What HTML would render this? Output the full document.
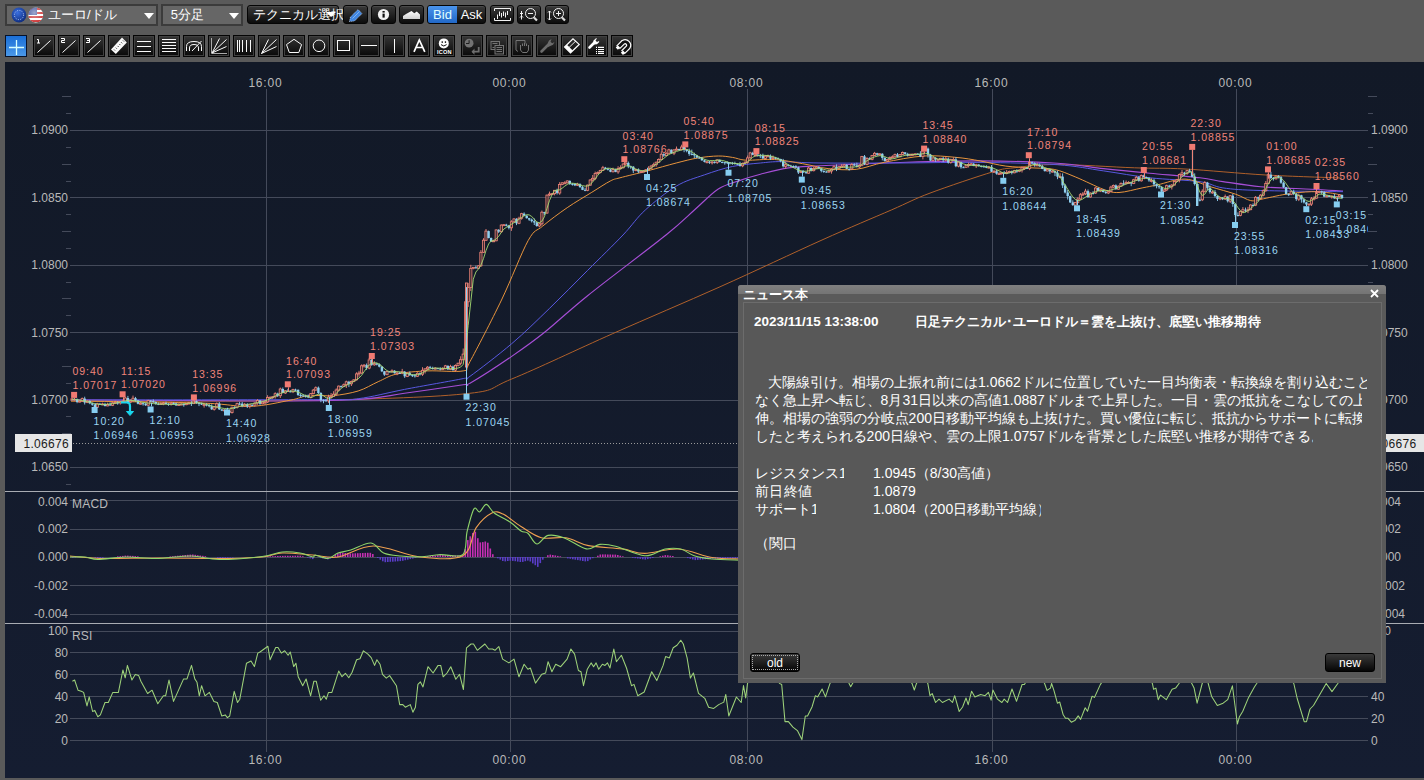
<!DOCTYPE html><html><head><meta charset="utf-8"><style>
*{margin:0;padding:0;box-sizing:border-box}
html,body{width:1424px;height:780px;overflow:hidden;background:#5a5a5a;font-family:"Liberation Sans",sans-serif}
.abs{position:absolute}
.dd{position:absolute;top:4px;height:22px;background:#666;border:2px solid #3b3b3b;color:#fff;font-size:13px;line-height:18px}
.dd .arr{position:absolute;top:7px;width:0;height:0;border-left:5px solid transparent;border-right:5px solid transparent;border-top:6px solid #fff}
.bt{position:absolute;top:5px;height:19px;width:25px;border-radius:3px;background:linear-gradient(#3a3a3a,#0c0c0c);border:1px solid #050505;box-shadow:inset 0 1px 0 #4a4a4a}
.tb{position:absolute;top:35px;width:22px;height:22px;background:linear-gradient(#363636,#080808);border:1px solid #050505;box-shadow:inset 0 0 0 1px #404040}
.tb svg{position:absolute;left:0;top:0}
</style></head><body>
<div class="dd" style="left:5px;width:153px"><svg class="abs" style="left:3.6px;top:1.3px" width="40" height="16" viewBox="0 0 40 16"><defs><radialGradient id="eu" cx="40%" cy="35%" r="70%"><stop offset="0" stop-color="#3a6fe0"/><stop offset="1" stop-color="#0d2a7a"/></radialGradient><radialGradient id="us" cx="40%" cy="35%" r="70%"><stop offset="0" stop-color="#fff" stop-opacity=".5"/><stop offset="1" stop-color="#fff" stop-opacity="0"/></radialGradient></defs><circle cx="8" cy="8" r="7.4" fill="url(#eu)"/><circle cx="8" cy="8" r="4.6" fill="none" stroke="#b8d0ff" stroke-width="1" stroke-dasharray="1 1.4"/><clipPath id="uc"><circle cx="24.8" cy="8" r="7.4"/></clipPath><g clip-path="url(#uc)"><rect x="17" y="0" width="16" height="16" fill="#fff"/><rect x="17" y="1" width="16" height="2" fill="#c33"/><rect x="17" y="5" width="16" height="2" fill="#c33"/><rect x="17" y="9" width="16" height="2" fill="#c33"/><rect x="17" y="13" width="16" height="2" fill="#c33"/><rect x="17" y="0" width="9" height="8" fill="#3b4f9a"/><circle cx="24.8" cy="8" r="7.4" fill="url(#us)"/></g></svg><span class="abs" style="left:41px;top:-0.5px;width:53.4px;line-height:18px;white-space:nowrap;text-align:justify;text-align-last:justify">ユーロ/ドル</span><span class="arr" style="left:137px"></span></div>
<div class="dd" style="left:161px;width:82px"><span class="abs" style="left:7.8px;top:-0.5px;width:28.1px;line-height:18px;white-space:nowrap;text-align:justify;text-align-last:justify">5分足</span><span class="arr" style="left:66px"></span></div>
<div class="bt" style="left:247px;width:92px;color:#fff;font-size:13px;line-height:17px"><span class="abs" style="left:4.9px;top:0;width:68px;white-space:nowrap;text-align:justify;text-align-last:justify">テクニカル選択</span><span class="abs" style="left:78px;top:6px;width:0;height:0;border-left:5px solid transparent;border-right:5px solid transparent;border-top:5px solid #fff"></span></div>
<div class="bt" style="left:343px;width:25px;"><svg class="abs" style="left:-1px;top:-1px" width="25" height="19" viewBox="0 0 25 19"><path d="M6.5 16.5L7.5 12L15 4.5L19 8.5L11.5 16Z" fill="#3f85e0" stroke="#cfe2ff" stroke-width="0.7" stroke-dasharray="1 0.8"/><path d="M9.5 13.5L16.5 6.5" stroke="#9cc4f4" stroke-width="0.7"/></svg></div>
<div class="bt" style="left:371px;width:25px;"><svg class="abs" style="left:-1px;top:-1px" width="25" height="19" viewBox="0 0 25 19"><circle cx="12.5" cy="9.5" r="5.6" fill="#f4f4f4"/><rect x="11.5" y="6" width="2.2" height="1.6" fill="#111"/><rect x="11.5" y="8.6" width="2.2" height="4" fill="#111"/></svg></div>
<div class="bt" style="left:399px;width:25px;"><svg class="abs" style="left:-1px;top:-1px" width="25" height="19" viewBox="0 0 25 19"><defs><linearGradient id="mt" x1="0" y1="0" x2="0" y2="1"><stop offset="0" stop-color="#fff"/><stop offset="1" stop-color="#d0d0d0"/></linearGradient></defs><path d="M4 14V11L7 9L12.5 6L15.3 8.2L17.8 6.6L21 9.5V14Z" fill="url(#mt)"/></svg></div>
<div class="bt" style="left:427px;width:59px;color:#fff;font-size:13px;line-height:17px;overflow:hidden"><span class="abs" style="left:0;top:0;width:29px;height:17px;background:linear-gradient(#4a94ec,#2168c8);color:#e0ffff;text-align:center">Bid</span><span class="abs" style="left:29px;top:0;width:29px;text-align:center">Ask</span></div>
<div class="bt" style="left:490px;width:24px;"><svg class="abs" style="left:-1px;top:-1px" width="24" height="19" viewBox="0 0 24 19"><path d="M4.5 6V3.5H20.5V6M4.5 13V15.5H20.5V13" stroke="#f2f2f2" fill="none" stroke-width="1" stroke-width="1.2"/><path d="M7.5 9.5V14M9.5 6.5V11M11.5 8V12.5M13.5 6.5V11M15.5 7.5V12.5M17.5 6V10" stroke="#f2f2f2" fill="none" stroke-width="1"/></svg></div>
<div class="bt" style="left:517px;width:24px;"><svg class="abs" style="left:-1px;top:-1px" width="24" height="19" viewBox="0 0 24 19"><circle cx="13.5" cy="8.5" r="5" stroke="#f2f2f2" fill="none" stroke-width="1" stroke-width="1.3"/><path d="M11 8.5H16" stroke="#f2f2f2" fill="none" stroke-width="1" stroke-width="1.3"/><path d="M17 12.5L20 15.5" stroke="#ddd" stroke-width="2.2"/><path d="M4.5 6V14.5M3 8L4.5 9.5L6 8M3 12.5L4.5 11L6 12.5" stroke="#f2f2f2" fill="none" stroke-width="1"/></svg></div>
<div class="bt" style="left:545px;width:24px;"><svg class="abs" style="left:-1px;top:-1px" width="24" height="19" viewBox="0 0 24 19"><circle cx="13.5" cy="8.5" r="5" stroke="#f2f2f2" fill="none" stroke-width="1" stroke-width="1.3"/><path d="M11 8.5H16M13.5 6V11" stroke="#f2f2f2" fill="none" stroke-width="1" stroke-width="1.3"/><path d="M17 12.5L20 15.5" stroke="#ddd" stroke-width="2.2"/><path d="M4.5 6V15M3 7.5L4.5 6L6 7.5M3 13.5L4.5 15L6 13.5" stroke="#f2f2f2" fill="none" stroke-width="1"/></svg></div>
<div class="tb" style="left:5px;background:linear-gradient(#1a6fd8,#4a98e8);border-color:#06122a;box-shadow:none"><svg width="22" height="22" viewBox="0 0 22 22" style="position:absolute;left:-1px;top:-1px"><path d="M11.5 5V20M4 12.5H19" stroke="#d8ffff" stroke-width="1.3"/></svg></div>
<div class="tb" style="left:33px"><svg width="22" height="22" viewBox="0 0 22 22" style="position:absolute;left:-1px;top:-1px"><path d="M4.5 17.5L17.5 5.5" stroke="#fafafa" fill="none" stroke-width="1" stroke-width="1.4"/><path d="M4 4.5H5.5V8M4 8H7" stroke="#fff" fill="none" stroke-width="1"/></svg></div>
<div class="tb" style="left:58px"><svg width="22" height="22" viewBox="0 0 22 22" style="position:absolute;left:-1px;top:-1px"><path d="M4.5 17.5L17.5 5.5" stroke="#fafafa" fill="none" stroke-width="1" stroke-width="1.4"/><path d="M3 3.5H6.5V5.5H3.5V7.5H7" stroke="#fff" fill="none" stroke-width="1"/></svg></div>
<div class="tb" style="left:83px"><svg width="22" height="22" viewBox="0 0 22 22" style="position:absolute;left:-1px;top:-1px"><path d="M4.5 17.5L17.5 5.5" stroke="#fafafa" fill="none" stroke-width="1" stroke-width="1.4"/><path d="M3 3.5H6.5V7.5H3M4 5.5H6.5" stroke="#fff" fill="none" stroke-width="1"/></svg></div>
<div class="tb" style="left:108px"><svg width="22" height="22" viewBox="0 0 22 22" style="position:absolute;left:-1px;top:-1px"><path d="M3 14.4L7.8 18.9L18.8 7.4L14 2.6Z" fill="#fafafa"/><path d="M6 14.5L7 15.5M7.8 12.7L8.8 13.7M9.6 10.9L10.6 11.9M11.4 9.1L12.4 10.1M13.2 7.3L14.2 8.3M15 5.5L16 6.5" stroke="#222" stroke-width="0.9"/></svg></div>
<div class="tb" style="left:133px"><svg width="22" height="22" viewBox="0 0 22 22" style="position:absolute;left:-1px;top:-1px"><path d="M4 6.5H18M4 11.5H18M4 16.5H18" stroke="#fafafa" fill="none" stroke-width="1" stroke-width="1.3"/></svg></div>
<div class="tb" style="left:158px"><svg width="22" height="22" viewBox="0 0 22 22" style="position:absolute;left:-1px;top:-1px"><path d="M4 4.5H18M4 7.5H18M4 10.5H18M4 13.5H18M4 16.5H18" stroke="#fafafa" fill="none" stroke-width="1" stroke-width="1.2"/></svg></div>
<div class="tb" style="left:183px"><svg width="22" height="22" viewBox="0 0 22 22" style="position:absolute;left:-1px;top:-1px"><path d="M3.5 16V11.5Q3.5 6.5 11 6.5Q18.5 6.5 18.5 11.5V16M6.5 16V13Q6.5 9.5 11 9.5Q15.5 9.5 15.5 13V16" stroke="#fafafa" fill="none" stroke-width="1" stroke-width="1.1"/><path d="M9 16L18.5 6" stroke="#fafafa" fill="none" stroke-width="1"/></svg></div>
<div class="tb" style="left:208px"><svg width="22" height="22" viewBox="0 0 22 22" style="position:absolute;left:-1px;top:-1px"><path d="M3.5 3V18.5H19" stroke="#aaa" fill="none" stroke-width="1"/><path d="M4 18L11.5 3.5M4 18L18.5 4.5M4 18L18.5 11.5" stroke="#fafafa" fill="none" stroke-width="1" stroke-width="1.1"/></svg></div>
<div class="tb" style="left:233px"><svg width="22" height="22" viewBox="0 0 22 22" style="position:absolute;left:-1px;top:-1px"><path d="M4.5 5V17M6.5 5V17M9.5 5V17M13.5 5V17M17.5 5V17" stroke="#fafafa" fill="none" stroke-width="1"/></svg></div>
<div class="tb" style="left:258px"><svg width="22" height="22" viewBox="0 0 22 22" style="position:absolute;left:-1px;top:-1px"><path d="M3.5 18.5L10.5 4.5M3.5 18.5L18.5 4.5M3.5 18.5L18.5 11.5" stroke="#fafafa" fill="none" stroke-width="1" stroke-width="1.1"/></svg></div>
<div class="tb" style="left:283px"><svg width="22" height="22" viewBox="0 0 22 22" style="position:absolute;left:-1px;top:-1px"><path d="M11 4.3L18.6 9.6L15.8 17.5H6.3L3.5 9.6Z" stroke="#fafafa" fill="none" stroke-width="1" stroke-width="1.1"/></svg></div>
<div class="tb" style="left:308px"><svg width="22" height="22" viewBox="0 0 22 22" style="position:absolute;left:-1px;top:-1px"><circle cx="11" cy="10.8" r="5.8" stroke="#fafafa" fill="none" stroke-width="1" stroke-width="1.1"/></svg></div>
<div class="tb" style="left:333px"><svg width="22" height="22" viewBox="0 0 22 22" style="position:absolute;left:-1px;top:-1px"><rect x="4.5" y="5.5" width="12" height="10" stroke="#fafafa" fill="none" stroke-width="1" stroke-width="1.1"/></svg></div>
<div class="tb" style="left:358px"><svg width="22" height="22" viewBox="0 0 22 22" style="position:absolute;left:-1px;top:-1px"><path d="M3 10.5H19" stroke="#fafafa" fill="none" stroke-width="1" stroke-width="1.2"/></svg></div>
<div class="tb" style="left:383px"><svg width="22" height="22" viewBox="0 0 22 22" style="position:absolute;left:-1px;top:-1px"><path d="M11.5 4V18" stroke="#fafafa" fill="none" stroke-width="1" stroke-width="1.2"/></svg></div>
<div class="tb" style="left:408px"><svg width="22" height="22" viewBox="0 0 22 22" style="position:absolute;left:-1px;top:-1px"><path d="M6 16.8L11.3 5L16.8 16.8M8 12.5H14.8" stroke="#fff" fill="none" stroke-width="1.7"/></svg></div>
<div class="tb" style="left:433px"><svg width="22" height="22" viewBox="0 0 22 22" style="position:absolute;left:-1px;top:-1px"><circle cx="10.8" cy="8.4" r="5" fill="#fff"/><rect x="8.6" y="6.3" width="1.3" height="1.6" fill="#111"/><rect x="11.8" y="6.3" width="1.3" height="1.6" fill="#111"/><path d="M8 9.6Q10.8 12.4 13.6 9.6" stroke="#111" stroke-width="1" fill="none"/><text x="11.4" y="19.2" font-size="5.6" font-weight="bold" fill="#fff" text-anchor="middle" letter-spacing="0.2" font-family="Liberation Sans">ICON</text></svg></div>
<div class="tb" style="left:461px"><svg width="22" height="22" viewBox="0 0 22 22" style="position:absolute;left:-1px;top:-1px"><circle cx="8.1" cy="8.2" r="4.4" fill="#737373"/><path d="M8.1 5.2V8.5H5" stroke="#1e1e1e" fill="none" stroke-width="1"/><path d="M17.7 12V16.7H11.5" stroke="#6e6e6e" fill="none" stroke-width="1.8"/><path d="M13.5 13.5L10.5 16.7L13.5 19.8Z" fill="#6e6e6e"/></svg></div>
<div class="tb" style="left:486px"><svg width="22" height="22" viewBox="0 0 22 22" style="position:absolute;left:-1px;top:-1px"><rect x="5" y="6.5" width="8.5" height="8" stroke="#747474" fill="none" stroke-width="1"/><path d="M6.5 8.5H11.5M6.5 12.5H8.5" stroke="#747474" stroke-width="1"/><rect x="9" y="10.5" width="8.5" height="8.5" fill="#1c1c1c" stroke="#747474" stroke-width="1"/><path d="M10.5 12.5H16M10.5 14.5H16M10.5 16.5H16" stroke="#747474" stroke-width="1"/></svg></div>
<div class="tb" style="left:511px"><svg width="22" height="22" viewBox="0 0 22 22" style="position:absolute;left:-1px;top:-1px"><path d="M5 15V5.5H14V8.5" stroke="#747474" fill="none" stroke-width="1"/><path d="M5 15L7 16.5M9.5 15V10M11.5 11V8.5M13.5 11V8M15.5 11V8.5M17.5 12V10M9.5 15L11.5 17.5H16L17.5 15V10" stroke="#747474" fill="none" stroke-width="1"/></svg></div>
<div class="tb" style="left:536px"><svg width="22" height="22" viewBox="0 0 22 22" style="position:absolute;left:-1px;top:-1px"><path d="M5.5 16.5L11.5 10.5" stroke="#6c6c6c" stroke-width="2.6" stroke-linecap="round"/><path d="M10 11.5L13 5.5L15.5 4L14.5 6.8L16.2 8.3L18.5 7L17 9.8L12 12Z" fill="#6c6c6c"/></svg></div>
<div class="tb" style="left:561px"><svg width="22" height="22" viewBox="0 0 22 22" style="position:absolute;left:-1px;top:-1px"><path d="M3.6 12L12 3.9L18.2 9.4L9.5 17.8Z" stroke="#fff" fill="none" stroke-width="1.2"/><path d="M3.6 12L5.9 9.8L11.7 15.6L9.5 17.8Z" fill="#fff"/><path d="M7.5 13L15 5.8" stroke="#fff" stroke-width="0.9"/></svg></div>
<div class="tb" style="left:586px"><svg width="22" height="22" viewBox="0 0 22 22" style="position:absolute;left:-1px;top:-1px"><path d="M3.5 12.5L8.5 7.5" stroke="#fff" stroke-width="2.6" stroke-linecap="round"/><path d="M7 9L7.5 5.5L10 3.3L11 3.5L9.5 5.5L11 7L13 6L13.2 7L11 9.2L8 9.5Z" fill="#fff"/><path d="M10 12.3H11M10 14.5H11M10 16.6H11M10 18.5H11M12 12.3H18M12 14.5H18M12 16.6H18M12 18.5H18" stroke="#fff" stroke-width="1.2"/></svg></div>
<div class="tb" style="left:611px"><svg width="22" height="22" viewBox="0 0 22 22" style="position:absolute;left:-1px;top:-1px"><path d="M7 12.5L12.3 7.2A3.6 3.6 0 0 1 17.2 12.1L11.9 17.4" stroke="#fff" fill="none" stroke-width="5.2"/><path d="M7 12.5L12.3 7.2A3.6 3.6 0 0 1 17.2 12.1L11.9 17.4" stroke="#111" fill="none" stroke-width="2.8"/><path d="M4.7 12.6L6.9 10.4L9.1 12.6L6.9 14.8ZM9.8 17.7L12 15.5L14.2 17.7L12 19.9Z" fill="#fff"/></svg></div>
<svg class="abs" style="left:0;top:0" width="1424" height="780" viewBox="0 0 1424 780" font-family="Liberation Sans">
<defs><linearGradient id="bgg" x1="0" y1="0" x2="0" y2="1"><stop offset="0" stop-color="#121927"/><stop offset="1" stop-color="#151d31"/></linearGradient></defs><rect x="5" y="62" width="1419" height="716" fill="url(#bgg)"/>
<path d="M70 130.5 H1368" stroke="#444a5a" stroke-width="1"/>
<path d="M70 197.5 H1368" stroke="#444a5a" stroke-width="1"/>
<path d="M70 265.5 H1368" stroke="#444a5a" stroke-width="1"/>
<path d="M70 332.5 H1368" stroke="#444a5a" stroke-width="1"/>
<path d="M70 400.5 H1368" stroke="#444a5a" stroke-width="1"/>
<path d="M70 467.5 H1368" stroke="#444a5a" stroke-width="1"/>
<path d="M62 96.5 H71 M1368 96.5 H1377" stroke="#444a5a" stroke-width="1"/>
<path d="M66 113.5 H71 M1368 113.5 H1373" stroke="#444a5a" stroke-width="1"/>
<path d="M66 147.5 H71 M1368 147.5 H1373" stroke="#444a5a" stroke-width="1"/>
<path d="M62 164.5 H71 M1368 164.5 H1377" stroke="#444a5a" stroke-width="1"/>
<path d="M66 181.5 H71 M1368 181.5 H1373" stroke="#444a5a" stroke-width="1"/>
<path d="M66 214.5 H71 M1368 214.5 H1373" stroke="#444a5a" stroke-width="1"/>
<path d="M62 231.5 H71 M1368 231.5 H1377" stroke="#444a5a" stroke-width="1"/>
<path d="M66 248.5 H71 M1368 248.5 H1373" stroke="#444a5a" stroke-width="1"/>
<path d="M66 282.5 H71 M1368 282.5 H1373" stroke="#444a5a" stroke-width="1"/>
<path d="M62 298.5 H71 M1368 298.5 H1377" stroke="#444a5a" stroke-width="1"/>
<path d="M66 315.5 H71 M1368 315.5 H1373" stroke="#444a5a" stroke-width="1"/>
<path d="M66 349.5 H71 M1368 349.5 H1373" stroke="#444a5a" stroke-width="1"/>
<path d="M62 366.5 H71 M1368 366.5 H1377" stroke="#444a5a" stroke-width="1"/>
<path d="M66 383.5 H71 M1368 383.5 H1373" stroke="#444a5a" stroke-width="1"/>
<path d="M66 416.5 H71 M1368 416.5 H1373" stroke="#444a5a" stroke-width="1"/>
<path d="M62 433.5 H71 M1368 433.5 H1377" stroke="#444a5a" stroke-width="1"/>
<path d="M66 450.5 H71 M1368 450.5 H1373" stroke="#444a5a" stroke-width="1"/>
<path d="M66 484.5 H71 M1368 484.5 H1373" stroke="#444a5a" stroke-width="1"/>
<path d="M70 500.5 H1368" stroke="#444a5a" stroke-width="1"/>
<path d="M70 529.5 H1368" stroke="#444a5a" stroke-width="1"/>
<path d="M70 557.5 H1368" stroke="#444a5a" stroke-width="1"/>
<path d="M70 585.5 H1368" stroke="#444a5a" stroke-width="1"/>
<path d="M70 614.5 H1368" stroke="#444a5a" stroke-width="1"/>
<path d="M70 631.5 H1368" stroke="#444a5a" stroke-width="1"/>
<path d="M70 652.5 H1368" stroke="#444a5a" stroke-width="1"/>
<path d="M70 674.5 H1368" stroke="#444a5a" stroke-width="1"/>
<path d="M70 696.5 H1368" stroke="#444a5a" stroke-width="1"/>
<path d="M70 718.5 H1368" stroke="#444a5a" stroke-width="1"/>
<path d="M70 740.5 H1368" stroke="#444a5a" stroke-width="1"/>
<path d="M266.5 89 V752" stroke="#444a5a" stroke-width="1"/>
<path d="M510.5 89 V752" stroke="#444a5a" stroke-width="1"/>
<path d="M747.5 89 V752" stroke="#444a5a" stroke-width="1"/>
<path d="M992.5 89 V752" stroke="#444a5a" stroke-width="1"/>
<path d="M1236.5 89 V752" stroke="#444a5a" stroke-width="1"/>
<path d="M5 491.5H1424M5 623.5H1424" stroke="#a9acb3" stroke-width="1"/>
<path d="M70 443.5H1368" stroke="#9a9a9a" stroke-width="1" stroke-dasharray="1 2"/>
<text x="68" y="134.3" fill="#b9b9b9" font-size="12" text-anchor="end" letter-spacing="0" >1.0900</text>
<text x="1371" y="134.3" fill="#b9b9b9" font-size="12" text-anchor="start" letter-spacing="0" >1.0900</text>
<text x="68" y="201.7" fill="#b9b9b9" font-size="12" text-anchor="end" letter-spacing="0" >1.0850</text>
<text x="1371" y="201.7" fill="#b9b9b9" font-size="12" text-anchor="start" letter-spacing="0" >1.0850</text>
<text x="68" y="269.1" fill="#b9b9b9" font-size="12" text-anchor="end" letter-spacing="0" >1.0800</text>
<text x="1371" y="269.1" fill="#b9b9b9" font-size="12" text-anchor="start" letter-spacing="0" >1.0800</text>
<text x="68" y="336.5" fill="#b9b9b9" font-size="12" text-anchor="end" letter-spacing="0" >1.0750</text>
<text x="1371" y="336.5" fill="#b9b9b9" font-size="12" text-anchor="start" letter-spacing="0" >1.0750</text>
<text x="68" y="403.9" fill="#b9b9b9" font-size="12" text-anchor="end" letter-spacing="0" >1.0700</text>
<text x="1371" y="403.9" fill="#b9b9b9" font-size="12" text-anchor="start" letter-spacing="0" >1.0700</text>
<text x="68" y="471.3" fill="#b9b9b9" font-size="12" text-anchor="end" letter-spacing="0" >1.0650</text>
<text x="1371" y="471.3" fill="#b9b9b9" font-size="12" text-anchor="start" letter-spacing="0" >1.0650</text>
<text x="68" y="505.5" fill="#b9b9b9" font-size="12" text-anchor="end" letter-spacing="0" >0.004</text>
<text x="1371" y="505.5" fill="#b9b9b9" font-size="12" text-anchor="start" letter-spacing="0" >0.004</text>
<text x="68" y="532.9" fill="#b9b9b9" font-size="12" text-anchor="end" letter-spacing="0" >0.002</text>
<text x="1371" y="532.9" fill="#b9b9b9" font-size="12" text-anchor="start" letter-spacing="0" >0.002</text>
<text x="68" y="561.3" fill="#b9b9b9" font-size="12" text-anchor="end" letter-spacing="0" >0.000</text>
<text x="1371" y="561.3" fill="#b9b9b9" font-size="12" text-anchor="start" letter-spacing="0" >0.000</text>
<text x="68" y="589.7" fill="#b9b9b9" font-size="12" text-anchor="end" letter-spacing="0" >-0.002</text>
<text x="1371" y="589.7" fill="#b9b9b9" font-size="12" text-anchor="start" letter-spacing="0" >-0.002</text>
<text x="68" y="618.1" fill="#b9b9b9" font-size="12" text-anchor="end" letter-spacing="0" >-0.004</text>
<text x="1371" y="618.1" fill="#b9b9b9" font-size="12" text-anchor="start" letter-spacing="0" >-0.004</text>
<text x="68" y="634.8" fill="#b9b9b9" font-size="12" text-anchor="end" letter-spacing="0" >100</text>
<text x="1371" y="634.8" fill="#b9b9b9" font-size="12" text-anchor="start" letter-spacing="0" >100</text>
<text x="68" y="656.8" fill="#b9b9b9" font-size="12" text-anchor="end" letter-spacing="0" >80</text>
<text x="1371" y="656.8" fill="#b9b9b9" font-size="12" text-anchor="start" letter-spacing="0" >80</text>
<text x="68" y="678.7" fill="#b9b9b9" font-size="12" text-anchor="end" letter-spacing="0" >60</text>
<text x="1371" y="678.7" fill="#b9b9b9" font-size="12" text-anchor="start" letter-spacing="0" >60</text>
<text x="68" y="700.7" fill="#b9b9b9" font-size="12" text-anchor="end" letter-spacing="0" >40</text>
<text x="1371" y="700.7" fill="#b9b9b9" font-size="12" text-anchor="start" letter-spacing="0" >40</text>
<text x="68" y="722.6" fill="#b9b9b9" font-size="12" text-anchor="end" letter-spacing="0" >20</text>
<text x="1371" y="722.6" fill="#b9b9b9" font-size="12" text-anchor="start" letter-spacing="0" >20</text>
<text x="68" y="744.6" fill="#b9b9b9" font-size="12" text-anchor="end" letter-spacing="0" >0</text>
<text x="1371" y="744.6" fill="#b9b9b9" font-size="12" text-anchor="start" letter-spacing="0" >0</text>
<text x="72" y="507.7" fill="#b9b9b9" font-size="12" text-anchor="start" letter-spacing="0.2" >MACD</text>
<text x="72" y="639.8" fill="#b9b9b9" font-size="12" text-anchor="start" letter-spacing="0.2" >RSI</text>
<text x="265.4" y="87" fill="#b9b9b9" font-size="12" text-anchor="middle" letter-spacing="0.8" >16:00</text>
<text x="265.4" y="763.7" fill="#b9b9b9" font-size="12" text-anchor="middle" letter-spacing="0.8" >16:00</text>
<text x="509.4" y="87" fill="#b9b9b9" font-size="12" text-anchor="middle" letter-spacing="0.8" >00:00</text>
<text x="509.4" y="763.7" fill="#b9b9b9" font-size="12" text-anchor="middle" letter-spacing="0.8" >00:00</text>
<text x="746.4" y="87" fill="#b9b9b9" font-size="12" text-anchor="middle" letter-spacing="0.8" >08:00</text>
<text x="746.4" y="763.7" fill="#b9b9b9" font-size="12" text-anchor="middle" letter-spacing="0.8" >08:00</text>
<text x="991.4" y="87" fill="#b9b9b9" font-size="12" text-anchor="middle" letter-spacing="0.8" >16:00</text>
<text x="991.4" y="763.7" fill="#b9b9b9" font-size="12" text-anchor="middle" letter-spacing="0.8" >16:00</text>
<text x="1235.4" y="87" fill="#b9b9b9" font-size="12" text-anchor="middle" letter-spacing="0.8" >00:00</text>
<text x="1235.4" y="763.7" fill="#b9b9b9" font-size="12" text-anchor="middle" letter-spacing="0.8" >00:00</text>
<rect x="15" y="434" width="57" height="18" fill="#e6e6e6"/>
<text x="69" y="447.5" fill="#1a1a1a" font-size="12" text-anchor="end" letter-spacing="0.3" >1.06676</text>
<rect x="1368" y="434" width="60" height="18" fill="#e6e6e6"/>
<text x="1371" y="447.5" fill="#1a1a1a" font-size="12" text-anchor="start" letter-spacing="0.3" >1.06676</text>
<path d="M71 401C109.2 400.9 234.6 401.7 300 400.5C365.4 399.3 427.9 397.6 463.2 394C498.5 390.4 486.8 389.1 511.7 379C536.6 368.9 578.1 349 612.8 333.6C647.5 318.2 685.1 302.4 720 286.8C754.9 271.2 793.5 252.8 822 240C850.5 227.2 873.3 217.8 891.3 210C909.3 202.2 913.2 199.4 930 193.1C946.8 186.8 978.3 176.2 992.3 172C1006.3 167.8 1003.2 169.1 1014 167.8C1024.8 166.6 1036.9 164.5 1057 164.5C1077.1 164.5 1113.2 167.1 1134.5 167.8C1155.8 168.6 1163.1 167.8 1185 169C1206.9 170.2 1239.8 173.5 1266 175C1292.2 176.5 1329.3 177.5 1342 178" fill="none" stroke="#b0602a" stroke-width="1.0" opacity="1"/>
<path d="M71 399.7C102.5 399.9 212.2 401 260 401C307.9 401 334 400.8 358.1 399.5C382.2 398.2 387 395.8 404.5 393.3C422 390.9 452.3 386.5 463.2 384.8C474.1 383.1 461.9 388 470 383.3C478.1 378.6 499.3 364.9 511.7 356.4C524.1 347.9 532 342.4 544.6 332.3C557.2 322.2 567.4 311.9 587.6 295.7C607.8 279.5 648.2 249.3 666 235C683.8 220.7 685.7 217.7 694.4 210C703.1 202.3 710.8 193.9 718.3 189C725.8 184.1 732.4 183.1 739.4 180.6C746.4 178.1 752.2 176.3 760.4 174.2C768.6 172.1 778.6 169.3 788.5 167.9C798.4 166.5 801.4 166.7 820 165.8C838.6 164.9 873.3 163.3 900 162.5C926.7 161.7 953.8 160.8 980 160.9C1006.2 161 1036.6 161.9 1057.2 163.2C1077.8 164.5 1088.1 166.9 1103.6 168.6C1119 170.3 1133.8 171.7 1149.9 173.2C1166 174.7 1187.8 176.4 1200 177.8C1212.2 179.2 1212.8 180.1 1222.9 181.6C1233.1 183.1 1246.2 185.4 1260.9 186.7C1275.7 188 1297.7 188.5 1311.4 189.2C1325.1 189.9 1337.7 190.8 1343 191.1" fill="none" stroke="#a64ed6" stroke-width="1.15" opacity="1"/>
<path d="M71 400C112.2 399.9 270.1 399.8 318 399.6C365.9 399.4 343.7 400.4 358.1 398.7C372.5 397 387 392.8 404.5 389.4C422 386 452.3 380.8 463.2 378.6C474.1 376.4 461.9 382.1 470 376.3C478.1 370.5 498.4 355 511.7 343.7C525 332.4 537 320.5 549.6 308.3C562.2 296.1 575.4 282.6 587.6 270.4C599.8 258.2 613.4 245.1 623 235C632.6 224.9 636.4 218.1 645.3 210C654.2 201.9 666.4 192 676.2 186.2C686 180.3 694.9 178.2 704.3 174.9C713.7 171.6 723 168.5 732.4 166.5C741.8 164.5 752.2 163.8 760.4 163C768.6 162.2 771.6 161.6 781.5 161.6C791.4 161.6 800.2 162.8 820 163C839.8 163.2 873.3 163.1 900 163C926.7 162.9 953.8 162.1 980 162.4C1006.2 162.7 1036.6 163.3 1057.2 164.7C1077.8 166.1 1088.1 168.7 1103.6 170.9C1119 173.1 1133.8 176 1149.9 177.8C1166 179.6 1187.8 180 1200 181.7C1212.2 183.4 1212.8 186.4 1222.9 187.9C1233.1 189.4 1240.9 189.9 1260.9 190.5C1280.9 191.1 1329.3 191.5 1343 191.7" fill="none" stroke="#5858e0" stroke-width="1.0" opacity="1"/>
<path d="M71 401C92.5 401.3 170.2 402.1 200 403C229.8 403.9 235 406.9 250 406.4C265 405.9 280.4 402 290.2 400.2C300 398.4 301.5 396.4 308.7 395.6C315.9 394.8 325.2 396.4 333.4 395.6C341.6 394.8 350.6 393.3 358.1 391C365.6 388.7 371.8 384.5 378.2 381.7C384.6 378.9 388.6 375.8 396.8 374C405.1 372.2 416.6 371.4 427.7 370.9C438.8 370.4 456.1 372.4 463.2 370.9C470.2 369.3 463.6 373.4 470 361.6C476.4 349.8 491.8 320.2 501.5 300C511.2 279.8 521.4 252.8 528.2 240.5C535.1 228.2 536.1 231.7 542.6 226.2C549.1 220.7 559 213.3 567.2 207.7C575.4 202 584.6 196.8 591.8 192.3C599 187.9 605.6 183.4 610.3 181C615 178.6 613.7 179.5 620 177.8C626.3 176.1 638.7 173.2 648.1 170.7C657.5 168.2 668 165.1 676.2 163C684.4 160.9 690.2 159.3 697.2 158.1C704.2 156.9 712.4 156.1 718.3 156C724.2 155.9 727.7 156.7 732.4 157.4C737.1 158.1 739.4 159.8 746.4 160.2C753.4 160.5 765.1 158.9 774.5 159.5C783.9 160.1 793.7 162.2 802.6 163.7C811.5 165.2 819.2 167.7 828.1 168.6C837 169.5 846.8 170.4 856.2 169.3C865.6 168.2 873.1 164.5 884.3 162.3C895.5 160.1 911.8 156.8 923.6 156C935.4 155.2 945.8 156.5 955.3 157.3C964.8 158.1 972.1 159.5 980.5 161C988.9 162.5 997.4 165 1005.8 166.1C1014.2 167.2 1022.9 167.2 1031 167.8C1039.1 168.4 1046.7 167.9 1054.2 169.4C1061.7 170.9 1067.6 173.8 1075.8 177.1C1084 180.4 1096.4 186.8 1103.6 189.4C1110.8 192 1112.6 192.8 1119 192.5C1125.4 192.2 1135.8 189.2 1142.2 187.9C1148.7 186.6 1150.6 186.3 1157.7 184.8C1164.8 183.3 1176.2 178.8 1185 179.1C1193.8 179.4 1201.9 184.2 1210.3 186.7C1218.7 189.2 1228.9 191.9 1235.6 194.2C1242.3 196.5 1246.5 199.8 1250.7 200.6C1254.9 201.4 1255 200.4 1260.9 199.3C1266.8 198.2 1277.7 195.5 1286.1 194.2C1294.5 192.9 1304 191.9 1311.4 191.7C1318.8 191.5 1325.1 192.4 1330.4 193C1335.7 193.6 1340.9 195.1 1343 195.5" fill="none" stroke="#e8943c" stroke-width="1.0" opacity="1"/>
<path d="M72 398.1 V399.5" stroke="#ee8478" stroke-width="0.9"/>
<rect x="70.9" y="398.8" width="2.2" height="1" fill="#3a2a30" stroke="#ee8478" stroke-width="0.8"/>
<path d="M74.5 397.7 V399.7" stroke="#8fd0f0" stroke-width="0.9"/>
<rect x="73.3" y="398.8" width="2.4" height="1" fill="#8fd0f0"/>
<path d="M77.1 398.5 V403.2" stroke="#8fd0f0" stroke-width="0.9"/>
<rect x="75.9" y="399.2" width="2.4" height="2.7" fill="#8fd0f0"/>
<path d="M79.6 400.4 V402.4" stroke="#ee8478" stroke-width="0.9"/>
<rect x="78.5" y="401.1" width="2.2" height="1" fill="#3a2a30" stroke="#ee8478" stroke-width="0.8"/>
<path d="M82.2 397.5 V401.9" stroke="#ee8478" stroke-width="0.9"/>
<rect x="81.1" y="398.6" width="2.2" height="2.5" fill="#3a2a30" stroke="#ee8478" stroke-width="0.8"/>
<path d="M84.7 396.7 V404.5" stroke="#8fd0f0" stroke-width="0.9"/>
<rect x="83.5" y="398.6" width="2.4" height="3.9" fill="#8fd0f0"/>
<path d="M87.2 400.3 V403.1" stroke="#ee8478" stroke-width="0.9"/>
<rect x="86.1" y="401.1" width="2.2" height="1.4" fill="#3a2a30" stroke="#ee8478" stroke-width="0.8"/>
<path d="M89.8 400.3 V404.2" stroke="#8fd0f0" stroke-width="0.9"/>
<rect x="88.6" y="401.1" width="2.4" height="2.2" fill="#8fd0f0"/>
<path d="M92.3 402.6 V405.7" stroke="#8fd0f0" stroke-width="0.9"/>
<rect x="91.1" y="403.3" width="2.4" height="1.4" fill="#8fd0f0"/>
<path d="M94.9 403.9 V408.6" stroke="#8fd0f0" stroke-width="0.9"/>
<rect x="93.7" y="404.7" width="2.4" height="2.5" fill="#8fd0f0"/>
<path d="M97.4 402.8 V407.8" stroke="#ee8478" stroke-width="0.9"/>
<rect x="96.3" y="403.7" width="2.2" height="3.5" fill="#3a2a30" stroke="#ee8478" stroke-width="0.8"/>
<path d="M99.9 402.9 V405" stroke="#8fd0f0" stroke-width="0.9"/>
<rect x="98.7" y="403.7" width="2.4" height="1" fill="#8fd0f0"/>
<path d="M102.5 402.7 V405.2" stroke="#ee8478" stroke-width="0.9"/>
<rect x="101.4" y="403.9" width="2.2" height="1" fill="#3a2a30" stroke="#ee8478" stroke-width="0.8"/>
<path d="M105 402.8 V406.5" stroke="#8fd0f0" stroke-width="0.9"/>
<rect x="103.8" y="403.9" width="2.4" height="2.1" fill="#8fd0f0"/>
<path d="M107.6 402.7 V406.3" stroke="#ee8478" stroke-width="0.9"/>
<rect x="106.5" y="404.4" width="2.2" height="1.5" fill="#3a2a30" stroke="#ee8478" stroke-width="0.8"/>
<path d="M110.1 402.3 V405.9" stroke="#8fd0f0" stroke-width="0.9"/>
<rect x="108.9" y="404.4" width="2.4" height="1" fill="#8fd0f0"/>
<path d="M112.6 401.8 V406.1" stroke="#ee8478" stroke-width="0.9"/>
<rect x="111.5" y="402.8" width="2.2" height="2.5" fill="#3a2a30" stroke="#ee8478" stroke-width="0.8"/>
<path d="M115.2 400.8 V403.9" stroke="#ee8478" stroke-width="0.9"/>
<rect x="114.1" y="402.5" width="2.2" height="1" fill="#3a2a30" stroke="#ee8478" stroke-width="0.8"/>
<path d="M117.7 401.3 V404.7" stroke="#8fd0f0" stroke-width="0.9"/>
<rect x="116.5" y="402.5" width="2.4" height="1" fill="#8fd0f0"/>
<path d="M120.3 401.2 V404.6" stroke="#ee8478" stroke-width="0.9"/>
<rect x="119.2" y="401.7" width="2.2" height="1.3" fill="#3a2a30" stroke="#ee8478" stroke-width="0.8"/>
<path d="M122.8 400.3 V402.4" stroke="#ee8478" stroke-width="0.9"/>
<rect x="121.7" y="401.2" width="2.2" height="1" fill="#3a2a30" stroke="#ee8478" stroke-width="0.8"/>
<path d="M125.3 396.8 V402" stroke="#ee8478" stroke-width="0.9"/>
<rect x="124.2" y="398" width="2.2" height="3.2" fill="#3a2a30" stroke="#ee8478" stroke-width="0.8"/>
<path d="M127.9 395.9 V403.7" stroke="#8fd0f0" stroke-width="0.9"/>
<rect x="126.7" y="398" width="2.4" height="4.2" fill="#8fd0f0"/>
<path d="M130.4 399.5 V403" stroke="#ee8478" stroke-width="0.9"/>
<rect x="129.3" y="401.1" width="2.2" height="1.1" fill="#3a2a30" stroke="#ee8478" stroke-width="0.8"/>
<path d="M133 395.6 V401.7" stroke="#ee8478" stroke-width="0.9"/>
<rect x="131.9" y="398.2" width="2.2" height="2.9" fill="#3a2a30" stroke="#ee8478" stroke-width="0.8"/>
<path d="M135.5 396.9 V401.7" stroke="#8fd0f0" stroke-width="0.9"/>
<rect x="134.3" y="398.2" width="2.4" height="2.3" fill="#8fd0f0"/>
<path d="M138 400 V404.3" stroke="#8fd0f0" stroke-width="0.9"/>
<rect x="136.8" y="400.5" width="2.4" height="3.3" fill="#8fd0f0"/>
<path d="M140.6 401.5 V404.7" stroke="#ee8478" stroke-width="0.9"/>
<rect x="139.5" y="403.2" width="2.2" height="1" fill="#3a2a30" stroke="#ee8478" stroke-width="0.8"/>
<path d="M143.1 402.4 V405.6" stroke="#8fd0f0" stroke-width="0.9"/>
<rect x="141.9" y="403.2" width="2.4" height="1" fill="#8fd0f0"/>
<path d="M145.7 402.7 V406" stroke="#8fd0f0" stroke-width="0.9"/>
<rect x="144.5" y="403.8" width="2.4" height="1.4" fill="#8fd0f0"/>
<path d="M148.2 399.8 V406.3" stroke="#ee8478" stroke-width="0.9"/>
<rect x="147.1" y="400.6" width="2.2" height="4.6" fill="#3a2a30" stroke="#ee8478" stroke-width="0.8"/>
<path d="M150.7 400.2 V402.3" stroke="#8fd0f0" stroke-width="0.9"/>
<rect x="149.5" y="400.6" width="2.4" height="1" fill="#8fd0f0"/>
<path d="M153.3 399.4 V402.8" stroke="#8fd0f0" stroke-width="0.9"/>
<rect x="152.1" y="401.1" width="2.4" height="1" fill="#8fd0f0"/>
<path d="M155.8 401.4 V404.7" stroke="#8fd0f0" stroke-width="0.9"/>
<rect x="154.6" y="402" width="2.4" height="1.8" fill="#8fd0f0"/>
<path d="M158.4 402.5 V405.1" stroke="#8fd0f0" stroke-width="0.9"/>
<rect x="157.2" y="403.8" width="2.4" height="1" fill="#8fd0f0"/>
<path d="M160.9 402.4 V404.6" stroke="#ee8478" stroke-width="0.9"/>
<rect x="159.8" y="403.6" width="2.2" height="1" fill="#3a2a30" stroke="#ee8478" stroke-width="0.8"/>
<path d="M163.4 401.9 V405.2" stroke="#ee8478" stroke-width="0.9"/>
<rect x="162.3" y="403" width="2.2" height="1" fill="#3a2a30" stroke="#ee8478" stroke-width="0.8"/>
<path d="M166 401.6 V404.2" stroke="#8fd0f0" stroke-width="0.9"/>
<rect x="164.8" y="403" width="2.4" height="1" fill="#8fd0f0"/>
<path d="M168.5 403.2 V405.8" stroke="#8fd0f0" stroke-width="0.9"/>
<rect x="167.3" y="403.7" width="2.4" height="1" fill="#8fd0f0"/>
<path d="M171.1 401.8 V405.6" stroke="#ee8478" stroke-width="0.9"/>
<rect x="170" y="403.1" width="2.2" height="1.1" fill="#3a2a30" stroke="#ee8478" stroke-width="0.8"/>
<path d="M173.6 402.3 V404.6" stroke="#8fd0f0" stroke-width="0.9"/>
<rect x="172.4" y="403.1" width="2.4" height="1" fill="#8fd0f0"/>
<path d="M176.1 402.7 V405.9" stroke="#8fd0f0" stroke-width="0.9"/>
<rect x="174.9" y="403.3" width="2.4" height="2.1" fill="#8fd0f0"/>
<path d="M178.7 403.4 V405.9" stroke="#ee8478" stroke-width="0.9"/>
<rect x="177.6" y="404.2" width="2.2" height="1.3" fill="#3a2a30" stroke="#ee8478" stroke-width="0.8"/>
<path d="M181.2 403.3 V404.5" stroke="#ee8478" stroke-width="0.9"/>
<rect x="180.1" y="404.1" width="2.2" height="1" fill="#3a2a30" stroke="#ee8478" stroke-width="0.8"/>
<path d="M183.8 403.3 V406.7" stroke="#8fd0f0" stroke-width="0.9"/>
<rect x="182.6" y="404.1" width="2.4" height="1" fill="#8fd0f0"/>
<path d="M186.3 403 V405.2" stroke="#ee8478" stroke-width="0.9"/>
<rect x="185.2" y="403.7" width="2.2" height="1" fill="#3a2a30" stroke="#ee8478" stroke-width="0.8"/>
<path d="M188.8 401.9 V404.3" stroke="#ee8478" stroke-width="0.9"/>
<rect x="187.7" y="403" width="2.2" height="1" fill="#3a2a30" stroke="#ee8478" stroke-width="0.8"/>
<path d="M191.4 401.1 V406" stroke="#8fd0f0" stroke-width="0.9"/>
<rect x="190.2" y="403" width="2.4" height="1" fill="#8fd0f0"/>
<path d="M193.9 400.6 V404.1" stroke="#ee8478" stroke-width="0.9"/>
<rect x="192.8" y="401.1" width="2.2" height="2.3" fill="#3a2a30" stroke="#ee8478" stroke-width="0.8"/>
<path d="M196.5 400.4 V403.8" stroke="#8fd0f0" stroke-width="0.9"/>
<rect x="195.3" y="401.1" width="2.4" height="1.8" fill="#8fd0f0"/>
<path d="M199 402.1 V406.1" stroke="#8fd0f0" stroke-width="0.9"/>
<rect x="197.8" y="402.9" width="2.4" height="1" fill="#8fd0f0"/>
<path d="M201.5 402.7 V405" stroke="#8fd0f0" stroke-width="0.9"/>
<rect x="200.3" y="403.5" width="2.4" height="1" fill="#8fd0f0"/>
<path d="M204.1 404.1 V407.6" stroke="#ee8478" stroke-width="0.9"/>
<rect x="203" y="404.5" width="2.2" height="1" fill="#3a2a30" stroke="#ee8478" stroke-width="0.8"/>
<path d="M206.6 403.2 V406.4" stroke="#8fd0f0" stroke-width="0.9"/>
<rect x="205.4" y="404.5" width="2.4" height="1" fill="#8fd0f0"/>
<path d="M209.2 403.8 V407.4" stroke="#8fd0f0" stroke-width="0.9"/>
<rect x="208" y="405" width="2.4" height="1.3" fill="#8fd0f0"/>
<path d="M211.7 404.4 V409.9" stroke="#8fd0f0" stroke-width="0.9"/>
<rect x="210.5" y="406.3" width="2.4" height="3" fill="#8fd0f0"/>
<path d="M214.2 406 V410.6" stroke="#ee8478" stroke-width="0.9"/>
<rect x="213.1" y="406.9" width="2.2" height="2.4" fill="#3a2a30" stroke="#ee8478" stroke-width="0.8"/>
<path d="M216.8 402.4 V408.5" stroke="#ee8478" stroke-width="0.9"/>
<rect x="215.7" y="403.7" width="2.2" height="3.1" fill="#3a2a30" stroke="#ee8478" stroke-width="0.8"/>
<path d="M219.3 402 V409.9" stroke="#8fd0f0" stroke-width="0.9"/>
<rect x="218.1" y="403.7" width="2.4" height="5.7" fill="#8fd0f0"/>
<path d="M221.9 409 V411.1" stroke="#8fd0f0" stroke-width="0.9"/>
<rect x="220.7" y="409.5" width="2.4" height="1.1" fill="#8fd0f0"/>
<path d="M224.4 409.5 V411" stroke="#ee8478" stroke-width="0.9"/>
<rect x="223.3" y="409.9" width="2.2" height="1" fill="#3a2a30" stroke="#ee8478" stroke-width="0.8"/>
<path d="M226.9 408.7 V411.6" stroke="#8fd0f0" stroke-width="0.9"/>
<rect x="225.7" y="409.9" width="2.4" height="1.1" fill="#8fd0f0"/>
<path d="M229.5 409.7 V413.7" stroke="#8fd0f0" stroke-width="0.9"/>
<rect x="228.3" y="411" width="2.4" height="1.6" fill="#8fd0f0"/>
<path d="M232 406.8 V413.6" stroke="#ee8478" stroke-width="0.9"/>
<rect x="230.9" y="407.2" width="2.2" height="5.4" fill="#3a2a30" stroke="#ee8478" stroke-width="0.8"/>
<path d="M234.6 406.3 V409" stroke="#8fd0f0" stroke-width="0.9"/>
<rect x="233.4" y="407.2" width="2.4" height="1" fill="#8fd0f0"/>
<path d="M237.1 402.7 V408.5" stroke="#ee8478" stroke-width="0.9"/>
<rect x="236" y="403.6" width="2.2" height="3.6" fill="#3a2a30" stroke="#ee8478" stroke-width="0.8"/>
<path d="M239.6 401.8 V405.1" stroke="#8fd0f0" stroke-width="0.9"/>
<rect x="238.4" y="403.6" width="2.4" height="1" fill="#8fd0f0"/>
<path d="M242.2 401.9 V407.2" stroke="#8fd0f0" stroke-width="0.9"/>
<rect x="241" y="403.6" width="2.4" height="2.3" fill="#8fd0f0"/>
<path d="M244.7 402.9 V407" stroke="#ee8478" stroke-width="0.9"/>
<rect x="243.6" y="404.3" width="2.2" height="1.7" fill="#3a2a30" stroke="#ee8478" stroke-width="0.8"/>
<path d="M247.3 403.2 V408" stroke="#8fd0f0" stroke-width="0.9"/>
<rect x="246.1" y="404.3" width="2.4" height="2" fill="#8fd0f0"/>
<path d="M249.8 404.4 V408.4" stroke="#ee8478" stroke-width="0.9"/>
<rect x="248.7" y="404.8" width="2.2" height="1.4" fill="#3a2a30" stroke="#ee8478" stroke-width="0.8"/>
<path d="M252.3 404.4 V405.9" stroke="#8fd0f0" stroke-width="0.9"/>
<rect x="251.1" y="404.8" width="2.4" height="1" fill="#8fd0f0"/>
<path d="M254.9 402.4 V406.7" stroke="#ee8478" stroke-width="0.9"/>
<rect x="253.8" y="403.1" width="2.2" height="2" fill="#3a2a30" stroke="#ee8478" stroke-width="0.8"/>
<path d="M257.4 399.1 V404.8" stroke="#ee8478" stroke-width="0.9"/>
<rect x="256.3" y="400.5" width="2.2" height="2.6" fill="#3a2a30" stroke="#ee8478" stroke-width="0.8"/>
<path d="M260 400 V404.8" stroke="#8fd0f0" stroke-width="0.9"/>
<rect x="258.8" y="400.5" width="2.4" height="3.3" fill="#8fd0f0"/>
<path d="M262.5 401.7 V404.2" stroke="#ee8478" stroke-width="0.9"/>
<rect x="261.4" y="402.1" width="2.2" height="1.7" fill="#3a2a30" stroke="#ee8478" stroke-width="0.8"/>
<path d="M265 401.3 V404.8" stroke="#ee8478" stroke-width="0.9"/>
<rect x="263.9" y="401.9" width="2.2" height="1" fill="#3a2a30" stroke="#ee8478" stroke-width="0.8"/>
<path d="M267.6 395.2 V403" stroke="#ee8478" stroke-width="0.9"/>
<rect x="266.5" y="397.5" width="2.2" height="4.4" fill="#3a2a30" stroke="#ee8478" stroke-width="0.8"/>
<path d="M270.1 396.3 V397.8" stroke="#ee8478" stroke-width="0.9"/>
<rect x="269" y="397.3" width="2.2" height="1" fill="#3a2a30" stroke="#ee8478" stroke-width="0.8"/>
<path d="M272.7 396.3 V399" stroke="#ee8478" stroke-width="0.9"/>
<rect x="271.6" y="396.7" width="2.2" height="1" fill="#3a2a30" stroke="#ee8478" stroke-width="0.8"/>
<path d="M275.2 392.3 V398.6" stroke="#ee8478" stroke-width="0.9"/>
<rect x="274.1" y="393.7" width="2.2" height="3" fill="#3a2a30" stroke="#ee8478" stroke-width="0.8"/>
<path d="M277.7 392.7 V397" stroke="#8fd0f0" stroke-width="0.9"/>
<rect x="276.5" y="393.7" width="2.4" height="2" fill="#8fd0f0"/>
<path d="M280.3 387.6 V398" stroke="#ee8478" stroke-width="0.9"/>
<rect x="279.2" y="389" width="2.2" height="6.7" fill="#3a2a30" stroke="#ee8478" stroke-width="0.8"/>
<path d="M282.8 387.5 V393.3" stroke="#8fd0f0" stroke-width="0.9"/>
<rect x="281.6" y="389" width="2.4" height="4" fill="#8fd0f0"/>
<path d="M285.4 390.4 V393.9" stroke="#ee8478" stroke-width="0.9"/>
<rect x="284.3" y="390.7" width="2.2" height="2.3" fill="#3a2a30" stroke="#ee8478" stroke-width="0.8"/>
<path d="M287.9 388.9 V391.7" stroke="#8fd0f0" stroke-width="0.9"/>
<rect x="286.7" y="390.7" width="2.4" height="1" fill="#8fd0f0"/>
<path d="M290.4 390.2 V392.3" stroke="#8fd0f0" stroke-width="0.9"/>
<rect x="289.2" y="391.3" width="2.4" height="1" fill="#8fd0f0"/>
<path d="M293 388.8 V393.1" stroke="#ee8478" stroke-width="0.9"/>
<rect x="291.9" y="389.6" width="2.2" height="2.2" fill="#3a2a30" stroke="#ee8478" stroke-width="0.8"/>
<path d="M295.5 388.7 V391.1" stroke="#8fd0f0" stroke-width="0.9"/>
<rect x="294.3" y="389.6" width="2.4" height="1" fill="#8fd0f0"/>
<path d="M298.1 389.5 V396.1" stroke="#8fd0f0" stroke-width="0.9"/>
<rect x="296.9" y="389.8" width="2.4" height="5.2" fill="#8fd0f0"/>
<path d="M300.6 393.4 V397.5" stroke="#8fd0f0" stroke-width="0.9"/>
<rect x="299.4" y="395" width="2.4" height="1" fill="#8fd0f0"/>
<path d="M303.1 394.2 V396.5" stroke="#8fd0f0" stroke-width="0.9"/>
<rect x="301.9" y="395.5" width="2.4" height="1" fill="#8fd0f0"/>
<path d="M305.7 394.6 V397.7" stroke="#8fd0f0" stroke-width="0.9"/>
<rect x="304.5" y="395.6" width="2.4" height="1" fill="#8fd0f0"/>
<path d="M308.2 394.5 V398.1" stroke="#8fd0f0" stroke-width="0.9"/>
<rect x="307" y="395.9" width="2.4" height="1.5" fill="#8fd0f0"/>
<path d="M310.8 393 V398.4" stroke="#ee8478" stroke-width="0.9"/>
<rect x="309.7" y="393.6" width="2.2" height="3.8" fill="#3a2a30" stroke="#ee8478" stroke-width="0.8"/>
<path d="M313.3 388.9 V394.3" stroke="#ee8478" stroke-width="0.9"/>
<rect x="312.2" y="390.1" width="2.2" height="3.5" fill="#3a2a30" stroke="#ee8478" stroke-width="0.8"/>
<path d="M315.8 386.4 V390.7" stroke="#ee8478" stroke-width="0.9"/>
<rect x="314.7" y="387.7" width="2.2" height="2.4" fill="#3a2a30" stroke="#ee8478" stroke-width="0.8"/>
<path d="M318.4 386.5 V394.1" stroke="#8fd0f0" stroke-width="0.9"/>
<rect x="317.2" y="387.7" width="2.4" height="5.3" fill="#8fd0f0"/>
<path d="M320.9 392.2 V402.2" stroke="#8fd0f0" stroke-width="0.9"/>
<rect x="319.7" y="393" width="2.4" height="7.2" fill="#8fd0f0"/>
<path d="M323.5 399.3 V403.2" stroke="#8fd0f0" stroke-width="0.9"/>
<rect x="322.3" y="400.1" width="2.4" height="1" fill="#8fd0f0"/>
<path d="M326 398.9 V401.3" stroke="#8fd0f0" stroke-width="0.9"/>
<rect x="324.8" y="400.4" width="2.4" height="1" fill="#8fd0f0"/>
<path d="M328.5 394.7 V402.9" stroke="#ee8478" stroke-width="0.9"/>
<rect x="327.4" y="397.1" width="2.2" height="3.7" fill="#3a2a30" stroke="#ee8478" stroke-width="0.8"/>
<path d="M331.1 393 V398.5" stroke="#ee8478" stroke-width="0.9"/>
<rect x="330" y="396.3" width="2.2" height="1" fill="#3a2a30" stroke="#ee8478" stroke-width="0.8"/>
<path d="M333.6 391.2 V396.8" stroke="#ee8478" stroke-width="0.9"/>
<rect x="332.5" y="394.2" width="2.2" height="2.2" fill="#3a2a30" stroke="#ee8478" stroke-width="0.8"/>
<path d="M336.2 388.4 V395.8" stroke="#ee8478" stroke-width="0.9"/>
<rect x="335.1" y="390" width="2.2" height="4.2" fill="#3a2a30" stroke="#ee8478" stroke-width="0.8"/>
<path d="M338.7 385.5 V391.3" stroke="#ee8478" stroke-width="0.9"/>
<rect x="337.6" y="386.1" width="2.2" height="3.9" fill="#3a2a30" stroke="#ee8478" stroke-width="0.8"/>
<path d="M341.2 385.6 V387.6" stroke="#8fd0f0" stroke-width="0.9"/>
<rect x="340" y="386.1" width="2.4" height="1" fill="#8fd0f0"/>
<path d="M343.8 383.5 V386.6" stroke="#ee8478" stroke-width="0.9"/>
<rect x="342.7" y="384.7" width="2.2" height="1.6" fill="#3a2a30" stroke="#ee8478" stroke-width="0.8"/>
<path d="M346.3 380.6 V388" stroke="#ee8478" stroke-width="0.9"/>
<rect x="345.2" y="381.8" width="2.2" height="2.9" fill="#3a2a30" stroke="#ee8478" stroke-width="0.8"/>
<path d="M348.9 380.8 V387.1" stroke="#8fd0f0" stroke-width="0.9"/>
<rect x="347.7" y="381.8" width="2.4" height="2" fill="#8fd0f0"/>
<path d="M351.4 380.6 V386" stroke="#ee8478" stroke-width="0.9"/>
<rect x="350.3" y="381.5" width="2.2" height="2.3" fill="#3a2a30" stroke="#ee8478" stroke-width="0.8"/>
<path d="M353.9 379.4 V382.3" stroke="#ee8478" stroke-width="0.9"/>
<rect x="352.8" y="379.8" width="2.2" height="1.7" fill="#3a2a30" stroke="#ee8478" stroke-width="0.8"/>
<path d="M356.5 372.3 V380.5" stroke="#ee8478" stroke-width="0.9"/>
<rect x="355.4" y="373.9" width="2.2" height="5.9" fill="#3a2a30" stroke="#ee8478" stroke-width="0.8"/>
<path d="M359 370.8 V376.8" stroke="#ee8478" stroke-width="0.9"/>
<rect x="357.9" y="373" width="2.2" height="1" fill="#3a2a30" stroke="#ee8478" stroke-width="0.8"/>
<path d="M361.6 364.4 V373.8" stroke="#ee8478" stroke-width="0.9"/>
<rect x="360.5" y="365.8" width="2.2" height="7.2" fill="#3a2a30" stroke="#ee8478" stroke-width="0.8"/>
<path d="M364.1 364.2 V367.6" stroke="#ee8478" stroke-width="0.9"/>
<rect x="363" y="365.1" width="2.2" height="1" fill="#3a2a30" stroke="#ee8478" stroke-width="0.8"/>
<path d="M366.6 363.5 V369.9" stroke="#8fd0f0" stroke-width="0.9"/>
<rect x="365.4" y="365.1" width="2.4" height="2.9" fill="#8fd0f0"/>
<path d="M369.2 357.9 V369.3" stroke="#ee8478" stroke-width="0.9"/>
<rect x="368.1" y="359.9" width="2.2" height="8.2" fill="#3a2a30" stroke="#ee8478" stroke-width="0.8"/>
<path d="M371.7 358.9 V365.8" stroke="#8fd0f0" stroke-width="0.9"/>
<rect x="370.5" y="359.9" width="2.4" height="4.9" fill="#8fd0f0"/>
<path d="M374.3 361.2 V365.8" stroke="#ee8478" stroke-width="0.9"/>
<rect x="373.2" y="363.6" width="2.2" height="1.2" fill="#3a2a30" stroke="#ee8478" stroke-width="0.8"/>
<path d="M376.8 362.7 V365.4" stroke="#8fd0f0" stroke-width="0.9"/>
<rect x="375.6" y="363.6" width="2.4" height="1" fill="#8fd0f0"/>
<path d="M379.3 363.4 V367.4" stroke="#8fd0f0" stroke-width="0.9"/>
<rect x="378.1" y="364.3" width="2.4" height="2.4" fill="#8fd0f0"/>
<path d="M381.9 366.1 V372.1" stroke="#8fd0f0" stroke-width="0.9"/>
<rect x="380.7" y="366.6" width="2.4" height="4.7" fill="#8fd0f0"/>
<path d="M384.4 371 V375.9" stroke="#8fd0f0" stroke-width="0.9"/>
<rect x="383.2" y="371.3" width="2.4" height="3.3" fill="#8fd0f0"/>
<path d="M387 371.1 V375.1" stroke="#ee8478" stroke-width="0.9"/>
<rect x="385.9" y="371.4" width="2.2" height="3.3" fill="#3a2a30" stroke="#ee8478" stroke-width="0.8"/>
<path d="M389.5 371.1 V372.3" stroke="#8fd0f0" stroke-width="0.9"/>
<rect x="388.3" y="371.4" width="2.4" height="1" fill="#8fd0f0"/>
<path d="M392 369.3 V372.5" stroke="#ee8478" stroke-width="0.9"/>
<rect x="390.9" y="370.8" width="2.2" height="1.1" fill="#3a2a30" stroke="#ee8478" stroke-width="0.8"/>
<path d="M394.6 370.1 V373.6" stroke="#8fd0f0" stroke-width="0.9"/>
<rect x="393.4" y="370.8" width="2.4" height="2.4" fill="#8fd0f0"/>
<path d="M397.1 371.7 V375.2" stroke="#ee8478" stroke-width="0.9"/>
<rect x="396" y="372.9" width="2.2" height="1" fill="#3a2a30" stroke="#ee8478" stroke-width="0.8"/>
<path d="M399.7 371.7 V373.9" stroke="#8fd0f0" stroke-width="0.9"/>
<rect x="398.5" y="372.9" width="2.4" height="1" fill="#8fd0f0"/>
<path d="M402.2 368.9 V374.2" stroke="#ee8478" stroke-width="0.9"/>
<rect x="401.1" y="371.7" width="2.2" height="1.2" fill="#3a2a30" stroke="#ee8478" stroke-width="0.8"/>
<path d="M404.7 371 V377.9" stroke="#8fd0f0" stroke-width="0.9"/>
<rect x="403.5" y="371.7" width="2.4" height="4.6" fill="#8fd0f0"/>
<path d="M407.3 372.4 V377.1" stroke="#ee8478" stroke-width="0.9"/>
<rect x="406.2" y="373.2" width="2.2" height="3.2" fill="#3a2a30" stroke="#ee8478" stroke-width="0.8"/>
<path d="M409.8 371.5 V376" stroke="#8fd0f0" stroke-width="0.9"/>
<rect x="408.6" y="373.2" width="2.4" height="1.9" fill="#8fd0f0"/>
<path d="M412.4 374.3 V377" stroke="#8fd0f0" stroke-width="0.9"/>
<rect x="411.2" y="375.1" width="2.4" height="1" fill="#8fd0f0"/>
<path d="M414.9 374 V377.6" stroke="#8fd0f0" stroke-width="0.9"/>
<rect x="413.7" y="375.3" width="2.4" height="1.1" fill="#8fd0f0"/>
<path d="M417.4 372.2 V376.9" stroke="#ee8478" stroke-width="0.9"/>
<rect x="416.3" y="373.3" width="2.2" height="3" fill="#3a2a30" stroke="#ee8478" stroke-width="0.8"/>
<path d="M420 372.3 V375.5" stroke="#8fd0f0" stroke-width="0.9"/>
<rect x="418.8" y="373.3" width="2.4" height="1" fill="#8fd0f0"/>
<path d="M422.5 367.2 V375.9" stroke="#ee8478" stroke-width="0.9"/>
<rect x="421.4" y="370.3" width="2.2" height="3.9" fill="#3a2a30" stroke="#ee8478" stroke-width="0.8"/>
<path d="M425.1 368.4 V373.5" stroke="#ee8478" stroke-width="0.9"/>
<rect x="424" y="368.8" width="2.2" height="1.5" fill="#3a2a30" stroke="#ee8478" stroke-width="0.8"/>
<path d="M427.6 366 V370.1" stroke="#ee8478" stroke-width="0.9"/>
<rect x="426.5" y="367.2" width="2.2" height="1.6" fill="#3a2a30" stroke="#ee8478" stroke-width="0.8"/>
<path d="M430.1 365.9 V368.4" stroke="#8fd0f0" stroke-width="0.9"/>
<rect x="428.9" y="367.2" width="2.4" height="1" fill="#8fd0f0"/>
<path d="M432.7 366.7 V369.6" stroke="#8fd0f0" stroke-width="0.9"/>
<rect x="431.5" y="368" width="2.4" height="1" fill="#8fd0f0"/>
<path d="M435.2 367.2 V369.4" stroke="#ee8478" stroke-width="0.9"/>
<rect x="434.1" y="368.2" width="2.2" height="1" fill="#3a2a30" stroke="#ee8478" stroke-width="0.8"/>
<path d="M437.8 367.9 V369.1" stroke="#8fd0f0" stroke-width="0.9"/>
<rect x="436.6" y="368.2" width="2.4" height="1" fill="#8fd0f0"/>
<path d="M440.3 367.4 V370.3" stroke="#8fd0f0" stroke-width="0.9"/>
<rect x="439.1" y="368.6" width="2.4" height="1" fill="#8fd0f0"/>
<path d="M442.8 367.1 V370.1" stroke="#ee8478" stroke-width="0.9"/>
<rect x="441.7" y="368.6" width="2.2" height="1" fill="#3a2a30" stroke="#ee8478" stroke-width="0.8"/>
<path d="M445.4 364.9 V369.4" stroke="#ee8478" stroke-width="0.9"/>
<rect x="444.3" y="365.8" width="2.2" height="2.8" fill="#3a2a30" stroke="#ee8478" stroke-width="0.8"/>
<path d="M447.9 365.4 V369.9" stroke="#8fd0f0" stroke-width="0.9"/>
<rect x="446.7" y="365.8" width="2.4" height="3.6" fill="#8fd0f0"/>
<path d="M450.5 364.8 V370.1" stroke="#ee8478" stroke-width="0.9"/>
<rect x="449.4" y="366.6" width="2.2" height="2.8" fill="#3a2a30" stroke="#ee8478" stroke-width="0.8"/>
<path d="M453 365.6 V370.6" stroke="#8fd0f0" stroke-width="0.9"/>
<rect x="451.8" y="366.6" width="2.4" height="3.6" fill="#8fd0f0"/>
<path d="M455.5 364.4 V371.4" stroke="#ee8478" stroke-width="0.9"/>
<rect x="454.4" y="365.4" width="2.2" height="4.7" fill="#3a2a30" stroke="#ee8478" stroke-width="0.8"/>
<path d="M458.1 362.8 V366.4" stroke="#ee8478" stroke-width="0.9"/>
<rect x="457" y="363.2" width="2.2" height="2.2" fill="#3a2a30" stroke="#ee8478" stroke-width="0.8"/>
<path d="M460.6 356.3 V365.3" stroke="#ee8478" stroke-width="0.9"/>
<rect x="459.5" y="359.7" width="2.2" height="3.5" fill="#3a2a30" stroke="#ee8478" stroke-width="0.8"/>
<path d="M463.2 348.5 V360.2" stroke="#ee8478" stroke-width="0.9"/>
<rect x="462.1" y="354.1" width="2.2" height="5.7" fill="#3a2a30" stroke="#ee8478" stroke-width="0.8"/>
<path d="M465.7 299.1 V357" stroke="#ee8478" stroke-width="0.9"/>
<rect x="464.6" y="301.7" width="2.2" height="52.3" fill="#3a2a30" stroke="#ee8478" stroke-width="0.8"/>
<path d="M468.2 282.9 V306.9" stroke="#ee8478" stroke-width="0.9"/>
<rect x="467.1" y="287.5" width="2.2" height="14.3" fill="#3a2a30" stroke="#ee8478" stroke-width="0.8"/>
<path d="M470.8 264.8 V291.1" stroke="#ee8478" stroke-width="0.9"/>
<rect x="469.7" y="268.4" width="2.2" height="19.1" fill="#3a2a30" stroke="#ee8478" stroke-width="0.8"/>
<path d="M473.3 267 V269.3" stroke="#ee8478" stroke-width="0.9"/>
<rect x="472.2" y="267.3" width="2.2" height="1" fill="#3a2a30" stroke="#ee8478" stroke-width="0.8"/>
<path d="M475.9 265.6 V268.6" stroke="#8fd0f0" stroke-width="0.9"/>
<rect x="474.7" y="267.3" width="2.4" height="1" fill="#8fd0f0"/>
<path d="M478.4 265 V268.7" stroke="#ee8478" stroke-width="0.9"/>
<rect x="477.3" y="265.8" width="2.2" height="2.5" fill="#3a2a30" stroke="#ee8478" stroke-width="0.8"/>
<path d="M480.9 250.1 V267" stroke="#ee8478" stroke-width="0.9"/>
<rect x="479.8" y="252.3" width="2.2" height="13.5" fill="#3a2a30" stroke="#ee8478" stroke-width="0.8"/>
<path d="M483.5 238.2 V253" stroke="#ee8478" stroke-width="0.9"/>
<rect x="482.4" y="240.2" width="2.2" height="12.1" fill="#3a2a30" stroke="#ee8478" stroke-width="0.8"/>
<path d="M486 229 V240.6" stroke="#ee8478" stroke-width="0.9"/>
<rect x="484.9" y="231.1" width="2.2" height="9.2" fill="#3a2a30" stroke="#ee8478" stroke-width="0.8"/>
<path d="M488.6 230.6 V238.4" stroke="#8fd0f0" stroke-width="0.9"/>
<rect x="487.4" y="231.1" width="2.4" height="6.9" fill="#8fd0f0"/>
<path d="M491.1 237.5 V242" stroke="#8fd0f0" stroke-width="0.9"/>
<rect x="489.9" y="238" width="2.4" height="3.5" fill="#8fd0f0"/>
<path d="M493.6 239.7 V241.8" stroke="#ee8478" stroke-width="0.9"/>
<rect x="492.5" y="240.8" width="2.2" height="1" fill="#3a2a30" stroke="#ee8478" stroke-width="0.8"/>
<path d="M496.2 229.4 V241.2" stroke="#ee8478" stroke-width="0.9"/>
<rect x="495.1" y="229.9" width="2.2" height="10.9" fill="#3a2a30" stroke="#ee8478" stroke-width="0.8"/>
<path d="M498.7 229.1 V233.1" stroke="#8fd0f0" stroke-width="0.9"/>
<rect x="497.5" y="229.9" width="2.4" height="1.8" fill="#8fd0f0"/>
<path d="M501.3 224.3 V232.9" stroke="#ee8478" stroke-width="0.9"/>
<rect x="500.2" y="225.1" width="2.2" height="6.6" fill="#3a2a30" stroke="#ee8478" stroke-width="0.8"/>
<path d="M503.8 224.3 V225.9" stroke="#ee8478" stroke-width="0.9"/>
<rect x="502.7" y="224.7" width="2.2" height="1" fill="#3a2a30" stroke="#ee8478" stroke-width="0.8"/>
<path d="M506.3 223.8 V226.3" stroke="#8fd0f0" stroke-width="0.9"/>
<rect x="505.1" y="224.7" width="2.4" height="1" fill="#8fd0f0"/>
<path d="M508.9 224.9 V229.4" stroke="#8fd0f0" stroke-width="0.9"/>
<rect x="507.7" y="225.6" width="2.4" height="2.3" fill="#8fd0f0"/>
<path d="M511.4 220.2 V230.9" stroke="#ee8478" stroke-width="0.9"/>
<rect x="510.3" y="221.8" width="2.2" height="6" fill="#3a2a30" stroke="#ee8478" stroke-width="0.8"/>
<path d="M514 218.3 V222.8" stroke="#ee8478" stroke-width="0.9"/>
<rect x="512.9" y="218.9" width="2.2" height="2.9" fill="#3a2a30" stroke="#ee8478" stroke-width="0.8"/>
<path d="M516.5 218.2 V225.1" stroke="#8fd0f0" stroke-width="0.9"/>
<rect x="515.3" y="218.9" width="2.4" height="4.4" fill="#8fd0f0"/>
<path d="M519 216.7 V224.2" stroke="#ee8478" stroke-width="0.9"/>
<rect x="517.9" y="218.2" width="2.2" height="5.1" fill="#3a2a30" stroke="#ee8478" stroke-width="0.8"/>
<path d="M521.6 212.8 V219.7" stroke="#ee8478" stroke-width="0.9"/>
<rect x="520.5" y="213.7" width="2.2" height="4.5" fill="#3a2a30" stroke="#ee8478" stroke-width="0.8"/>
<path d="M524.1 212.4 V216.2" stroke="#8fd0f0" stroke-width="0.9"/>
<rect x="522.9" y="213.7" width="2.4" height="2" fill="#8fd0f0"/>
<path d="M526.7 215.2 V218.5" stroke="#8fd0f0" stroke-width="0.9"/>
<rect x="525.5" y="215.7" width="2.4" height="2.5" fill="#8fd0f0"/>
<path d="M529.2 217.9 V220.9" stroke="#8fd0f0" stroke-width="0.9"/>
<rect x="528" y="218.2" width="2.4" height="1.4" fill="#8fd0f0"/>
<path d="M531.7 218.5 V222.5" stroke="#8fd0f0" stroke-width="0.9"/>
<rect x="530.5" y="219.6" width="2.4" height="1.6" fill="#8fd0f0"/>
<path d="M534.3 218.4 V225" stroke="#8fd0f0" stroke-width="0.9"/>
<rect x="533.1" y="221.2" width="2.4" height="1.3" fill="#8fd0f0"/>
<path d="M536.8 221.9 V226.7" stroke="#8fd0f0" stroke-width="0.9"/>
<rect x="535.6" y="222.4" width="2.4" height="3.6" fill="#8fd0f0"/>
<path d="M539.4 222.5 V227.3" stroke="#ee8478" stroke-width="0.9"/>
<rect x="538.3" y="223.8" width="2.2" height="2.2" fill="#3a2a30" stroke="#ee8478" stroke-width="0.8"/>
<path d="M541.9 210.5 V225.6" stroke="#ee8478" stroke-width="0.9"/>
<rect x="540.8" y="212.2" width="2.2" height="11.6" fill="#3a2a30" stroke="#ee8478" stroke-width="0.8"/>
<path d="M544.4 211.8 V215" stroke="#8fd0f0" stroke-width="0.9"/>
<rect x="543.2" y="212.2" width="2.4" height="1" fill="#8fd0f0"/>
<path d="M547 194.6 V213.9" stroke="#ee8478" stroke-width="0.9"/>
<rect x="545.9" y="195.1" width="2.2" height="17.9" fill="#3a2a30" stroke="#ee8478" stroke-width="0.8"/>
<path d="M549.5 191.6 V196.3" stroke="#ee8478" stroke-width="0.9"/>
<rect x="548.4" y="194" width="2.2" height="1" fill="#3a2a30" stroke="#ee8478" stroke-width="0.8"/>
<path d="M552.1 193.3 V195.1" stroke="#ee8478" stroke-width="0.9"/>
<rect x="551" y="193.6" width="2.2" height="1" fill="#3a2a30" stroke="#ee8478" stroke-width="0.8"/>
<path d="M554.6 190 V195.4" stroke="#ee8478" stroke-width="0.9"/>
<rect x="553.5" y="190.3" width="2.2" height="3.3" fill="#3a2a30" stroke="#ee8478" stroke-width="0.8"/>
<path d="M557.1 188.7 V194.5" stroke="#8fd0f0" stroke-width="0.9"/>
<rect x="555.9" y="190.3" width="2.4" height="2.6" fill="#8fd0f0"/>
<path d="M559.7 182.1 V194.8" stroke="#ee8478" stroke-width="0.9"/>
<rect x="558.6" y="184.5" width="2.2" height="8.5" fill="#3a2a30" stroke="#ee8478" stroke-width="0.8"/>
<path d="M562.2 182.4 V185.2" stroke="#ee8478" stroke-width="0.9"/>
<rect x="561.1" y="182.8" width="2.2" height="1.6" fill="#3a2a30" stroke="#ee8478" stroke-width="0.8"/>
<path d="M564.8 181.2 V183.1" stroke="#ee8478" stroke-width="0.9"/>
<rect x="563.7" y="182.8" width="2.2" height="1" fill="#3a2a30" stroke="#ee8478" stroke-width="0.8"/>
<path d="M567.3 180.5 V183.3" stroke="#ee8478" stroke-width="0.9"/>
<rect x="566.2" y="180.9" width="2.2" height="1.9" fill="#3a2a30" stroke="#ee8478" stroke-width="0.8"/>
<path d="M569.8 180.4 V184.9" stroke="#8fd0f0" stroke-width="0.9"/>
<rect x="568.6" y="180.9" width="2.4" height="3" fill="#8fd0f0"/>
<path d="M572.4 183.1 V185.6" stroke="#8fd0f0" stroke-width="0.9"/>
<rect x="571.2" y="183.8" width="2.4" height="1" fill="#8fd0f0"/>
<path d="M574.9 183.4 V186.1" stroke="#8fd0f0" stroke-width="0.9"/>
<rect x="573.7" y="183.9" width="2.4" height="1.5" fill="#8fd0f0"/>
<path d="M577.5 182.8 V186" stroke="#ee8478" stroke-width="0.9"/>
<rect x="576.4" y="184.1" width="2.2" height="1.2" fill="#3a2a30" stroke="#ee8478" stroke-width="0.8"/>
<path d="M580 183.3 V187.9" stroke="#8fd0f0" stroke-width="0.9"/>
<rect x="578.8" y="184.1" width="2.4" height="3" fill="#8fd0f0"/>
<path d="M582.5 186.1 V190.1" stroke="#8fd0f0" stroke-width="0.9"/>
<rect x="581.3" y="187.1" width="2.4" height="2.8" fill="#8fd0f0"/>
<path d="M585.1 187.7 V191.2" stroke="#8fd0f0" stroke-width="0.9"/>
<rect x="583.9" y="189.8" width="2.4" height="1" fill="#8fd0f0"/>
<path d="M587.6 184.6 V191.2" stroke="#ee8478" stroke-width="0.9"/>
<rect x="586.5" y="185.1" width="2.2" height="5.2" fill="#3a2a30" stroke="#ee8478" stroke-width="0.8"/>
<path d="M590.2 179.1 V185.5" stroke="#ee8478" stroke-width="0.9"/>
<rect x="589.1" y="180" width="2.2" height="5.2" fill="#3a2a30" stroke="#ee8478" stroke-width="0.8"/>
<path d="M592.7 175 V181.6" stroke="#ee8478" stroke-width="0.9"/>
<rect x="591.6" y="178.3" width="2.2" height="1.7" fill="#3a2a30" stroke="#ee8478" stroke-width="0.8"/>
<path d="M595.2 171.6 V180.1" stroke="#ee8478" stroke-width="0.9"/>
<rect x="594.1" y="173.4" width="2.2" height="4.9" fill="#3a2a30" stroke="#ee8478" stroke-width="0.8"/>
<path d="M597.8 171.4 V174.5" stroke="#ee8478" stroke-width="0.9"/>
<rect x="596.7" y="172.5" width="2.2" height="1" fill="#3a2a30" stroke="#ee8478" stroke-width="0.8"/>
<path d="M600.3 169.7 V173.4" stroke="#ee8478" stroke-width="0.9"/>
<rect x="599.2" y="170.4" width="2.2" height="2.1" fill="#3a2a30" stroke="#ee8478" stroke-width="0.8"/>
<path d="M602.9 165.9 V170.7" stroke="#ee8478" stroke-width="0.9"/>
<rect x="601.8" y="167.7" width="2.2" height="2.8" fill="#3a2a30" stroke="#ee8478" stroke-width="0.8"/>
<path d="M605.4 166.9 V169.2" stroke="#8fd0f0" stroke-width="0.9"/>
<rect x="604.2" y="167.7" width="2.4" height="1.2" fill="#8fd0f0"/>
<path d="M607.9 167.7 V170.5" stroke="#8fd0f0" stroke-width="0.9"/>
<rect x="606.7" y="168.8" width="2.4" height="1" fill="#8fd0f0"/>
<path d="M610.5 168.8 V172.2" stroke="#8fd0f0" stroke-width="0.9"/>
<rect x="609.3" y="169.6" width="2.4" height="2.2" fill="#8fd0f0"/>
<path d="M613 167.7 V172.4" stroke="#ee8478" stroke-width="0.9"/>
<rect x="611.9" y="169.5" width="2.2" height="2.3" fill="#3a2a30" stroke="#ee8478" stroke-width="0.8"/>
<path d="M615.6 168.6 V172.2" stroke="#8fd0f0" stroke-width="0.9"/>
<rect x="614.4" y="169.5" width="2.4" height="2.4" fill="#8fd0f0"/>
<path d="M618.1 166.2 V173.8" stroke="#ee8478" stroke-width="0.9"/>
<rect x="617" y="168.4" width="2.2" height="3.5" fill="#3a2a30" stroke="#ee8478" stroke-width="0.8"/>
<path d="M620.6 165.3 V169.6" stroke="#ee8478" stroke-width="0.9"/>
<rect x="619.5" y="167.7" width="2.2" height="1" fill="#3a2a30" stroke="#ee8478" stroke-width="0.8"/>
<path d="M623.2 163.2 V168.4" stroke="#ee8478" stroke-width="0.9"/>
<rect x="622.1" y="164" width="2.2" height="3.8" fill="#3a2a30" stroke="#ee8478" stroke-width="0.8"/>
<path d="M625.7 162.4 V165.7" stroke="#ee8478" stroke-width="0.9"/>
<rect x="624.6" y="162.9" width="2.2" height="1.1" fill="#3a2a30" stroke="#ee8478" stroke-width="0.8"/>
<path d="M628.3 161.5 V168.2" stroke="#8fd0f0" stroke-width="0.9"/>
<rect x="627.1" y="162.9" width="2.4" height="3.5" fill="#8fd0f0"/>
<path d="M630.8 165.7 V168.9" stroke="#8fd0f0" stroke-width="0.9"/>
<rect x="629.6" y="166.4" width="2.4" height="1" fill="#8fd0f0"/>
<path d="M633.3 166.1 V173.1" stroke="#8fd0f0" stroke-width="0.9"/>
<rect x="632.1" y="166.7" width="2.4" height="3.8" fill="#8fd0f0"/>
<path d="M635.9 168.7 V171.3" stroke="#ee8478" stroke-width="0.9"/>
<rect x="634.8" y="169.6" width="2.2" height="1" fill="#3a2a30" stroke="#ee8478" stroke-width="0.8"/>
<path d="M638.4 168.4 V173.1" stroke="#8fd0f0" stroke-width="0.9"/>
<rect x="637.2" y="169.6" width="2.4" height="2" fill="#8fd0f0"/>
<path d="M641 171 V173.2" stroke="#ee8478" stroke-width="0.9"/>
<rect x="639.9" y="171.5" width="2.2" height="1" fill="#3a2a30" stroke="#ee8478" stroke-width="0.8"/>
<path d="M643.5 170.2 V172.2" stroke="#ee8478" stroke-width="0.9"/>
<rect x="642.4" y="171" width="2.2" height="1" fill="#3a2a30" stroke="#ee8478" stroke-width="0.8"/>
<path d="M646 169.3 V171.7" stroke="#ee8478" stroke-width="0.9"/>
<rect x="644.9" y="169.7" width="2.2" height="1.3" fill="#3a2a30" stroke="#ee8478" stroke-width="0.8"/>
<path d="M648.6 166.2 V170.4" stroke="#ee8478" stroke-width="0.9"/>
<rect x="647.5" y="168.3" width="2.2" height="1.4" fill="#3a2a30" stroke="#ee8478" stroke-width="0.8"/>
<path d="M651.1 164.9 V168.7" stroke="#ee8478" stroke-width="0.9"/>
<rect x="650" y="166.1" width="2.2" height="2.2" fill="#3a2a30" stroke="#ee8478" stroke-width="0.8"/>
<path d="M653.7 162.7 V166.8" stroke="#ee8478" stroke-width="0.9"/>
<rect x="652.6" y="164.7" width="2.2" height="1.4" fill="#3a2a30" stroke="#ee8478" stroke-width="0.8"/>
<path d="M656.2 161.6 V166.7" stroke="#ee8478" stroke-width="0.9"/>
<rect x="655.1" y="162.2" width="2.2" height="2.5" fill="#3a2a30" stroke="#ee8478" stroke-width="0.8"/>
<path d="M658.7 158.4 V162.9" stroke="#ee8478" stroke-width="0.9"/>
<rect x="657.6" y="159.5" width="2.2" height="2.7" fill="#3a2a30" stroke="#ee8478" stroke-width="0.8"/>
<path d="M661.3 151.3 V159.9" stroke="#ee8478" stroke-width="0.9"/>
<rect x="660.2" y="154.2" width="2.2" height="5.3" fill="#3a2a30" stroke="#ee8478" stroke-width="0.8"/>
<path d="M663.8 153.2 V156.9" stroke="#8fd0f0" stroke-width="0.9"/>
<rect x="662.6" y="154.2" width="2.4" height="1.3" fill="#8fd0f0"/>
<path d="M666.4 152.3 V156.4" stroke="#ee8478" stroke-width="0.9"/>
<rect x="665.3" y="153.3" width="2.2" height="2.3" fill="#3a2a30" stroke="#ee8478" stroke-width="0.8"/>
<path d="M668.9 148.8 V153.6" stroke="#ee8478" stroke-width="0.9"/>
<rect x="667.8" y="149.8" width="2.2" height="3.5" fill="#3a2a30" stroke="#ee8478" stroke-width="0.8"/>
<path d="M671.4 149.3 V153.8" stroke="#8fd0f0" stroke-width="0.9"/>
<rect x="670.2" y="149.8" width="2.4" height="3.4" fill="#8fd0f0"/>
<path d="M674 149.3 V155.1" stroke="#ee8478" stroke-width="0.9"/>
<rect x="672.9" y="149.9" width="2.2" height="3.3" fill="#3a2a30" stroke="#ee8478" stroke-width="0.8"/>
<path d="M676.5 146.5 V150.8" stroke="#ee8478" stroke-width="0.9"/>
<rect x="675.4" y="149.1" width="2.2" height="1" fill="#3a2a30" stroke="#ee8478" stroke-width="0.8"/>
<path d="M679.1 148.7 V150.9" stroke="#8fd0f0" stroke-width="0.9"/>
<rect x="677.9" y="149.1" width="2.4" height="1" fill="#8fd0f0"/>
<path d="M681.6 144.7 V150.5" stroke="#ee8478" stroke-width="0.9"/>
<rect x="680.5" y="147" width="2.2" height="2.6" fill="#3a2a30" stroke="#ee8478" stroke-width="0.8"/>
<path d="M684.1 146.1 V152.2" stroke="#8fd0f0" stroke-width="0.9"/>
<rect x="682.9" y="147" width="2.4" height="2.6" fill="#8fd0f0"/>
<path d="M686.7 149 V152.3" stroke="#8fd0f0" stroke-width="0.9"/>
<rect x="685.5" y="149.6" width="2.4" height="1.5" fill="#8fd0f0"/>
<path d="M689.2 148.7 V155.8" stroke="#8fd0f0" stroke-width="0.9"/>
<rect x="688" y="151" width="2.4" height="2.9" fill="#8fd0f0"/>
<path d="M691.8 149.6 V155.3" stroke="#8fd0f0" stroke-width="0.9"/>
<rect x="690.6" y="153.9" width="2.4" height="1" fill="#8fd0f0"/>
<path d="M694.3 152.7 V158.1" stroke="#8fd0f0" stroke-width="0.9"/>
<rect x="693.1" y="154.1" width="2.4" height="1.3" fill="#8fd0f0"/>
<path d="M696.8 154.8 V158.3" stroke="#8fd0f0" stroke-width="0.9"/>
<rect x="695.6" y="155.4" width="2.4" height="2.1" fill="#8fd0f0"/>
<path d="M699.4 156.5 V158.5" stroke="#8fd0f0" stroke-width="0.9"/>
<rect x="698.2" y="157.5" width="2.4" height="1" fill="#8fd0f0"/>
<path d="M701.9 157.2 V160.8" stroke="#8fd0f0" stroke-width="0.9"/>
<rect x="700.7" y="157.5" width="2.4" height="2.8" fill="#8fd0f0"/>
<path d="M704.5 159.6 V162.4" stroke="#8fd0f0" stroke-width="0.9"/>
<rect x="703.3" y="160.3" width="2.4" height="1.6" fill="#8fd0f0"/>
<path d="M707 161.3 V163.3" stroke="#ee8478" stroke-width="0.9"/>
<rect x="705.9" y="161.7" width="2.2" height="1" fill="#3a2a30" stroke="#ee8478" stroke-width="0.8"/>
<path d="M709.5 161 V163.9" stroke="#8fd0f0" stroke-width="0.9"/>
<rect x="708.3" y="161.7" width="2.4" height="1" fill="#8fd0f0"/>
<path d="M712.1 161.3 V164.5" stroke="#ee8478" stroke-width="0.9"/>
<rect x="711" y="161.9" width="2.2" height="1" fill="#3a2a30" stroke="#ee8478" stroke-width="0.8"/>
<path d="M714.6 161.3 V163.5" stroke="#8fd0f0" stroke-width="0.9"/>
<rect x="713.4" y="161.9" width="2.4" height="1" fill="#8fd0f0"/>
<path d="M717.2 159.5 V164" stroke="#ee8478" stroke-width="0.9"/>
<rect x="716.1" y="159.9" width="2.2" height="2.5" fill="#3a2a30" stroke="#ee8478" stroke-width="0.8"/>
<path d="M719.7 159.6 V162.4" stroke="#8fd0f0" stroke-width="0.9"/>
<rect x="718.5" y="159.9" width="2.4" height="2" fill="#8fd0f0"/>
<path d="M722.2 161.5 V163.2" stroke="#8fd0f0" stroke-width="0.9"/>
<rect x="721" y="161.9" width="2.4" height="1" fill="#8fd0f0"/>
<path d="M724.8 161.9 V164.7" stroke="#8fd0f0" stroke-width="0.9"/>
<rect x="723.6" y="162.2" width="2.4" height="1" fill="#8fd0f0"/>
<path d="M727.3 161.3 V164.1" stroke="#8fd0f0" stroke-width="0.9"/>
<rect x="726.1" y="162.2" width="2.4" height="1" fill="#8fd0f0"/>
<path d="M729.9 162.1 V164.5" stroke="#8fd0f0" stroke-width="0.9"/>
<rect x="728.7" y="162.5" width="2.4" height="1" fill="#8fd0f0"/>
<path d="M732.4 161.9 V164.8" stroke="#8fd0f0" stroke-width="0.9"/>
<rect x="731.2" y="162.8" width="2.4" height="1" fill="#8fd0f0"/>
<path d="M734.9 161.7 V164.7" stroke="#8fd0f0" stroke-width="0.9"/>
<rect x="733.7" y="163" width="2.4" height="1" fill="#8fd0f0"/>
<path d="M737.5 163.4 V164.6" stroke="#8fd0f0" stroke-width="0.9"/>
<rect x="736.3" y="163.8" width="2.4" height="1" fill="#8fd0f0"/>
<path d="M740 161.8 V166.7" stroke="#8fd0f0" stroke-width="0.9"/>
<rect x="738.8" y="164.2" width="2.4" height="1.6" fill="#8fd0f0"/>
<path d="M742.6 162.5 V167.2" stroke="#ee8478" stroke-width="0.9"/>
<rect x="741.5" y="163.4" width="2.2" height="2.4" fill="#3a2a30" stroke="#ee8478" stroke-width="0.8"/>
<path d="M745.1 161.2 V164" stroke="#ee8478" stroke-width="0.9"/>
<rect x="744" y="162.2" width="2.2" height="1.1" fill="#3a2a30" stroke="#ee8478" stroke-width="0.8"/>
<path d="M747.6 155.5 V163.5" stroke="#ee8478" stroke-width="0.9"/>
<rect x="746.5" y="157.9" width="2.2" height="4.4" fill="#3a2a30" stroke="#ee8478" stroke-width="0.8"/>
<path d="M750.2 151.8 V158.8" stroke="#ee8478" stroke-width="0.9"/>
<rect x="749.1" y="152.9" width="2.2" height="4.9" fill="#3a2a30" stroke="#ee8478" stroke-width="0.8"/>
<path d="M752.7 151.8 V155.2" stroke="#8fd0f0" stroke-width="0.9"/>
<rect x="751.5" y="152.9" width="2.4" height="1.9" fill="#8fd0f0"/>
<path d="M755.3 153.9 V156.5" stroke="#ee8478" stroke-width="0.9"/>
<rect x="754.2" y="154.7" width="2.2" height="1" fill="#3a2a30" stroke="#ee8478" stroke-width="0.8"/>
<path d="M757.8 154.1 V156.7" stroke="#8fd0f0" stroke-width="0.9"/>
<rect x="756.6" y="154.7" width="2.4" height="1" fill="#8fd0f0"/>
<path d="M760.3 153.9 V158.1" stroke="#8fd0f0" stroke-width="0.9"/>
<rect x="759.1" y="155.3" width="2.4" height="1" fill="#8fd0f0"/>
<path d="M762.9 153.7 V158.8" stroke="#8fd0f0" stroke-width="0.9"/>
<rect x="761.7" y="155.7" width="2.4" height="2.8" fill="#8fd0f0"/>
<path d="M765.4 155 V159.4" stroke="#ee8478" stroke-width="0.9"/>
<rect x="764.3" y="156.2" width="2.2" height="2.3" fill="#3a2a30" stroke="#ee8478" stroke-width="0.8"/>
<path d="M768 154.6 V156.6" stroke="#ee8478" stroke-width="0.9"/>
<rect x="766.9" y="155.9" width="2.2" height="1" fill="#3a2a30" stroke="#ee8478" stroke-width="0.8"/>
<path d="M770.5 154.5 V160" stroke="#8fd0f0" stroke-width="0.9"/>
<rect x="769.3" y="155.9" width="2.4" height="2.8" fill="#8fd0f0"/>
<path d="M773 155.5 V159.3" stroke="#ee8478" stroke-width="0.9"/>
<rect x="771.9" y="157.7" width="2.2" height="1" fill="#3a2a30" stroke="#ee8478" stroke-width="0.8"/>
<path d="M775.6 156.9 V159.3" stroke="#8fd0f0" stroke-width="0.9"/>
<rect x="774.4" y="157.7" width="2.4" height="1" fill="#8fd0f0"/>
<path d="M778.1 157.5 V159.4" stroke="#8fd0f0" stroke-width="0.9"/>
<rect x="776.9" y="158.2" width="2.4" height="1" fill="#8fd0f0"/>
<path d="M780.7 158.7 V162.3" stroke="#8fd0f0" stroke-width="0.9"/>
<rect x="779.5" y="159" width="2.4" height="2.1" fill="#8fd0f0"/>
<path d="M783.2 158.9 V167.5" stroke="#8fd0f0" stroke-width="0.9"/>
<rect x="782" y="161.1" width="2.4" height="5.2" fill="#8fd0f0"/>
<path d="M785.7 161.6 V168.7" stroke="#ee8478" stroke-width="0.9"/>
<rect x="784.6" y="164.7" width="2.2" height="1.6" fill="#3a2a30" stroke="#ee8478" stroke-width="0.8"/>
<path d="M788.3 164.4 V166.5" stroke="#8fd0f0" stroke-width="0.9"/>
<rect x="787.1" y="164.7" width="2.4" height="1" fill="#8fd0f0"/>
<path d="M790.8 164.8 V166.3" stroke="#8fd0f0" stroke-width="0.9"/>
<rect x="789.6" y="165.6" width="2.4" height="1" fill="#8fd0f0"/>
<path d="M793.4 165.4 V167.9" stroke="#8fd0f0" stroke-width="0.9"/>
<rect x="792.2" y="166" width="2.4" height="1" fill="#8fd0f0"/>
<path d="M795.9 165.2 V167.9" stroke="#8fd0f0" stroke-width="0.9"/>
<rect x="794.7" y="166.3" width="2.4" height="1.1" fill="#8fd0f0"/>
<path d="M798.4 166.6 V174" stroke="#8fd0f0" stroke-width="0.9"/>
<rect x="797.2" y="167.4" width="2.4" height="5.1" fill="#8fd0f0"/>
<path d="M801 170.4 V173.1" stroke="#ee8478" stroke-width="0.9"/>
<rect x="799.9" y="171.4" width="2.2" height="1" fill="#3a2a30" stroke="#ee8478" stroke-width="0.8"/>
<path d="M803.5 170.4 V172.6" stroke="#8fd0f0" stroke-width="0.9"/>
<rect x="802.3" y="171.4" width="2.4" height="1" fill="#8fd0f0"/>
<path d="M806.1 171.5 V173.7" stroke="#8fd0f0" stroke-width="0.9"/>
<rect x="804.9" y="172.2" width="2.4" height="1" fill="#8fd0f0"/>
<path d="M808.6 166.9 V173.7" stroke="#ee8478" stroke-width="0.9"/>
<rect x="807.5" y="168" width="2.2" height="5.2" fill="#3a2a30" stroke="#ee8478" stroke-width="0.8"/>
<path d="M811.1 167.3 V171.5" stroke="#8fd0f0" stroke-width="0.9"/>
<rect x="809.9" y="168" width="2.4" height="2.7" fill="#8fd0f0"/>
<path d="M813.7 166.9 V171.4" stroke="#ee8478" stroke-width="0.9"/>
<rect x="812.6" y="168.5" width="2.2" height="2.2" fill="#3a2a30" stroke="#ee8478" stroke-width="0.8"/>
<path d="M816.2 166.1 V168.9" stroke="#ee8478" stroke-width="0.9"/>
<rect x="815.1" y="167.2" width="2.2" height="1.3" fill="#3a2a30" stroke="#ee8478" stroke-width="0.8"/>
<path d="M818.8 166.4 V168.9" stroke="#8fd0f0" stroke-width="0.9"/>
<rect x="817.6" y="167.2" width="2.4" height="1.2" fill="#8fd0f0"/>
<path d="M821.3 167.7 V172.4" stroke="#8fd0f0" stroke-width="0.9"/>
<rect x="820.1" y="168.4" width="2.4" height="2.5" fill="#8fd0f0"/>
<path d="M823.8 170.4 V172.8" stroke="#8fd0f0" stroke-width="0.9"/>
<rect x="822.6" y="170.9" width="2.4" height="1" fill="#8fd0f0"/>
<path d="M826.4 171.1 V172.5" stroke="#8fd0f0" stroke-width="0.9"/>
<rect x="825.2" y="171.6" width="2.4" height="1" fill="#8fd0f0"/>
<path d="M828.9 169.4 V172.9" stroke="#ee8478" stroke-width="0.9"/>
<rect x="827.8" y="171" width="2.2" height="1" fill="#3a2a30" stroke="#ee8478" stroke-width="0.8"/>
<path d="M831.5 168.2 V173.7" stroke="#ee8478" stroke-width="0.9"/>
<rect x="830.4" y="169.4" width="2.2" height="1.6" fill="#3a2a30" stroke="#ee8478" stroke-width="0.8"/>
<path d="M834 165.2 V170.4" stroke="#ee8478" stroke-width="0.9"/>
<rect x="832.9" y="166.7" width="2.2" height="2.7" fill="#3a2a30" stroke="#ee8478" stroke-width="0.8"/>
<path d="M836.5 164.4 V171.1" stroke="#8fd0f0" stroke-width="0.9"/>
<rect x="835.3" y="166.7" width="2.4" height="1.7" fill="#8fd0f0"/>
<path d="M839.1 165.8 V168.8" stroke="#ee8478" stroke-width="0.9"/>
<rect x="838" y="166.6" width="2.2" height="1.9" fill="#3a2a30" stroke="#ee8478" stroke-width="0.8"/>
<path d="M841.6 164.2 V166.9" stroke="#ee8478" stroke-width="0.9"/>
<rect x="840.5" y="166.3" width="2.2" height="1" fill="#3a2a30" stroke="#ee8478" stroke-width="0.8"/>
<path d="M844.2 163.9 V168" stroke="#ee8478" stroke-width="0.9"/>
<rect x="843.1" y="164.9" width="2.2" height="1.4" fill="#3a2a30" stroke="#ee8478" stroke-width="0.8"/>
<path d="M846.7 164.1 V169.2" stroke="#8fd0f0" stroke-width="0.9"/>
<rect x="845.5" y="164.9" width="2.4" height="3.9" fill="#8fd0f0"/>
<path d="M849.2 168.4 V170.5" stroke="#8fd0f0" stroke-width="0.9"/>
<rect x="848" y="168.8" width="2.4" height="1" fill="#8fd0f0"/>
<path d="M851.8 163.1 V169.9" stroke="#ee8478" stroke-width="0.9"/>
<rect x="850.7" y="164.4" width="2.2" height="4.5" fill="#3a2a30" stroke="#ee8478" stroke-width="0.8"/>
<path d="M854.3 163.3 V166.2" stroke="#8fd0f0" stroke-width="0.9"/>
<rect x="853.1" y="164.4" width="2.4" height="1" fill="#8fd0f0"/>
<path d="M856.9 162.7 V167.5" stroke="#8fd0f0" stroke-width="0.9"/>
<rect x="855.7" y="165.4" width="2.4" height="1.5" fill="#8fd0f0"/>
<path d="M859.4 164.2 V168.2" stroke="#ee8478" stroke-width="0.9"/>
<rect x="858.3" y="165.4" width="2.2" height="1.5" fill="#3a2a30" stroke="#ee8478" stroke-width="0.8"/>
<path d="M861.9 155.9 V166.3" stroke="#ee8478" stroke-width="0.9"/>
<rect x="860.8" y="156.4" width="2.2" height="8.9" fill="#3a2a30" stroke="#ee8478" stroke-width="0.8"/>
<path d="M864.5 155 V165.1" stroke="#8fd0f0" stroke-width="0.9"/>
<rect x="863.3" y="156.4" width="2.4" height="8" fill="#8fd0f0"/>
<path d="M867 157.2 V165.2" stroke="#ee8478" stroke-width="0.9"/>
<rect x="865.9" y="158.4" width="2.2" height="6" fill="#3a2a30" stroke="#ee8478" stroke-width="0.8"/>
<path d="M869.6 157.3 V159.9" stroke="#8fd0f0" stroke-width="0.9"/>
<rect x="868.4" y="158.4" width="2.4" height="1" fill="#8fd0f0"/>
<path d="M872.1 154.9 V160.3" stroke="#ee8478" stroke-width="0.9"/>
<rect x="871" y="155.4" width="2.2" height="3.9" fill="#3a2a30" stroke="#ee8478" stroke-width="0.8"/>
<path d="M874.6 151.9 V156" stroke="#ee8478" stroke-width="0.9"/>
<rect x="873.5" y="153.3" width="2.2" height="2.1" fill="#3a2a30" stroke="#ee8478" stroke-width="0.8"/>
<path d="M877.2 152.8 V155.9" stroke="#8fd0f0" stroke-width="0.9"/>
<rect x="876" y="153.3" width="2.4" height="1.4" fill="#8fd0f0"/>
<path d="M879.7 153.4 V155.5" stroke="#ee8478" stroke-width="0.9"/>
<rect x="878.6" y="153.8" width="2.2" height="1" fill="#3a2a30" stroke="#ee8478" stroke-width="0.8"/>
<path d="M882.3 153.2 V160.4" stroke="#8fd0f0" stroke-width="0.9"/>
<rect x="881.1" y="153.8" width="2.4" height="4.1" fill="#8fd0f0"/>
<path d="M884.8 157.2 V161.4" stroke="#8fd0f0" stroke-width="0.9"/>
<rect x="883.6" y="157.9" width="2.4" height="3.2" fill="#8fd0f0"/>
<path d="M887.3 159 V161.8" stroke="#ee8478" stroke-width="0.9"/>
<rect x="886.2" y="159.5" width="2.2" height="1.5" fill="#3a2a30" stroke="#ee8478" stroke-width="0.8"/>
<path d="M889.9 156.4 V160.4" stroke="#ee8478" stroke-width="0.9"/>
<rect x="888.8" y="157.4" width="2.2" height="2.1" fill="#3a2a30" stroke="#ee8478" stroke-width="0.8"/>
<path d="M892.4 155.3 V158.4" stroke="#ee8478" stroke-width="0.9"/>
<rect x="891.3" y="156.8" width="2.2" height="1" fill="#3a2a30" stroke="#ee8478" stroke-width="0.8"/>
<path d="M895 153.6 V158.1" stroke="#ee8478" stroke-width="0.9"/>
<rect x="893.9" y="154.6" width="2.2" height="2.2" fill="#3a2a30" stroke="#ee8478" stroke-width="0.8"/>
<path d="M897.5 153 V157.3" stroke="#8fd0f0" stroke-width="0.9"/>
<rect x="896.3" y="154.6" width="2.4" height="2.2" fill="#8fd0f0"/>
<path d="M900 154.2 V157.2" stroke="#ee8478" stroke-width="0.9"/>
<rect x="898.9" y="154.5" width="2.2" height="2.3" fill="#3a2a30" stroke="#ee8478" stroke-width="0.8"/>
<path d="M902.6 151.5 V155" stroke="#ee8478" stroke-width="0.9"/>
<rect x="901.5" y="152.4" width="2.2" height="2.1" fill="#3a2a30" stroke="#ee8478" stroke-width="0.8"/>
<path d="M905.1 152 V154.9" stroke="#8fd0f0" stroke-width="0.9"/>
<rect x="903.9" y="152.4" width="2.4" height="1.5" fill="#8fd0f0"/>
<path d="M907.7 152.8 V156.5" stroke="#8fd0f0" stroke-width="0.9"/>
<rect x="906.5" y="153.9" width="2.4" height="1.8" fill="#8fd0f0"/>
<path d="M910.2 153.9 V156.2" stroke="#ee8478" stroke-width="0.9"/>
<rect x="909.1" y="154.2" width="2.2" height="1.5" fill="#3a2a30" stroke="#ee8478" stroke-width="0.8"/>
<path d="M912.7 153.7 V156" stroke="#ee8478" stroke-width="0.9"/>
<rect x="911.6" y="154.2" width="2.2" height="1" fill="#3a2a30" stroke="#ee8478" stroke-width="0.8"/>
<path d="M915.3 153.5 V155.3" stroke="#ee8478" stroke-width="0.9"/>
<rect x="914.2" y="153.8" width="2.2" height="1" fill="#3a2a30" stroke="#ee8478" stroke-width="0.8"/>
<path d="M917.8 153 V154.3" stroke="#8fd0f0" stroke-width="0.9"/>
<rect x="916.6" y="153.8" width="2.4" height="1" fill="#8fd0f0"/>
<path d="M920.4 151.2 V157.1" stroke="#8fd0f0" stroke-width="0.9"/>
<rect x="919.2" y="153.8" width="2.4" height="2.8" fill="#8fd0f0"/>
<path d="M922.9 149 V159.4" stroke="#ee8478" stroke-width="0.9"/>
<rect x="921.8" y="150.2" width="2.2" height="6.4" fill="#3a2a30" stroke="#ee8478" stroke-width="0.8"/>
<path d="M925.4 148.2 V151" stroke="#ee8478" stroke-width="0.9"/>
<rect x="924.3" y="148.6" width="2.2" height="1.6" fill="#3a2a30" stroke="#ee8478" stroke-width="0.8"/>
<path d="M928 147.6 V157.6" stroke="#8fd0f0" stroke-width="0.9"/>
<rect x="926.8" y="148.6" width="2.4" height="6.1" fill="#8fd0f0"/>
<path d="M930.5 153.9 V160.9" stroke="#8fd0f0" stroke-width="0.9"/>
<rect x="929.3" y="154.7" width="2.4" height="5.9" fill="#8fd0f0"/>
<path d="M933.1 156.9 V161.4" stroke="#ee8478" stroke-width="0.9"/>
<rect x="932" y="157.9" width="2.2" height="2.6" fill="#3a2a30" stroke="#ee8478" stroke-width="0.8"/>
<path d="M935.6 157.2 V161.8" stroke="#8fd0f0" stroke-width="0.9"/>
<rect x="934.4" y="157.9" width="2.4" height="1.6" fill="#8fd0f0"/>
<path d="M938.1 158.8 V160.5" stroke="#ee8478" stroke-width="0.9"/>
<rect x="937" y="159.3" width="2.2" height="1" fill="#3a2a30" stroke="#ee8478" stroke-width="0.8"/>
<path d="M940.7 157.9 V160.2" stroke="#ee8478" stroke-width="0.9"/>
<rect x="939.6" y="158.3" width="2.2" height="1" fill="#3a2a30" stroke="#ee8478" stroke-width="0.8"/>
<path d="M943.2 156.9 V162.1" stroke="#8fd0f0" stroke-width="0.9"/>
<rect x="942" y="158.3" width="2.4" height="1.8" fill="#8fd0f0"/>
<path d="M945.8 156.7 V161.1" stroke="#ee8478" stroke-width="0.9"/>
<rect x="944.7" y="158.7" width="2.2" height="1.3" fill="#3a2a30" stroke="#ee8478" stroke-width="0.8"/>
<path d="M948.3 157.6 V163.6" stroke="#8fd0f0" stroke-width="0.9"/>
<rect x="947.1" y="158.7" width="2.4" height="3.9" fill="#8fd0f0"/>
<path d="M950.8 158.7 V163.7" stroke="#ee8478" stroke-width="0.9"/>
<rect x="949.7" y="159.6" width="2.2" height="2.9" fill="#3a2a30" stroke="#ee8478" stroke-width="0.8"/>
<path d="M953.4 157.4 V160.9" stroke="#ee8478" stroke-width="0.9"/>
<rect x="952.3" y="159.4" width="2.2" height="1" fill="#3a2a30" stroke="#ee8478" stroke-width="0.8"/>
<path d="M955.9 157.1 V167.2" stroke="#8fd0f0" stroke-width="0.9"/>
<rect x="954.7" y="159.4" width="2.4" height="6.8" fill="#8fd0f0"/>
<path d="M958.5 161.6 V167.3" stroke="#ee8478" stroke-width="0.9"/>
<rect x="957.4" y="162.1" width="2.2" height="4" fill="#3a2a30" stroke="#ee8478" stroke-width="0.8"/>
<path d="M961 161.7 V168.7" stroke="#8fd0f0" stroke-width="0.9"/>
<rect x="959.8" y="162.1" width="2.4" height="5.1" fill="#8fd0f0"/>
<path d="M963.5 166.4 V167.8" stroke="#8fd0f0" stroke-width="0.9"/>
<rect x="962.3" y="167.2" width="2.4" height="1" fill="#8fd0f0"/>
<path d="M966.1 164.7 V167.9" stroke="#ee8478" stroke-width="0.9"/>
<rect x="965" y="165.3" width="2.2" height="2" fill="#3a2a30" stroke="#ee8478" stroke-width="0.8"/>
<path d="M968.6 162.6 V167.5" stroke="#ee8478" stroke-width="0.9"/>
<rect x="967.5" y="164.5" width="2.2" height="1" fill="#3a2a30" stroke="#ee8478" stroke-width="0.8"/>
<path d="M971.2 162.8 V164.8" stroke="#ee8478" stroke-width="0.9"/>
<rect x="970.1" y="163.8" width="2.2" height="1" fill="#3a2a30" stroke="#ee8478" stroke-width="0.8"/>
<path d="M973.7 163 V166.2" stroke="#8fd0f0" stroke-width="0.9"/>
<rect x="972.5" y="163.8" width="2.4" height="2" fill="#8fd0f0"/>
<path d="M976.2 163.8 V168" stroke="#ee8478" stroke-width="0.9"/>
<rect x="975.1" y="164.7" width="2.2" height="1.1" fill="#3a2a30" stroke="#ee8478" stroke-width="0.8"/>
<path d="M978.8 164 V166.7" stroke="#8fd0f0" stroke-width="0.9"/>
<rect x="977.6" y="164.7" width="2.4" height="1.2" fill="#8fd0f0"/>
<path d="M981.3 165.5 V167.4" stroke="#8fd0f0" stroke-width="0.9"/>
<rect x="980.1" y="165.9" width="2.4" height="1" fill="#8fd0f0"/>
<path d="M983.9 165.3 V167.6" stroke="#8fd0f0" stroke-width="0.9"/>
<rect x="982.7" y="166.3" width="2.4" height="1" fill="#8fd0f0"/>
<path d="M986.4 165.3 V168.2" stroke="#8fd0f0" stroke-width="0.9"/>
<rect x="985.2" y="166.8" width="2.4" height="1" fill="#8fd0f0"/>
<path d="M988.9 166 V168.4" stroke="#ee8478" stroke-width="0.9"/>
<rect x="987.8" y="167.1" width="2.2" height="1" fill="#3a2a30" stroke="#ee8478" stroke-width="0.8"/>
<path d="M991.5 165 V172" stroke="#8fd0f0" stroke-width="0.9"/>
<rect x="990.3" y="167.1" width="2.4" height="4.6" fill="#8fd0f0"/>
<path d="M994 169.7 V172.8" stroke="#ee8478" stroke-width="0.9"/>
<rect x="992.9" y="171.3" width="2.2" height="1" fill="#3a2a30" stroke="#ee8478" stroke-width="0.8"/>
<path d="M996.6 169.6 V174.7" stroke="#8fd0f0" stroke-width="0.9"/>
<rect x="995.4" y="171.3" width="2.4" height="2.4" fill="#8fd0f0"/>
<path d="M999.1 171.8 V174.1" stroke="#ee8478" stroke-width="0.9"/>
<rect x="998" y="173.6" width="2.2" height="1" fill="#3a2a30" stroke="#ee8478" stroke-width="0.8"/>
<path d="M1001.6 172.1 V174.6" stroke="#ee8478" stroke-width="0.9"/>
<rect x="1000.5" y="172.7" width="2.2" height="1" fill="#3a2a30" stroke="#ee8478" stroke-width="0.8"/>
<path d="M1004.2 171.1 V173.6" stroke="#8fd0f0" stroke-width="0.9"/>
<rect x="1003" y="172.7" width="2.4" height="1" fill="#8fd0f0"/>
<path d="M1006.7 170 V174.3" stroke="#ee8478" stroke-width="0.9"/>
<rect x="1005.6" y="172.5" width="2.2" height="1" fill="#3a2a30" stroke="#ee8478" stroke-width="0.8"/>
<path d="M1009.3 170.6 V173.3" stroke="#ee8478" stroke-width="0.9"/>
<rect x="1008.2" y="171.5" width="2.2" height="1" fill="#3a2a30" stroke="#ee8478" stroke-width="0.8"/>
<path d="M1011.8 170.6 V174.4" stroke="#8fd0f0" stroke-width="0.9"/>
<rect x="1010.6" y="171.5" width="2.4" height="1.3" fill="#8fd0f0"/>
<path d="M1014.3 169.9 V173.3" stroke="#ee8478" stroke-width="0.9"/>
<rect x="1013.2" y="170.6" width="2.2" height="2.2" fill="#3a2a30" stroke="#ee8478" stroke-width="0.8"/>
<path d="M1016.9 169.2 V172.9" stroke="#8fd0f0" stroke-width="0.9"/>
<rect x="1015.7" y="170.6" width="2.4" height="1" fill="#8fd0f0"/>
<path d="M1019.4 169.5 V172.2" stroke="#ee8478" stroke-width="0.9"/>
<rect x="1018.3" y="170" width="2.2" height="1.3" fill="#3a2a30" stroke="#ee8478" stroke-width="0.8"/>
<path d="M1022 166.6 V172.5" stroke="#ee8478" stroke-width="0.9"/>
<rect x="1020.9" y="167.8" width="2.2" height="2.2" fill="#3a2a30" stroke="#ee8478" stroke-width="0.8"/>
<path d="M1024.5 167.1 V169.9" stroke="#ee8478" stroke-width="0.9"/>
<rect x="1023.4" y="167.8" width="2.2" height="1" fill="#3a2a30" stroke="#ee8478" stroke-width="0.8"/>
<path d="M1027 167.4 V169" stroke="#8fd0f0" stroke-width="0.9"/>
<rect x="1025.8" y="167.8" width="2.4" height="1" fill="#8fd0f0"/>
<path d="M1029.6 161.9 V170.1" stroke="#ee8478" stroke-width="0.9"/>
<rect x="1028.5" y="162.2" width="2.2" height="6.4" fill="#3a2a30" stroke="#ee8478" stroke-width="0.8"/>
<path d="M1032.1 161.5 V163.7" stroke="#8fd0f0" stroke-width="0.9"/>
<rect x="1030.9" y="162.2" width="2.4" height="1.1" fill="#8fd0f0"/>
<path d="M1034.7 162.2 V166.8" stroke="#8fd0f0" stroke-width="0.9"/>
<rect x="1033.5" y="163.3" width="2.4" height="1.7" fill="#8fd0f0"/>
<path d="M1037.2 162.6 V165.6" stroke="#ee8478" stroke-width="0.9"/>
<rect x="1036.1" y="164.9" width="2.2" height="1" fill="#3a2a30" stroke="#ee8478" stroke-width="0.8"/>
<path d="M1039.7 163.5 V166.9" stroke="#8fd0f0" stroke-width="0.9"/>
<rect x="1038.5" y="164.9" width="2.4" height="1.3" fill="#8fd0f0"/>
<path d="M1042.3 164.8 V169.2" stroke="#8fd0f0" stroke-width="0.9"/>
<rect x="1041.1" y="166.3" width="2.4" height="2.5" fill="#8fd0f0"/>
<path d="M1044.8 167.8 V171.5" stroke="#8fd0f0" stroke-width="0.9"/>
<rect x="1043.6" y="168.8" width="2.4" height="2.3" fill="#8fd0f0"/>
<path d="M1047.4 169.1 V171.4" stroke="#ee8478" stroke-width="0.9"/>
<rect x="1046.3" y="169.5" width="2.2" height="1.5" fill="#3a2a30" stroke="#ee8478" stroke-width="0.8"/>
<path d="M1049.9 169.1 V174.1" stroke="#8fd0f0" stroke-width="0.9"/>
<rect x="1048.7" y="169.5" width="2.4" height="1.9" fill="#8fd0f0"/>
<path d="M1052.4 169.8 V172.5" stroke="#ee8478" stroke-width="0.9"/>
<rect x="1051.3" y="171.1" width="2.2" height="1" fill="#3a2a30" stroke="#ee8478" stroke-width="0.8"/>
<path d="M1055 170.6 V176.1" stroke="#8fd0f0" stroke-width="0.9"/>
<rect x="1053.8" y="171.1" width="2.4" height="1.6" fill="#8fd0f0"/>
<path d="M1057.5 170.6 V179.2" stroke="#8fd0f0" stroke-width="0.9"/>
<rect x="1056.3" y="172.7" width="2.4" height="4" fill="#8fd0f0"/>
<path d="M1060.1 173.2 V177.6" stroke="#ee8478" stroke-width="0.9"/>
<rect x="1059" y="176.6" width="2.2" height="1" fill="#3a2a30" stroke="#ee8478" stroke-width="0.8"/>
<path d="M1062.6 173.4 V188" stroke="#8fd0f0" stroke-width="0.9"/>
<rect x="1061.4" y="176.6" width="2.4" height="8.8" fill="#8fd0f0"/>
<path d="M1065.1 183.9 V193.4" stroke="#8fd0f0" stroke-width="0.9"/>
<rect x="1063.9" y="185.4" width="2.4" height="7.1" fill="#8fd0f0"/>
<path d="M1067.7 190 V199.6" stroke="#8fd0f0" stroke-width="0.9"/>
<rect x="1066.5" y="192.5" width="2.4" height="3.6" fill="#8fd0f0"/>
<path d="M1070.2 195.6 V203" stroke="#8fd0f0" stroke-width="0.9"/>
<rect x="1069" y="196.1" width="2.4" height="6.3" fill="#8fd0f0"/>
<path d="M1072.8 200.3 V205.8" stroke="#8fd0f0" stroke-width="0.9"/>
<rect x="1071.6" y="202.4" width="2.4" height="2.7" fill="#8fd0f0"/>
<path d="M1075.3 201.9 V205.5" stroke="#ee8478" stroke-width="0.9"/>
<rect x="1074.2" y="202.4" width="2.2" height="2.7" fill="#3a2a30" stroke="#ee8478" stroke-width="0.8"/>
<path d="M1077.8 197.3 V203.3" stroke="#ee8478" stroke-width="0.9"/>
<rect x="1076.7" y="199" width="2.2" height="3.5" fill="#3a2a30" stroke="#ee8478" stroke-width="0.8"/>
<path d="M1080.4 193 V199.9" stroke="#ee8478" stroke-width="0.9"/>
<rect x="1079.3" y="194.7" width="2.2" height="4.2" fill="#3a2a30" stroke="#ee8478" stroke-width="0.8"/>
<path d="M1082.9 192 V196.1" stroke="#ee8478" stroke-width="0.9"/>
<rect x="1081.8" y="193.9" width="2.2" height="1" fill="#3a2a30" stroke="#ee8478" stroke-width="0.8"/>
<path d="M1085.5 188.8 V195.1" stroke="#ee8478" stroke-width="0.9"/>
<rect x="1084.4" y="191.1" width="2.2" height="2.7" fill="#3a2a30" stroke="#ee8478" stroke-width="0.8"/>
<path d="M1088 189.5 V197.9" stroke="#8fd0f0" stroke-width="0.9"/>
<rect x="1086.8" y="191.1" width="2.4" height="5.8" fill="#8fd0f0"/>
<path d="M1090.5 192.5 V197.5" stroke="#ee8478" stroke-width="0.9"/>
<rect x="1089.4" y="193" width="2.2" height="4" fill="#3a2a30" stroke="#ee8478" stroke-width="0.8"/>
<path d="M1093.1 191.1 V194.6" stroke="#8fd0f0" stroke-width="0.9"/>
<rect x="1091.9" y="193" width="2.4" height="1" fill="#8fd0f0"/>
<path d="M1095.6 187.2 V193.9" stroke="#ee8478" stroke-width="0.9"/>
<rect x="1094.5" y="188" width="2.2" height="5" fill="#3a2a30" stroke="#ee8478" stroke-width="0.8"/>
<path d="M1098.2 187.5 V191.3" stroke="#8fd0f0" stroke-width="0.9"/>
<rect x="1097" y="188" width="2.4" height="3" fill="#8fd0f0"/>
<path d="M1100.7 189 V192.1" stroke="#ee8478" stroke-width="0.9"/>
<rect x="1099.6" y="189.7" width="2.2" height="1.3" fill="#3a2a30" stroke="#ee8478" stroke-width="0.8"/>
<path d="M1103.2 189.3 V192.5" stroke="#8fd0f0" stroke-width="0.9"/>
<rect x="1102" y="189.7" width="2.4" height="2.3" fill="#8fd0f0"/>
<path d="M1105.8 191.1 V193.9" stroke="#8fd0f0" stroke-width="0.9"/>
<rect x="1104.6" y="191.9" width="2.4" height="1" fill="#8fd0f0"/>
<path d="M1108.3 191.1 V194.1" stroke="#ee8478" stroke-width="0.9"/>
<rect x="1107.2" y="191.7" width="2.2" height="1.3" fill="#3a2a30" stroke="#ee8478" stroke-width="0.8"/>
<path d="M1110.9 185.8 V192.2" stroke="#ee8478" stroke-width="0.9"/>
<rect x="1109.8" y="187.1" width="2.2" height="4.5" fill="#3a2a30" stroke="#ee8478" stroke-width="0.8"/>
<path d="M1113.4 184.5 V188.3" stroke="#ee8478" stroke-width="0.9"/>
<rect x="1112.3" y="185.4" width="2.2" height="1.7" fill="#3a2a30" stroke="#ee8478" stroke-width="0.8"/>
<path d="M1115.9 184.4 V189.7" stroke="#8fd0f0" stroke-width="0.9"/>
<rect x="1114.7" y="185.4" width="2.4" height="3.8" fill="#8fd0f0"/>
<path d="M1118.5 185.5 V189.8" stroke="#ee8478" stroke-width="0.9"/>
<rect x="1117.4" y="186.2" width="2.2" height="3" fill="#3a2a30" stroke="#ee8478" stroke-width="0.8"/>
<path d="M1121 182.4 V186.5" stroke="#ee8478" stroke-width="0.9"/>
<rect x="1119.9" y="183.4" width="2.2" height="2.8" fill="#3a2a30" stroke="#ee8478" stroke-width="0.8"/>
<path d="M1123.6 180.3 V185.3" stroke="#8fd0f0" stroke-width="0.9"/>
<rect x="1122.4" y="183.4" width="2.4" height="1" fill="#8fd0f0"/>
<path d="M1126.1 180.5 V184.2" stroke="#ee8478" stroke-width="0.9"/>
<rect x="1125" y="182.6" width="2.2" height="1.2" fill="#3a2a30" stroke="#ee8478" stroke-width="0.8"/>
<path d="M1128.6 181.1 V184" stroke="#ee8478" stroke-width="0.9"/>
<rect x="1127.5" y="182.5" width="2.2" height="1" fill="#3a2a30" stroke="#ee8478" stroke-width="0.8"/>
<path d="M1131.2 182 V186.2" stroke="#8fd0f0" stroke-width="0.9"/>
<rect x="1130" y="182.5" width="2.4" height="1" fill="#8fd0f0"/>
<path d="M1133.7 178.8 V184.1" stroke="#ee8478" stroke-width="0.9"/>
<rect x="1132.6" y="179.8" width="2.2" height="3.7" fill="#3a2a30" stroke="#ee8478" stroke-width="0.8"/>
<path d="M1136.3 175.9 V181" stroke="#ee8478" stroke-width="0.9"/>
<rect x="1135.2" y="177.3" width="2.2" height="2.5" fill="#3a2a30" stroke="#ee8478" stroke-width="0.8"/>
<path d="M1138.8 176.2 V181.7" stroke="#8fd0f0" stroke-width="0.9"/>
<rect x="1137.6" y="177.3" width="2.4" height="3.5" fill="#8fd0f0"/>
<path d="M1141.3 174.5 V181.7" stroke="#ee8478" stroke-width="0.9"/>
<rect x="1140.2" y="175.4" width="2.2" height="5.4" fill="#3a2a30" stroke="#ee8478" stroke-width="0.8"/>
<path d="M1143.9 174.6 V177.7" stroke="#8fd0f0" stroke-width="0.9"/>
<rect x="1142.7" y="175.4" width="2.4" height="1.7" fill="#8fd0f0"/>
<path d="M1146.4 176.6 V178.6" stroke="#8fd0f0" stroke-width="0.9"/>
<rect x="1145.2" y="177.1" width="2.4" height="1" fill="#8fd0f0"/>
<path d="M1149 177 V181.8" stroke="#8fd0f0" stroke-width="0.9"/>
<rect x="1147.8" y="178.1" width="2.4" height="2.3" fill="#8fd0f0"/>
<path d="M1151.5 178.3 V182.4" stroke="#ee8478" stroke-width="0.9"/>
<rect x="1150.4" y="180.4" width="2.2" height="1" fill="#3a2a30" stroke="#ee8478" stroke-width="0.8"/>
<path d="M1154 178.7 V186.6" stroke="#8fd0f0" stroke-width="0.9"/>
<rect x="1152.8" y="180.4" width="2.4" height="3.9" fill="#8fd0f0"/>
<path d="M1156.6 183.9 V188.3" stroke="#8fd0f0" stroke-width="0.9"/>
<rect x="1155.4" y="184.2" width="2.4" height="2" fill="#8fd0f0"/>
<path d="M1159.1 185.1 V188.8" stroke="#8fd0f0" stroke-width="0.9"/>
<rect x="1157.9" y="186.2" width="2.4" height="1" fill="#8fd0f0"/>
<path d="M1161.7 186.1 V193.1" stroke="#8fd0f0" stroke-width="0.9"/>
<rect x="1160.5" y="187.3" width="2.4" height="4.1" fill="#8fd0f0"/>
<path d="M1164.2 188.9 V191.8" stroke="#ee8478" stroke-width="0.9"/>
<rect x="1163.1" y="190" width="2.2" height="1.4" fill="#3a2a30" stroke="#ee8478" stroke-width="0.8"/>
<path d="M1166.7 184.6 V191.1" stroke="#ee8478" stroke-width="0.9"/>
<rect x="1165.6" y="185.7" width="2.2" height="4.2" fill="#3a2a30" stroke="#ee8478" stroke-width="0.8"/>
<path d="M1169.3 184.8 V187.4" stroke="#8fd0f0" stroke-width="0.9"/>
<rect x="1168.1" y="185.7" width="2.4" height="1.1" fill="#8fd0f0"/>
<path d="M1171.8 184.1 V189.5" stroke="#ee8478" stroke-width="0.9"/>
<rect x="1170.7" y="185.1" width="2.2" height="1.7" fill="#3a2a30" stroke="#ee8478" stroke-width="0.8"/>
<path d="M1174.4 180.6 V185.4" stroke="#ee8478" stroke-width="0.9"/>
<rect x="1173.3" y="181.5" width="2.2" height="3.6" fill="#3a2a30" stroke="#ee8478" stroke-width="0.8"/>
<path d="M1176.9 178.9 V181.9" stroke="#ee8478" stroke-width="0.9"/>
<rect x="1175.8" y="180" width="2.2" height="1.5" fill="#3a2a30" stroke="#ee8478" stroke-width="0.8"/>
<path d="M1179.4 173.5 V182.4" stroke="#ee8478" stroke-width="0.9"/>
<rect x="1178.3" y="174.5" width="2.2" height="5.5" fill="#3a2a30" stroke="#ee8478" stroke-width="0.8"/>
<path d="M1182 170 V176.7" stroke="#ee8478" stroke-width="0.9"/>
<rect x="1180.9" y="172.8" width="2.2" height="1.8" fill="#3a2a30" stroke="#ee8478" stroke-width="0.8"/>
<path d="M1184.5 171.8 V175.7" stroke="#8fd0f0" stroke-width="0.9"/>
<rect x="1183.3" y="172.8" width="2.4" height="1" fill="#8fd0f0"/>
<path d="M1187.1 170.2 V174.8" stroke="#ee8478" stroke-width="0.9"/>
<rect x="1186" y="170.6" width="2.2" height="2.9" fill="#3a2a30" stroke="#ee8478" stroke-width="0.8"/>
<path d="M1189.6 168.8 V172.7" stroke="#8fd0f0" stroke-width="0.9"/>
<rect x="1188.4" y="170.6" width="2.4" height="1.2" fill="#8fd0f0"/>
<path d="M1192.1 171 V177.4" stroke="#8fd0f0" stroke-width="0.9"/>
<rect x="1190.9" y="171.8" width="2.4" height="5" fill="#8fd0f0"/>
<path d="M1194.7 173.4 V185.5" stroke="#8fd0f0" stroke-width="0.9"/>
<rect x="1193.5" y="176.7" width="2.4" height="7.3" fill="#8fd0f0"/>
<path d="M1197.2 182 V201.8" stroke="#8fd0f0" stroke-width="0.9"/>
<rect x="1196" y="184" width="2.4" height="15.6" fill="#8fd0f0"/>
<path d="M1199.8 198.4 V201.4" stroke="#8fd0f0" stroke-width="0.9"/>
<rect x="1198.6" y="199.7" width="2.4" height="1" fill="#8fd0f0"/>
<path d="M1202.3 189.3 V201.1" stroke="#ee8478" stroke-width="0.9"/>
<rect x="1201.2" y="191.3" width="2.2" height="8.5" fill="#3a2a30" stroke="#ee8478" stroke-width="0.8"/>
<path d="M1204.8 181.1 V192.5" stroke="#ee8478" stroke-width="0.9"/>
<rect x="1203.7" y="182.6" width="2.2" height="8.7" fill="#3a2a30" stroke="#ee8478" stroke-width="0.8"/>
<path d="M1207.4 181.9 V190.2" stroke="#8fd0f0" stroke-width="0.9"/>
<rect x="1206.2" y="182.6" width="2.4" height="5.3" fill="#8fd0f0"/>
<path d="M1209.9 185.5 V193.6" stroke="#8fd0f0" stroke-width="0.9"/>
<rect x="1208.7" y="187.9" width="2.4" height="4.2" fill="#8fd0f0"/>
<path d="M1212.5 190.7 V193.6" stroke="#ee8478" stroke-width="0.9"/>
<rect x="1211.4" y="192" width="2.2" height="1" fill="#3a2a30" stroke="#ee8478" stroke-width="0.8"/>
<path d="M1215 190.1 V197.4" stroke="#8fd0f0" stroke-width="0.9"/>
<rect x="1213.8" y="192" width="2.4" height="4" fill="#8fd0f0"/>
<path d="M1217.5 195.4 V201" stroke="#8fd0f0" stroke-width="0.9"/>
<rect x="1216.3" y="196" width="2.4" height="3" fill="#8fd0f0"/>
<path d="M1220.1 197.1 V200.2" stroke="#ee8478" stroke-width="0.9"/>
<rect x="1219" y="197.9" width="2.2" height="1.1" fill="#3a2a30" stroke="#ee8478" stroke-width="0.8"/>
<path d="M1222.6 197 V200.1" stroke="#8fd0f0" stroke-width="0.9"/>
<rect x="1221.4" y="197.9" width="2.4" height="1.3" fill="#8fd0f0"/>
<path d="M1225.2 194.5 V200" stroke="#ee8478" stroke-width="0.9"/>
<rect x="1224.1" y="196.6" width="2.2" height="2.5" fill="#3a2a30" stroke="#ee8478" stroke-width="0.8"/>
<path d="M1227.7 196.1 V202.5" stroke="#8fd0f0" stroke-width="0.9"/>
<rect x="1226.5" y="196.6" width="2.4" height="4.6" fill="#8fd0f0"/>
<path d="M1230.2 195.2 V203" stroke="#ee8478" stroke-width="0.9"/>
<rect x="1229.1" y="195.7" width="2.2" height="5.5" fill="#3a2a30" stroke="#ee8478" stroke-width="0.8"/>
<path d="M1232.8 193.9 V206.8" stroke="#8fd0f0" stroke-width="0.9"/>
<rect x="1231.6" y="195.7" width="2.4" height="8.3" fill="#8fd0f0"/>
<path d="M1235.3 203.1 V217" stroke="#8fd0f0" stroke-width="0.9"/>
<rect x="1234.1" y="204.1" width="2.4" height="10.9" fill="#8fd0f0"/>
<path d="M1237.9 212.4 V216.5" stroke="#8fd0f0" stroke-width="0.9"/>
<rect x="1236.7" y="215" width="2.4" height="1" fill="#8fd0f0"/>
<path d="M1240.4 211.1 V216.3" stroke="#ee8478" stroke-width="0.9"/>
<rect x="1239.3" y="211.5" width="2.2" height="4" fill="#3a2a30" stroke="#ee8478" stroke-width="0.8"/>
<path d="M1242.9 207.1 V213.2" stroke="#ee8478" stroke-width="0.9"/>
<rect x="1241.8" y="209.7" width="2.2" height="1.8" fill="#3a2a30" stroke="#ee8478" stroke-width="0.8"/>
<path d="M1245.5 207.6 V212.3" stroke="#8fd0f0" stroke-width="0.9"/>
<rect x="1244.3" y="209.7" width="2.4" height="1" fill="#8fd0f0"/>
<path d="M1248 206.9 V213.1" stroke="#ee8478" stroke-width="0.9"/>
<rect x="1246.9" y="209.7" width="2.2" height="1" fill="#3a2a30" stroke="#ee8478" stroke-width="0.8"/>
<path d="M1250.6 204.4 V210.2" stroke="#ee8478" stroke-width="0.9"/>
<rect x="1249.5" y="205" width="2.2" height="4.7" fill="#3a2a30" stroke="#ee8478" stroke-width="0.8"/>
<path d="M1253.1 203.4 V205.5" stroke="#8fd0f0" stroke-width="0.9"/>
<rect x="1251.9" y="205" width="2.4" height="1" fill="#8fd0f0"/>
<path d="M1255.6 196 V206.1" stroke="#ee8478" stroke-width="0.9"/>
<rect x="1254.5" y="197.3" width="2.2" height="7.8" fill="#3a2a30" stroke="#ee8478" stroke-width="0.8"/>
<path d="M1258.2 196.6 V201.5" stroke="#8fd0f0" stroke-width="0.9"/>
<rect x="1257" y="197.3" width="2.4" height="1.3" fill="#8fd0f0"/>
<path d="M1260.7 194.1 V199.6" stroke="#ee8478" stroke-width="0.9"/>
<rect x="1259.6" y="195.2" width="2.2" height="3.5" fill="#3a2a30" stroke="#ee8478" stroke-width="0.8"/>
<path d="M1263.3 189.4 V196.3" stroke="#ee8478" stroke-width="0.9"/>
<rect x="1262.2" y="190.7" width="2.2" height="4.5" fill="#3a2a30" stroke="#ee8478" stroke-width="0.8"/>
<path d="M1265.8 181 V191.9" stroke="#ee8478" stroke-width="0.9"/>
<rect x="1264.7" y="183.5" width="2.2" height="7.2" fill="#3a2a30" stroke="#ee8478" stroke-width="0.8"/>
<path d="M1268.3 172.7 V184.1" stroke="#ee8478" stroke-width="0.9"/>
<rect x="1267.2" y="174.7" width="2.2" height="8.8" fill="#3a2a30" stroke="#ee8478" stroke-width="0.8"/>
<path d="M1270.9 171.8 V179.2" stroke="#8fd0f0" stroke-width="0.9"/>
<rect x="1269.7" y="174.7" width="2.4" height="3.3" fill="#8fd0f0"/>
<path d="M1273.4 177 V180.6" stroke="#8fd0f0" stroke-width="0.9"/>
<rect x="1272.2" y="178" width="2.4" height="1" fill="#8fd0f0"/>
<path d="M1276 175.6 V179.6" stroke="#ee8478" stroke-width="0.9"/>
<rect x="1274.9" y="176" width="2.2" height="2.8" fill="#3a2a30" stroke="#ee8478" stroke-width="0.8"/>
<path d="M1278.5 175.2 V178.4" stroke="#8fd0f0" stroke-width="0.9"/>
<rect x="1277.3" y="176" width="2.4" height="1.2" fill="#8fd0f0"/>
<path d="M1281 176 V183.8" stroke="#8fd0f0" stroke-width="0.9"/>
<rect x="1279.8" y="177.2" width="2.4" height="5.5" fill="#8fd0f0"/>
<path d="M1283.6 181.5 V188" stroke="#8fd0f0" stroke-width="0.9"/>
<rect x="1282.4" y="182.7" width="2.4" height="4.6" fill="#8fd0f0"/>
<path d="M1286.1 186.9 V194.6" stroke="#8fd0f0" stroke-width="0.9"/>
<rect x="1284.9" y="187.3" width="2.4" height="6.8" fill="#8fd0f0"/>
<path d="M1288.7 193.3 V196.1" stroke="#8fd0f0" stroke-width="0.9"/>
<rect x="1287.5" y="194.1" width="2.4" height="1" fill="#8fd0f0"/>
<path d="M1291.2 190.7 V195.2" stroke="#ee8478" stroke-width="0.9"/>
<rect x="1290.1" y="191.7" width="2.2" height="2.6" fill="#3a2a30" stroke="#ee8478" stroke-width="0.8"/>
<path d="M1293.7 189.6 V195.1" stroke="#8fd0f0" stroke-width="0.9"/>
<rect x="1292.5" y="191.7" width="2.4" height="2.2" fill="#8fd0f0"/>
<path d="M1296.3 193 V200.9" stroke="#8fd0f0" stroke-width="0.9"/>
<rect x="1295.1" y="193.9" width="2.4" height="5.2" fill="#8fd0f0"/>
<path d="M1298.8 193.6 V201.1" stroke="#ee8478" stroke-width="0.9"/>
<rect x="1297.7" y="195.3" width="2.2" height="3.9" fill="#3a2a30" stroke="#ee8478" stroke-width="0.8"/>
<path d="M1301.4 194.8 V202.7" stroke="#8fd0f0" stroke-width="0.9"/>
<rect x="1300.2" y="195.3" width="2.4" height="4.1" fill="#8fd0f0"/>
<path d="M1303.9 198.6 V203.5" stroke="#8fd0f0" stroke-width="0.9"/>
<rect x="1302.7" y="199.4" width="2.4" height="3" fill="#8fd0f0"/>
<path d="M1306.4 201.8 V204.9" stroke="#8fd0f0" stroke-width="0.9"/>
<rect x="1305.2" y="202.4" width="2.4" height="2" fill="#8fd0f0"/>
<path d="M1309 203.4 V205.3" stroke="#ee8478" stroke-width="0.9"/>
<rect x="1307.9" y="204.1" width="2.2" height="1" fill="#3a2a30" stroke="#ee8478" stroke-width="0.8"/>
<path d="M1311.5 197 V205.9" stroke="#ee8478" stroke-width="0.9"/>
<rect x="1310.4" y="198.8" width="2.2" height="5.3" fill="#3a2a30" stroke="#ee8478" stroke-width="0.8"/>
<path d="M1314.1 196 V200.5" stroke="#ee8478" stroke-width="0.9"/>
<rect x="1313" y="198.1" width="2.2" height="1" fill="#3a2a30" stroke="#ee8478" stroke-width="0.8"/>
<path d="M1316.6 189.6 V198.8" stroke="#ee8478" stroke-width="0.9"/>
<rect x="1315.5" y="191.6" width="2.2" height="6.5" fill="#3a2a30" stroke="#ee8478" stroke-width="0.8"/>
<path d="M1319.1 190.6 V193.2" stroke="#ee8478" stroke-width="0.9"/>
<rect x="1318" y="191.4" width="2.2" height="1" fill="#3a2a30" stroke="#ee8478" stroke-width="0.8"/>
<path d="M1321.7 190.7 V194.5" stroke="#8fd0f0" stroke-width="0.9"/>
<rect x="1320.5" y="191.4" width="2.4" height="1" fill="#8fd0f0"/>
<path d="M1324.2 191.3 V197.2" stroke="#8fd0f0" stroke-width="0.9"/>
<rect x="1323" y="192.3" width="2.4" height="4.3" fill="#8fd0f0"/>
<path d="M1326.8 195 V197.2" stroke="#ee8478" stroke-width="0.9"/>
<rect x="1325.7" y="195.9" width="2.2" height="1" fill="#3a2a30" stroke="#ee8478" stroke-width="0.8"/>
<path d="M1329.3 195 V196.8" stroke="#8fd0f0" stroke-width="0.9"/>
<rect x="1328.1" y="195.9" width="2.4" height="1" fill="#8fd0f0"/>
<path d="M1331.8 195.6 V198.7" stroke="#ee8478" stroke-width="0.9"/>
<rect x="1330.7" y="196" width="2.2" height="1" fill="#3a2a30" stroke="#ee8478" stroke-width="0.8"/>
<path d="M1334.4 193.8 V198.8" stroke="#8fd0f0" stroke-width="0.9"/>
<rect x="1333.2" y="196" width="2.4" height="2.4" fill="#8fd0f0"/>
<path d="M1336.9 196.1 V199.5" stroke="#ee8478" stroke-width="0.9"/>
<rect x="1335.8" y="196.6" width="2.2" height="1.8" fill="#3a2a30" stroke="#ee8478" stroke-width="0.8"/>
<path d="M1339.5 194 V197.6" stroke="#ee8478" stroke-width="0.9"/>
<rect x="1338.4" y="195" width="2.2" height="1.6" fill="#3a2a30" stroke="#ee8478" stroke-width="0.8"/>
<path d="M1342 194.6 V199.1" stroke="#8fd0f0" stroke-width="0.9"/>
<rect x="1340.8" y="195" width="2.4" height="3" fill="#8fd0f0"/>
<rect x="465.5" y="283" width="2" height="84" fill="#3a2a30" stroke="#ee8478" stroke-width="0.9"/><path d="M466.5 367V394" stroke="#ee8478" stroke-width="1"/>
<path d="M1192.5 150V172" stroke="#b0b8c0" stroke-width="1.2"/><rect x="1196" y="184" width="2.4" height="22" fill="#8fd0f0"/>
<polyline points="72,399.2 74.5,399.5 77.1,399.7 79.6,400 82.2,400.5 84.7,401 87.2,401.6 89.8,402.2 92.3,403 94.9,403.7 97.4,404.2 99.9,404.5 102.5,404.6 105,404.5 107.6,404.2 110.1,403.9 112.6,403.6 115.2,403.2 117.7,402.7 120.3,402.1 122.8,401.4 125.3,400.8 127.9,400.4 130.4,400.3 133,400.5 135.5,400.9 138,401.4 140.6,401.9 143.1,402.3 145.7,402.8 148.2,403.1 150.7,403.4 153.3,403.6 155.8,403.8 158.4,404 160.9,404.1 163.4,404.2 166,404.2 168.5,404.3 171.1,404.4 173.6,404.5 176.1,404.4 178.7,404.3 181.2,404.1 183.8,403.8 186.3,403.6 188.8,403.3 191.4,403.1 193.9,403 196.5,402.8 199,402.8 201.5,403.1 204.1,403.6 206.6,404.4 209.2,405.3 211.7,406 214.2,406.6 216.8,407.1 219.3,407.7 221.9,408.1 224.4,408.5 226.9,408.7 229.5,408.7 232,408.4 234.6,407.9 237.1,407.2 239.6,406.4 242.2,405.7 244.7,405.1 247.3,404.5 249.8,404 252.3,403.6 254.9,403.1 257.4,402.7 260,402.2 262.5,401.6 265,400.8 267.6,399.9 270.1,398.7 272.7,397.4 275.2,396 277.7,394.7 280.3,393.5 282.8,392.6 285.4,391.9 287.9,391.4 290.4,391.1 293,391.1 295.5,391.5 298.1,392.2 300.6,393.2 303.1,394.5 305.7,395.7 308.2,396.7 310.8,397.4 313.3,396.7 315.8,395.2 318.4,394.3 320.9,394.5 323.5,395.8 326,397.7 328.5,398.8 331.1,397.9 333.6,396.3 336.2,393.6 338.7,390.7 341.2,388.5 343.8,386.6 346.3,385.3 348.9,384.1 351.4,382.7 353.9,381.1 356.5,379.7 359,378 361.6,375.3 364.1,371.7 366.6,368.1 369.2,365 371.7,363.1 374.3,362.7 376.8,363 379.3,364.2 381.9,366.1 384.4,368.6 387,370.6 389.5,371.7 392,372 394.6,371.6 397.1,371.6 399.7,371.9 402.2,372.5 404.7,373.1 407.3,373.6 409.8,374.1 412.4,374.6 414.9,374.8 417.4,374.6 420,374 422.5,372.8 425.1,371.4 427.6,370 430.1,368.9 432.7,368.3 435.2,368 437.8,368.1 440.3,368.3 442.8,368.4 445.4,368.5 447.9,368.6 450.5,368.6 453,368.6 455.5,368.5 458.1,368 460.6,367.1 463.2,364.4 465.7,347.4 468.2,325.3 470.8,301.8 473.3,279.2 475.9,272 478.4,269 480.9,265.2 483.5,258.5 486,250.5 488.6,244 491.1,240.9 493.6,240.7 496.2,238.9 498.7,236.3 501.3,232.4 503.8,229.1 506.3,227.4 508.9,225.8 511.4,224.3 514,222.7 516.5,221 519,219.3 521.6,217.4 524.1,215.8 526.7,214.7 529.2,214.9 531.7,216.5 534.3,219.1 536.8,222 539.4,222.8 541.9,221.1 544.4,216.8 547,208.3 549.5,200.5 552.1,194.5 554.6,190.6 557.1,190.1 559.7,189.8 562.2,188.2 564.8,186.1 567.3,184.4 569.8,183.2 572.4,183.2 574.9,183.5 577.5,184 580,184.9 582.5,185.7 585.1,186.1 587.6,186 590.2,184.5 592.7,181.9 595.2,178.8 597.8,175.3 600.3,172.4 602.9,170.3 605.4,169 607.9,168.3 610.5,168.3 613,168.8 615.6,169.4 618.1,169.4 620.6,168.7 623.2,167.3 625.7,166 628.3,165.7 630.8,166.5 633.3,167.9 635.9,169.2 638.4,170 641,170.5 643.5,170.9 646,170.8 648.6,169.6 651.1,167.9 653.7,165.9 656.2,164 658.7,162.4 661.3,160.4 663.8,158.4 666.4,156.2 668.9,154.5 671.4,153.3 674,152.3 676.5,151.4 679.1,150.7 681.6,150 684.1,149.3 686.7,149.4 689.2,150.3 691.8,151.8 694.3,153.7 696.8,155.4 699.4,156.9 701.9,158.2 704.5,159.3 707,160.2 709.5,160.6 712.1,160.6 714.6,160.5 717.2,160.2 719.7,160.1 722.2,160.4 724.8,161.1 727.3,162 729.9,162.7 732.4,163.2 734.9,163.4 737.5,163.6 740,163.8 742.6,164 745.1,163.4 747.6,161.6 750.2,159.6 752.7,157.3 755.3,155.9 757.8,155.5 760.3,155.3 762.9,155.3 765.4,155.4 768,155.6 770.5,156.1 773,156.7 775.6,157.5 778.1,158.6 780.7,160 783.2,161.5 785.7,163.2 788.3,164.7 790.8,166.3 793.4,167.6 795.9,168.9 798.4,170.1 801,170.9 803.5,171.3 806.1,171.2 808.6,170.8 811.1,170.2 813.7,169.5 816.2,168.9 818.8,168.6 821.3,168.8 823.8,169.4 826.4,170.1 828.9,170.3 831.5,170 834,169.2 836.5,168.3 839.1,167.7 841.6,167.3 844.2,167.2 846.7,167.2 849.2,167.2 851.8,167.1 854.3,167 856.9,166.6 859.4,165.7 861.9,164.4 864.5,162.6 867,160.7 869.6,159.2 872.1,157.9 874.6,156.9 877.2,156.2 879.7,155.7 882.3,155.9 884.8,156.7 887.3,157.8 889.9,158.7 892.4,158.9 895,158.4 897.5,157.5 900,156.6 902.6,156 905.1,155.4 907.7,155 910.2,154.7 912.7,154.6 915.3,154.5 917.8,154.3 920.4,154.1 922.9,153.7 925.4,153.3 928,153.6 930.5,154.9 933.1,156.4 935.6,158.1 938.1,159.1 940.7,159.3 943.2,159.5 945.8,159.7 948.3,159.9 950.8,160.2 953.4,160.4 955.9,160.9 958.5,161.7 961,162.8 963.5,163.9 966.1,164.7 968.6,165.2 971.2,165.4 973.7,165.5 976.2,165.7 978.8,165.8 981.3,166.1 983.9,166.3 986.4,166.6 988.9,167 991.5,167.6 994,168.5 996.6,169.6 999.1,170.9 1001.6,172.2 1004.2,173.1 1006.7,173.4 1009.3,172.9 1011.8,171.9 1014.3,171 1016.9,170.6 1019.4,170.4 1022,169.9 1024.5,169 1027,167.5 1029.6,166.1 1032.1,164.8 1034.7,164.3 1037.2,164.5 1039.7,165.4 1042.3,166.7 1044.8,167.7 1047.4,168.5 1049.9,169.1 1052.4,169.9 1055,171.2 1057.5,173.7 1060.1,177 1062.6,181 1065.1,185.2 1067.7,189.1 1070.2,193.2 1072.8,196.8 1075.3,199.5 1077.8,200.7 1080.4,200.2 1082.9,198.9 1085.5,197.1 1088,195.5 1090.5,194.1 1093.1,192.8 1095.6,191.7 1098.2,191 1100.7,190.6 1103.2,190.5 1105.8,190.7 1108.3,190.5 1110.9,190.1 1113.4,189.4 1115.9,188.5 1118.5,187.5 1121,186.3 1123.6,185.1 1126.1,184 1128.6,183 1131.2,182.2 1133.7,181.3 1136.3,180.5 1138.8,179.6 1141.3,178.9 1143.9,178.4 1146.4,178.3 1149,178.7 1151.5,179.7 1154,181.1 1156.6,183.2 1159.1,185.2 1161.7,187 1164.2,188.3 1166.7,188.5 1169.3,187.9 1171.8,186.6 1174.4,184.5 1176.9,182 1179.4,179.4 1182,176.8 1184.5,174.6 1187.1,172.8 1189.6,171.8 1192.1,172.3 1194.7,177 1197.2,185.2 1199.8,192.1 1202.3,195.4 1204.8,194.2 1207.4,190.1 1209.9,188.4 1212.5,190 1215,192.7 1217.5,195.4 1220.1,197.2 1222.6,198 1225.2,198.3 1227.7,198.6 1230.2,199.2 1232.8,200.4 1235.3,203.8 1237.9,207.5 1240.4,210.6 1242.9,212.7 1245.5,212.1 1248,210.6 1250.6,208.6 1253.1,206.4 1255.6,204.1 1258.2,201.5 1260.7,198.1 1263.3,193.6 1265.8,188.5 1268.3,183.7 1270.9,180 1273.4,178.1 1276,177.3 1278.5,177.3 1281,178.4 1283.6,180.5 1286.1,183.7 1288.7,187.5 1291.2,190.7 1293.7,193.1 1296.3,194.6 1298.8,195.7 1301.4,197 1303.9,198.7 1306.4,200.6 1309,201.5 1311.5,200.4 1314.1,198.4 1316.6,195.8 1319.1,194.2 1321.7,194.1 1324.2,194.4 1326.8,195.1 1329.3,195.6 1331.8,196.4 1334.4,197.3 1336.9,198 1339.5,198.3 1342,198.1" fill="none" stroke="#a6dc72" stroke-width="1.0" stroke-linejoin="round" opacity="0.9"/>
<clipPath id="plot"><rect x="70" y="62" width="1298" height="430"/></clipPath><g clip-path="url(#plot)">
<path d="M74.5 397.9 V400.6" stroke="#ee8478" stroke-width="1"/>
<rect x="71.1" y="391.9" width="6" height="6" fill="#f07a72"/>
<text x="72.4" y="375.3" fill="#f0857a" font-size="10.5" text-anchor="start" letter-spacing="1.0" >09:40</text>
<text x="72.4" y="389" fill="#f0857a" font-size="10.5" text-anchor="start" letter-spacing="1.0" >1.07017</text>
<path d="M123.5 397.3 V401.4" stroke="#ee8478" stroke-width="1"/>
<rect x="119.6" y="391.3" width="6" height="6" fill="#f07a72"/>
<text x="120.9" y="374.7" fill="#f0857a" font-size="10.5" text-anchor="start" letter-spacing="1.0" >11:15</text>
<text x="120.9" y="388.4" fill="#f0857a" font-size="10.5" text-anchor="start" letter-spacing="1.0" >1.07020</text>
<path d="M194.5 400.4 V403.7" stroke="#ee8478" stroke-width="1"/>
<rect x="190.9" y="394.4" width="6" height="6" fill="#f07a72"/>
<text x="192.2" y="377.8" fill="#f0857a" font-size="10.5" text-anchor="start" letter-spacing="1.0" >13:35</text>
<text x="192.2" y="391.5" fill="#f0857a" font-size="10.5" text-anchor="start" letter-spacing="1.0" >1.06996</text>
<path d="M288.5 387.3 V392" stroke="#ee8478" stroke-width="1"/>
<rect x="284.8" y="381.3" width="6" height="6" fill="#f07a72"/>
<text x="286.1" y="364.7" fill="#f0857a" font-size="10.5" text-anchor="start" letter-spacing="1.0" >16:40</text>
<text x="286.1" y="378.4" fill="#f0857a" font-size="10.5" text-anchor="start" letter-spacing="1.0" >1.07093</text>
<path d="M372.5 359 V363.1" stroke="#ee8478" stroke-width="1"/>
<rect x="368.8" y="353" width="6" height="6" fill="#f07a72"/>
<text x="370.1" y="336.4" fill="#f0857a" font-size="10.5" text-anchor="start" letter-spacing="1.0" >19:25</text>
<text x="370.1" y="350.1" fill="#f0857a" font-size="10.5" text-anchor="start" letter-spacing="1.0" >1.07303</text>
<path d="M624.5 162.2 V164.8" stroke="#ee8478" stroke-width="1"/>
<rect x="621.3" y="156.2" width="6" height="6" fill="#f07a72"/>
<text x="622.6" y="139.6" fill="#f0857a" font-size="10.5" text-anchor="start" letter-spacing="1.0" >03:40</text>
<text x="622.6" y="153.3" fill="#f0857a" font-size="10.5" text-anchor="start" letter-spacing="1.0" >1.08766</text>
<path d="M685.5 147.4 V150" stroke="#ee8478" stroke-width="1"/>
<rect x="682.3" y="141.4" width="6" height="6" fill="#f07a72"/>
<text x="683.6" y="124.8" fill="#f0857a" font-size="10.5" text-anchor="start" letter-spacing="1.0" >05:40</text>
<text x="683.6" y="138.5" fill="#f0857a" font-size="10.5" text-anchor="start" letter-spacing="1.0" >1.08875</text>
<path d="M756.5 154.1 V156.3" stroke="#ee8478" stroke-width="1"/>
<rect x="753.4" y="148.1" width="6" height="6" fill="#f07a72"/>
<text x="754.7" y="131.5" fill="#f0857a" font-size="10.5" text-anchor="start" letter-spacing="1.0" >08:15</text>
<text x="754.7" y="145.2" fill="#f0857a" font-size="10.5" text-anchor="start" letter-spacing="1.0" >1.08825</text>
<path d="M924.5 151.6 V153.9" stroke="#ee8478" stroke-width="1"/>
<rect x="921.1" y="145.6" width="6" height="6" fill="#f07a72"/>
<text x="922.4" y="129" fill="#f0857a" font-size="10.5" text-anchor="start" letter-spacing="1.0" >13:45</text>
<text x="922.4" y="142.7" fill="#f0857a" font-size="10.5" text-anchor="start" letter-spacing="1.0" >1.08840</text>
<path d="M1029.5 158.2 V165.6" stroke="#ee8478" stroke-width="1"/>
<rect x="1025.8" y="152.2" width="6" height="6" fill="#f07a72"/>
<text x="1027.1" y="135.6" fill="#f0857a" font-size="10.5" text-anchor="start" letter-spacing="1.0" >17:10</text>
<text x="1027.1" y="149.3" fill="#f0857a" font-size="10.5" text-anchor="start" letter-spacing="1.0" >1.08794</text>
<path d="M1144.5 173 V179.2" stroke="#ee8478" stroke-width="1"/>
<rect x="1140.8" y="167" width="6" height="6" fill="#f07a72"/>
<text x="1142.1" y="150.4" fill="#f0857a" font-size="10.5" text-anchor="start" letter-spacing="1.0" >20:55</text>
<text x="1142.1" y="164.1" fill="#f0857a" font-size="10.5" text-anchor="start" letter-spacing="1.0" >1.08681</text>
<path d="M1192.5 149.9 V175" stroke="#ee8478" stroke-width="1"/>
<rect x="1189.2" y="143.9" width="6" height="6" fill="#f07a72"/>
<text x="1190.5" y="127.3" fill="#f0857a" font-size="10.5" text-anchor="start" letter-spacing="1.0" >22:30</text>
<text x="1190.5" y="141" fill="#f0857a" font-size="10.5" text-anchor="start" letter-spacing="1.0" >1.08855</text>
<path d="M1268.5 172.4 V178.7" stroke="#ee8478" stroke-width="1"/>
<rect x="1265" y="166.4" width="6" height="6" fill="#f07a72"/>
<text x="1266.3" y="149.8" fill="#f0857a" font-size="10.5" text-anchor="start" letter-spacing="1.0" >01:00</text>
<text x="1266.3" y="163.5" fill="#f0857a" font-size="10.5" text-anchor="start" letter-spacing="1.0" >1.08685</text>
<path d="M1316.5 189 V194" stroke="#ee8478" stroke-width="1"/>
<rect x="1313.5" y="183" width="6" height="6" fill="#f07a72"/>
<text x="1314.8" y="166.4" fill="#f0857a" font-size="10.5" text-anchor="start" letter-spacing="1.0" >02:35</text>
<text x="1314.8" y="180.1" fill="#f0857a" font-size="10.5" text-anchor="start" letter-spacing="1.0" >1.08560</text>
<path d="M95.5 403.6 V407" stroke="#8fd0f0" stroke-width="1"/>
<rect x="91.6" y="407" width="6" height="6" fill="#86cdf0"/>
<text x="93.6" y="424.6" fill="#9cd6f2" font-size="10.5" text-anchor="start" letter-spacing="1.0" >10:20</text>
<text x="93.6" y="439" fill="#9cd6f2" font-size="10.5" text-anchor="start" letter-spacing="1.0" >1.06946</text>
<path d="M151.5 402.7 V406.5" stroke="#8fd0f0" stroke-width="1"/>
<rect x="147.6" y="406.5" width="6" height="6" fill="#86cdf0"/>
<text x="149.6" y="424.1" fill="#9cd6f2" font-size="10.5" text-anchor="start" letter-spacing="1.0" >12:10</text>
<text x="149.6" y="438.5" fill="#9cd6f2" font-size="10.5" text-anchor="start" letter-spacing="1.0" >1.06953</text>
<path d="M227.5 407.8 V409.5" stroke="#8fd0f0" stroke-width="1"/>
<rect x="224" y="409.5" width="6" height="6" fill="#86cdf0"/>
<text x="226" y="427.1" fill="#9cd6f2" font-size="10.5" text-anchor="start" letter-spacing="1.0" >14:40</text>
<text x="226" y="441.5" fill="#9cd6f2" font-size="10.5" text-anchor="start" letter-spacing="1.0" >1.06928</text>
<path d="M329.5 396.9 V405" stroke="#8fd0f0" stroke-width="1"/>
<rect x="325.8" y="405" width="6" height="6" fill="#86cdf0"/>
<text x="327.8" y="422.6" fill="#9cd6f2" font-size="10.5" text-anchor="start" letter-spacing="1.0" >18:00</text>
<text x="327.8" y="437" fill="#9cd6f2" font-size="10.5" text-anchor="start" letter-spacing="1.0" >1.06959</text>
<path d="M466.5 287.1 V393.7" stroke="#8fd0f0" stroke-width="1"/>
<rect x="463.5" y="393.7" width="6" height="6" fill="#86cdf0"/>
<text x="465.5" y="411.3" fill="#9cd6f2" font-size="10.5" text-anchor="start" letter-spacing="1.0" >22:30</text>
<text x="465.5" y="425.7" fill="#9cd6f2" font-size="10.5" text-anchor="start" letter-spacing="1.0" >1.07045</text>
<path d="M647.5 167.8 V174" stroke="#8fd0f0" stroke-width="1"/>
<rect x="644" y="174" width="6" height="6" fill="#86cdf0"/>
<text x="646" y="191.6" fill="#9cd6f2" font-size="10.5" text-anchor="start" letter-spacing="1.0" >04:25</text>
<text x="646" y="206" fill="#9cd6f2" font-size="10.5" text-anchor="start" letter-spacing="1.0" >1.08674</text>
<path d="M728.5 162.2 V169.7" stroke="#8fd0f0" stroke-width="1"/>
<rect x="725.5" y="169.7" width="6" height="6" fill="#86cdf0"/>
<text x="727.5" y="187.3" fill="#9cd6f2" font-size="10.5" text-anchor="start" letter-spacing="1.0" >07:20</text>
<text x="727.5" y="201.7" fill="#9cd6f2" font-size="10.5" text-anchor="start" letter-spacing="1.0" >1.08705</text>
<path d="M802.5 170.6 V176.6" stroke="#8fd0f0" stroke-width="1"/>
<rect x="798.8" y="176.6" width="6" height="6" fill="#86cdf0"/>
<text x="800.8" y="194.2" fill="#9cd6f2" font-size="10.5" text-anchor="start" letter-spacing="1.0" >09:45</text>
<text x="800.8" y="208.6" fill="#9cd6f2" font-size="10.5" text-anchor="start" letter-spacing="1.0" >1.08653</text>
<path d="M1003.5 173.7 V177.8" stroke="#8fd0f0" stroke-width="1"/>
<rect x="1000.3" y="177.8" width="6" height="6" fill="#86cdf0"/>
<text x="1002.3" y="195.4" fill="#9cd6f2" font-size="10.5" text-anchor="start" letter-spacing="1.0" >16:20</text>
<text x="1002.3" y="209.8" fill="#9cd6f2" font-size="10.5" text-anchor="start" letter-spacing="1.0" >1.08644</text>
<path d="M1077.5 199.8 V205.3" stroke="#8fd0f0" stroke-width="1"/>
<rect x="1074" y="205.3" width="6" height="6" fill="#86cdf0"/>
<text x="1076" y="222.9" fill="#9cd6f2" font-size="10.5" text-anchor="start" letter-spacing="1.0" >18:45</text>
<text x="1076" y="237.3" fill="#9cd6f2" font-size="10.5" text-anchor="start" letter-spacing="1.0" >1.08439</text>
<path d="M1161.5 187.5 V191.5" stroke="#8fd0f0" stroke-width="1"/>
<rect x="1158" y="191.5" width="6" height="6" fill="#86cdf0"/>
<text x="1160" y="209.1" fill="#9cd6f2" font-size="10.5" text-anchor="start" letter-spacing="1.0" >21:30</text>
<text x="1160" y="223.5" fill="#9cd6f2" font-size="10.5" text-anchor="start" letter-spacing="1.0" >1.08542</text>
<path d="M1235.5 208.9 V222" stroke="#8fd0f0" stroke-width="1"/>
<rect x="1232" y="222" width="6" height="6" fill="#86cdf0"/>
<text x="1234" y="239.6" fill="#9cd6f2" font-size="10.5" text-anchor="start" letter-spacing="1.0" >23:55</text>
<text x="1234" y="254" fill="#9cd6f2" font-size="10.5" text-anchor="start" letter-spacing="1.0" >1.08316</text>
<path d="M1306.5 202.5 V206.2" stroke="#8fd0f0" stroke-width="1"/>
<rect x="1303.3" y="206.2" width="6" height="6" fill="#86cdf0"/>
<text x="1305.3" y="223.8" fill="#9cd6f2" font-size="10.5" text-anchor="start" letter-spacing="1.0" >02:15</text>
<text x="1305.3" y="238.2" fill="#9cd6f2" font-size="10.5" text-anchor="start" letter-spacing="1.0" >1.08433</text>
<path d="M1337.5 197.5 V201.4" stroke="#8fd0f0" stroke-width="1"/>
<rect x="1333.8" y="201.4" width="6" height="6" fill="#86cdf0"/>
<text x="1335.8" y="219" fill="#9cd6f2" font-size="10.5" text-anchor="start" letter-spacing="1.0" >03:15</text>
<text x="1335.8" y="233.4" fill="#9cd6f2" font-size="10.5" text-anchor="start" letter-spacing="1.0" >1.08406</text>
</g>
<path d="M121 402.5 H127 Q130 402.5 130 406 V413" stroke="#19d6ee" stroke-width="2.2" fill="none"/><path d="M126.5 411.5 L130 415.5 L133.5 411.5Z" fill="#19d6ee" stroke="#19d6ee" stroke-width="1"/>
<rect x="72" y="557" width="1.6" height="1" fill="#5a3cc8"/>
<rect x="74.5" y="557" width="1.6" height="0.7" fill="#5a3cc8"/>
<rect x="94.5" y="557" width="1.6" height="0.9" fill="#5a3cc8"/>
<rect x="97" y="557" width="1.6" height="1.2" fill="#5a3cc8"/>
<rect x="99.5" y="557" width="1.6" height="1" fill="#5a3cc8"/>
<rect x="102" y="557" width="1.6" height="0.8" fill="#5a3cc8"/>
<rect x="117" y="556.3" width="1.6" height="0.7" fill="#c32fb0"/>
<rect x="119.5" y="556.1" width="1.6" height="0.9" fill="#c32fb0"/>
<rect x="122" y="555.9" width="1.6" height="1.1" fill="#c32fb0"/>
<rect x="124.5" y="555.6" width="1.6" height="1.4" fill="#c32fb0"/>
<rect x="127" y="555.6" width="1.6" height="1.4" fill="#c32fb0"/>
<rect x="129.5" y="555.8" width="1.6" height="1.2" fill="#c32fb0"/>
<rect x="132" y="555.9" width="1.6" height="1.1" fill="#c32fb0"/>
<rect x="134.5" y="556.1" width="1.6" height="0.9" fill="#c32fb0"/>
<rect x="137" y="556.3" width="1.6" height="0.7" fill="#c32fb0"/>
<rect x="169.5" y="556.4" width="1.6" height="0.6" fill="#c32fb0"/>
<rect x="172" y="556.2" width="1.6" height="0.8" fill="#c32fb0"/>
<rect x="174.5" y="555.9" width="1.6" height="1.1" fill="#c32fb0"/>
<rect x="177" y="555.7" width="1.6" height="1.3" fill="#c32fb0"/>
<rect x="179.5" y="555.5" width="1.6" height="1.5" fill="#c32fb0"/>
<rect x="182" y="555.3" width="1.6" height="1.7" fill="#c32fb0"/>
<rect x="184.5" y="555" width="1.6" height="2" fill="#c32fb0"/>
<rect x="187" y="554.8" width="1.6" height="2.2" fill="#c32fb0"/>
<rect x="189.5" y="554.6" width="1.6" height="2.4" fill="#c32fb0"/>
<rect x="192" y="554.5" width="1.6" height="2.5" fill="#c32fb0"/>
<rect x="194.5" y="554.8" width="1.6" height="2.2" fill="#c32fb0"/>
<rect x="197" y="555.2" width="1.6" height="1.8" fill="#c32fb0"/>
<rect x="199.5" y="555.5" width="1.6" height="1.5" fill="#c32fb0"/>
<rect x="202" y="555.8" width="1.6" height="1.2" fill="#c32fb0"/>
<rect x="204.5" y="556.2" width="1.6" height="0.8" fill="#c32fb0"/>
<rect x="217" y="557" width="1.6" height="0.8" fill="#5a3cc8"/>
<rect x="219.5" y="557" width="1.6" height="1.1" fill="#5a3cc8"/>
<rect x="222" y="557" width="1.6" height="1" fill="#5a3cc8"/>
<rect x="224.5" y="557" width="1.6" height="0.9" fill="#5a3cc8"/>
<rect x="227" y="557" width="1.6" height="0.8" fill="#5a3cc8"/>
<rect x="229.5" y="557" width="1.6" height="0.7" fill="#5a3cc8"/>
<rect x="232" y="557" width="1.6" height="0.6" fill="#5a3cc8"/>
<rect x="264.5" y="556.4" width="1.6" height="0.6" fill="#c32fb0"/>
<rect x="267" y="556.3" width="1.6" height="0.7" fill="#c32fb0"/>
<rect x="269.5" y="556.2" width="1.6" height="0.8" fill="#c32fb0"/>
<rect x="272" y="556.2" width="1.6" height="0.8" fill="#c32fb0"/>
<rect x="274.5" y="556.1" width="1.6" height="0.9" fill="#c32fb0"/>
<rect x="277" y="556" width="1.6" height="1" fill="#c32fb0"/>
<rect x="279.5" y="555.9" width="1.6" height="1.1" fill="#c32fb0"/>
<rect x="282" y="555.9" width="1.6" height="1.1" fill="#c32fb0"/>
<rect x="284.5" y="555.8" width="1.6" height="1.2" fill="#c32fb0"/>
<rect x="287" y="555.8" width="1.6" height="1.2" fill="#c32fb0"/>
<rect x="289.5" y="555.8" width="1.6" height="1.2" fill="#c32fb0"/>
<rect x="292" y="555.8" width="1.6" height="1.2" fill="#c32fb0"/>
<rect x="294.5" y="555.7" width="1.6" height="1.3" fill="#c32fb0"/>
<rect x="297" y="555.7" width="1.6" height="1.3" fill="#c32fb0"/>
<rect x="299.5" y="555.7" width="1.6" height="1.3" fill="#c32fb0"/>
<rect x="302" y="556.2" width="1.6" height="0.8" fill="#c32fb0"/>
<rect x="307" y="557" width="1.6" height="0.7" fill="#5a3cc8"/>
<rect x="309.5" y="557" width="1.6" height="1.4" fill="#5a3cc8"/>
<rect x="312" y="557" width="1.6" height="2.1" fill="#5a3cc8"/>
<rect x="319.5" y="557" width="1.6" height="0.7" fill="#5a3cc8"/>
<rect x="322" y="557" width="1.6" height="1.3" fill="#5a3cc8"/>
<rect x="324.5" y="557" width="1.6" height="1.8" fill="#5a3cc8"/>
<rect x="327" y="557" width="1.6" height="2.4" fill="#5a3cc8"/>
<rect x="329.5" y="557" width="1.6" height="1.6" fill="#5a3cc8"/>
<rect x="334.5" y="554.9" width="1.6" height="2.1" fill="#c32fb0"/>
<rect x="337" y="553.1" width="1.6" height="3.9" fill="#c32fb0"/>
<rect x="339.5" y="552.5" width="1.6" height="4.5" fill="#c32fb0"/>
<rect x="342" y="552.7" width="1.6" height="4.3" fill="#c32fb0"/>
<rect x="344.5" y="553" width="1.6" height="4" fill="#c32fb0"/>
<rect x="347" y="553.2" width="1.6" height="3.8" fill="#c32fb0"/>
<rect x="349.5" y="553.4" width="1.6" height="3.6" fill="#c32fb0"/>
<rect x="352" y="553.4" width="1.6" height="3.6" fill="#c32fb0"/>
<rect x="354.5" y="553.3" width="1.6" height="3.7" fill="#c32fb0"/>
<rect x="357" y="553.2" width="1.6" height="3.8" fill="#c32fb0"/>
<rect x="359.5" y="553.1" width="1.6" height="3.9" fill="#c32fb0"/>
<rect x="362" y="553" width="1.6" height="4" fill="#c32fb0"/>
<rect x="364.5" y="552.9" width="1.6" height="4.1" fill="#c32fb0"/>
<rect x="367" y="552.8" width="1.6" height="4.2" fill="#c32fb0"/>
<rect x="369.5" y="552.8" width="1.6" height="4.2" fill="#c32fb0"/>
<rect x="372" y="554" width="1.6" height="3" fill="#c32fb0"/>
<rect x="377" y="557" width="1.6" height="1" fill="#5a3cc8"/>
<rect x="379.5" y="557" width="1.6" height="2.7" fill="#5a3cc8"/>
<rect x="382" y="557" width="1.6" height="4.3" fill="#5a3cc8"/>
<rect x="384.5" y="557" width="1.6" height="5.2" fill="#5a3cc8"/>
<rect x="387" y="557" width="1.6" height="5" fill="#5a3cc8"/>
<rect x="389.5" y="557" width="1.6" height="4.8" fill="#5a3cc8"/>
<rect x="392" y="557" width="1.6" height="4.7" fill="#5a3cc8"/>
<rect x="394.5" y="557" width="1.6" height="4.5" fill="#5a3cc8"/>
<rect x="397" y="557" width="1.6" height="4.3" fill="#5a3cc8"/>
<rect x="399.5" y="557" width="1.6" height="4.1" fill="#5a3cc8"/>
<rect x="402" y="557" width="1.6" height="3.8" fill="#5a3cc8"/>
<rect x="404.5" y="557" width="1.6" height="3.2" fill="#5a3cc8"/>
<rect x="407" y="557" width="1.6" height="2.7" fill="#5a3cc8"/>
<rect x="409.5" y="557" width="1.6" height="2.1" fill="#5a3cc8"/>
<rect x="412" y="557" width="1.6" height="1.6" fill="#5a3cc8"/>
<rect x="414.5" y="557" width="1.6" height="1" fill="#5a3cc8"/>
<rect x="424.5" y="556.4" width="1.6" height="0.6" fill="#c32fb0"/>
<rect x="427" y="556.1" width="1.6" height="0.9" fill="#c32fb0"/>
<rect x="429.5" y="555.9" width="1.6" height="1.1" fill="#c32fb0"/>
<rect x="432" y="555.7" width="1.6" height="1.3" fill="#c32fb0"/>
<rect x="434.5" y="555.5" width="1.6" height="1.5" fill="#c32fb0"/>
<rect x="437" y="555.2" width="1.6" height="1.8" fill="#c32fb0"/>
<rect x="439.5" y="555" width="1.6" height="2" fill="#c32fb0"/>
<rect x="442" y="555" width="1.6" height="2" fill="#c32fb0"/>
<rect x="444.5" y="555.1" width="1.6" height="1.9" fill="#c32fb0"/>
<rect x="447" y="555.2" width="1.6" height="1.8" fill="#c32fb0"/>
<rect x="449.5" y="555.3" width="1.6" height="1.7" fill="#c32fb0"/>
<rect x="452" y="555.4" width="1.6" height="1.6" fill="#c32fb0"/>
<rect x="454.5" y="555.4" width="1.6" height="1.6" fill="#c32fb0"/>
<rect x="457" y="555.5" width="1.6" height="1.5" fill="#c32fb0"/>
<rect x="459.5" y="555.6" width="1.6" height="1.4" fill="#c32fb0"/>
<rect x="462" y="555.7" width="1.6" height="1.3" fill="#c32fb0"/>
<rect x="464.5" y="549.2" width="1.6" height="7.8" fill="#c32fb0"/>
<rect x="467" y="540.1" width="1.6" height="16.9" fill="#c32fb0"/>
<rect x="469.5" y="536.3" width="1.6" height="20.7" fill="#c32fb0"/>
<rect x="472" y="532.9" width="1.6" height="24.1" fill="#c32fb0"/>
<rect x="474.5" y="531.7" width="1.6" height="25.3" fill="#c32fb0"/>
<rect x="477" y="538.2" width="1.6" height="18.8" fill="#c32fb0"/>
<rect x="479.5" y="542.4" width="1.6" height="14.6" fill="#c32fb0"/>
<rect x="482" y="542.1" width="1.6" height="14.9" fill="#c32fb0"/>
<rect x="484.5" y="541.5" width="1.6" height="15.5" fill="#c32fb0"/>
<rect x="487" y="542.7" width="1.6" height="14.3" fill="#c32fb0"/>
<rect x="489.5" y="548.5" width="1.6" height="8.5" fill="#c32fb0"/>
<rect x="492" y="554.2" width="1.6" height="2.8" fill="#c32fb0"/>
<rect x="497" y="557" width="1.6" height="1.3" fill="#5a3cc8"/>
<rect x="499.5" y="557" width="1.6" height="2.6" fill="#5a3cc8"/>
<rect x="502" y="557" width="1.6" height="4" fill="#5a3cc8"/>
<rect x="504.5" y="557" width="1.6" height="4.4" fill="#5a3cc8"/>
<rect x="507" y="557" width="1.6" height="4" fill="#5a3cc8"/>
<rect x="509.5" y="557" width="1.6" height="3.7" fill="#5a3cc8"/>
<rect x="512" y="557" width="1.6" height="3.9" fill="#5a3cc8"/>
<rect x="514.5" y="557" width="1.6" height="4.2" fill="#5a3cc8"/>
<rect x="517" y="557" width="1.6" height="4.6" fill="#5a3cc8"/>
<rect x="519.5" y="557" width="1.6" height="5" fill="#5a3cc8"/>
<rect x="522" y="557" width="1.6" height="4.9" fill="#5a3cc8"/>
<rect x="524.5" y="557" width="1.6" height="4.2" fill="#5a3cc8"/>
<rect x="527" y="557" width="1.6" height="3.6" fill="#5a3cc8"/>
<rect x="529.5" y="557" width="1.6" height="4.5" fill="#5a3cc8"/>
<rect x="532" y="557" width="1.6" height="6.4" fill="#5a3cc8"/>
<rect x="534.5" y="557" width="1.6" height="8.2" fill="#5a3cc8"/>
<rect x="537" y="557" width="1.6" height="9.9" fill="#5a3cc8"/>
<rect x="539.5" y="557" width="1.6" height="6.1" fill="#5a3cc8"/>
<rect x="542" y="557" width="1.6" height="2.7" fill="#5a3cc8"/>
<rect x="547" y="555.2" width="1.6" height="1.8" fill="#c32fb0"/>
<rect x="549.5" y="554.6" width="1.6" height="2.4" fill="#c32fb0"/>
<rect x="552" y="555" width="1.6" height="2" fill="#c32fb0"/>
<rect x="554.5" y="555.4" width="1.6" height="1.6" fill="#c32fb0"/>
<rect x="557" y="555.9" width="1.6" height="1.1" fill="#c32fb0"/>
<rect x="559.5" y="556.3" width="1.6" height="0.7" fill="#c32fb0"/>
<rect x="567" y="557" width="1.6" height="1.4" fill="#5a3cc8"/>
<rect x="569.5" y="557" width="1.6" height="1.8" fill="#5a3cc8"/>
<rect x="572" y="557" width="1.6" height="2.3" fill="#5a3cc8"/>
<rect x="574.5" y="557" width="1.6" height="2.7" fill="#5a3cc8"/>
<rect x="577" y="557" width="1.6" height="3.1" fill="#5a3cc8"/>
<rect x="579.5" y="557" width="1.6" height="3.5" fill="#5a3cc8"/>
<rect x="582" y="557" width="1.6" height="4" fill="#5a3cc8"/>
<rect x="584.5" y="557" width="1.6" height="4.4" fill="#5a3cc8"/>
<rect x="587" y="557" width="1.6" height="4.1" fill="#5a3cc8"/>
<rect x="589.5" y="557" width="1.6" height="2.5" fill="#5a3cc8"/>
<rect x="592" y="557" width="1.6" height="1.2" fill="#5a3cc8"/>
<rect x="597" y="555.7" width="1.6" height="1.3" fill="#c32fb0"/>
<rect x="599.5" y="554.5" width="1.6" height="2.5" fill="#c32fb0"/>
<rect x="602" y="554.4" width="1.6" height="2.6" fill="#c32fb0"/>
<rect x="604.5" y="554.4" width="1.6" height="2.6" fill="#c32fb0"/>
<rect x="607" y="554.5" width="1.6" height="2.5" fill="#c32fb0"/>
<rect x="609.5" y="554.5" width="1.6" height="2.5" fill="#c32fb0"/>
<rect x="612" y="554.6" width="1.6" height="2.4" fill="#c32fb0"/>
<rect x="614.5" y="554.6" width="1.6" height="2.4" fill="#c32fb0"/>
<rect x="617" y="555" width="1.6" height="2" fill="#c32fb0"/>
<rect x="619.5" y="555.7" width="1.6" height="1.3" fill="#c32fb0"/>
<rect x="622" y="556.3" width="1.6" height="0.7" fill="#c32fb0"/>
<rect x="632" y="557" width="1.6" height="0.8" fill="#5a3cc8"/>
<rect x="634.5" y="557" width="1.6" height="1.2" fill="#5a3cc8"/>
<rect x="637" y="557" width="1.6" height="1.5" fill="#5a3cc8"/>
<rect x="639.5" y="557" width="1.6" height="1.9" fill="#5a3cc8"/>
<rect x="642" y="557" width="1.6" height="2.3" fill="#5a3cc8"/>
<rect x="644.5" y="557" width="1.6" height="2.6" fill="#5a3cc8"/>
<rect x="647" y="557" width="1.6" height="2.1" fill="#5a3cc8"/>
<rect x="649.5" y="557" width="1.6" height="1.5" fill="#5a3cc8"/>
<rect x="652" y="557" width="1.6" height="1" fill="#5a3cc8"/>
<rect x="659.5" y="556.2" width="1.6" height="0.8" fill="#c32fb0"/>
<rect x="662" y="555.7" width="1.6" height="1.3" fill="#c32fb0"/>
<rect x="664.5" y="555.1" width="1.6" height="1.9" fill="#c32fb0"/>
<rect x="667" y="555.3" width="1.6" height="1.7" fill="#c32fb0"/>
<rect x="669.5" y="555.7" width="1.6" height="1.3" fill="#c32fb0"/>
<rect x="672" y="556" width="1.6" height="1" fill="#c32fb0"/>
<rect x="687" y="557" width="1.6" height="1.1" fill="#5a3cc8"/>
<rect x="689.5" y="557" width="1.6" height="1.8" fill="#5a3cc8"/>
<rect x="692" y="557" width="1.6" height="2.5" fill="#5a3cc8"/>
<rect x="694.5" y="557" width="1.6" height="3.1" fill="#5a3cc8"/>
<rect x="697" y="557" width="1.6" height="2.9" fill="#5a3cc8"/>
<rect x="699.5" y="557" width="1.6" height="2.7" fill="#5a3cc8"/>
<rect x="702" y="557" width="1.6" height="2.5" fill="#5a3cc8"/>
<rect x="704.5" y="557" width="1.6" height="2.3" fill="#5a3cc8"/>
<rect x="707" y="557" width="1.6" height="2.1" fill="#5a3cc8"/>
<rect x="709.5" y="557" width="1.6" height="1.9" fill="#5a3cc8"/>
<rect x="712" y="557" width="1.6" height="1.7" fill="#5a3cc8"/>
<rect x="714.5" y="557" width="1.6" height="1.7" fill="#5a3cc8"/>
<rect x="717" y="557" width="1.6" height="1.7" fill="#5a3cc8"/>
<rect x="719.5" y="557" width="1.6" height="1.6" fill="#5a3cc8"/>
<rect x="722" y="557" width="1.6" height="1.6" fill="#5a3cc8"/>
<rect x="724.5" y="557" width="1.6" height="1.6" fill="#5a3cc8"/>
<rect x="727" y="557" width="1.6" height="1.5" fill="#5a3cc8"/>
<rect x="729.5" y="557" width="1.6" height="1.5" fill="#5a3cc8"/>
<rect x="732" y="557" width="1.6" height="1.5" fill="#5a3cc8"/>
<rect x="734.5" y="557" width="1.6" height="1.4" fill="#5a3cc8"/>
<rect x="737" y="557" width="1.6" height="1.4" fill="#5a3cc8"/>
<rect x="739.5" y="557" width="1.6" height="1.4" fill="#5a3cc8"/>
<path d="M70 556C75 556.4 85 558.2 100 558.5C115 558.8 140 558 160 558C180 558 203 558.7 220 558.5C237 558.3 251.6 557.9 262 557C272.4 556.1 273.9 553.3 282.4 553C290.9 552.7 303.5 554.3 312.8 555C322.1 555.7 327.9 558.5 338 557C348.1 555.5 359.7 546 373.4 546C387.1 546 405.1 555.4 420 557C434.9 558.6 453.3 560.6 462.7 555.7C472.1 550.8 471.3 534.7 476.2 527.6C481.1 520.5 487.4 515.2 491.9 513C496.4 510.8 498.2 511.9 503.1 514.1C508 516.4 514.6 522.6 521 526.5C527.4 530.4 533.8 535.8 541.3 537.7C548.8 539.6 558.1 536.4 566 537.7C573.9 539 579.1 543.7 588.5 545.6C597.9 547.5 612.8 547.6 622.2 548.9C631.6 550.2 635.3 553.4 644.7 553.4C654.1 553.4 667.2 548.3 678.4 549C689.6 549.7 701.7 555.8 712 557.5C722.3 559.2 735.3 558.8 740 559" fill="none" stroke="#f0a050" stroke-width="1.1" opacity="1"/>
<path d="M70 557C72.5 557 80.6 556.6 85.3 557C90 557.4 91.3 559.5 98 559.5C104.7 559.5 116 557.2 125.7 557C135.4 556.8 145.1 558.7 156 558.5C166.9 558.3 180.8 555.8 191.4 556C202 556.2 207.5 559.4 219.3 559.5C231.1 559.6 251.7 557.8 262.2 556.5C272.7 555.2 276.1 552.6 282.4 552C288.7 551.4 294.9 552.2 300 553C305.1 553.8 310.2 556.7 312.8 557C315.4 557.3 312.8 554.8 315.3 555C317.8 555.2 324.2 558.8 328 558.5C331.8 558.2 334.2 554.4 338 553C341.8 551.6 345.2 551.7 350.7 550C356.2 548.3 365.5 542.5 371 543C376.5 543.5 378.6 550.8 383.6 553C388.6 555.2 394.9 555.4 401 556C407.1 556.6 413.5 557 420 556.8C426.5 556.6 433.1 555 440.2 554.6C447.3 554.2 458.2 558.5 462.7 554.6C467.2 550.7 465.3 538.6 467.2 531C469.1 523.4 471.9 512.1 474 508.9C476.1 505.7 477.6 512.6 479.6 511.9C481.7 511.1 483.9 504.2 486.3 504.4C488.7 504.6 490.2 510.1 494.2 513C498.1 515.9 505.5 519 510 522C514.5 525 518 529.1 521 531C524 532.9 525.2 531 527.9 533.2C530.5 535.4 533.5 543.6 536.9 544C540.2 544.4 543.5 536.4 548 535.4C552.5 534.4 557.4 535.5 563.8 537.7C570.2 540 580.3 547.8 586.3 548.9C592.3 550 594.9 544.8 599.8 544.4C604.7 544 608 544.3 615.5 546.2C623 548.1 636.5 555.2 644.7 555.7C653 556.2 659 550.1 665 549C671 547.9 675.8 547.9 680.7 549C685.6 550.1 689 554 694.2 555.7C699.4 557.4 704.5 558.2 712.1 559C719.7 559.8 735.4 560 740 560.2" fill="none" stroke="#8fd46a" stroke-width="1.1" opacity="1"/>
<polyline points="72.4,681.2 74.6,680 78,690.2 81.3,691.3 83.6,692.4 87,705.9 89.2,696.9 92.6,711.5 94.8,710.4 97.8,716.7 100.4,714.9 105,702.5 108.3,702.5 112.8,692.4 118.4,692.4 122.9,670 125.2,677.8 127.4,665.4 131.9,680 135.3,674.4 138.7,675.6 140.9,681.2 147.6,693.5 152.1,690.2 157.8,703.7 163.4,695.8 165.6,695.8 169,680 173.5,701.4 183.6,678.9 187,678.9 191.5,665.4 194.8,678.9 197,682.3 199.3,695.8 201.6,685.7 205,695.8 209.4,692.4 213.9,701.4 217.3,702.5 221.8,716 225.2,714.9 227.4,717.6 229.7,716 234.2,691.3 237.5,702.5 239.8,699.2 246.5,663.2 251,661 254.4,666.6 257.8,653.1 260,652 267.9,646.3 270.1,659.8 275.7,647.5 278,647.5 281.3,653.1 284.7,650.8 288.1,655.3 290.3,652 293.7,666.6 295.9,663.2 298.2,676.7 302.7,685.7 306.1,679 310.6,695.8 313.9,681.2 316.2,681.2 320.7,700.3 324,695.8 326.3,699.2 328.5,692.4 331.9,692.4 338.7,671.1 342,676.7 345.4,673.3 348.8,677.8 352.1,672.2 356.6,659.8 360,658.7 363.4,650.8 367.9,654.2 371.2,657.6 374.6,665.4 376.9,659.8 380,664.2 382.5,674.3 386.3,678.1 389.6,675.6 396.4,685.7 399.7,704.6 402.8,704.6 405.3,707.2 410.3,704.6 412.9,712.2 415.4,707.2 417.9,684.4 420.4,681.9 423,686.9 428,666.7 433.1,673 438.1,665.4 440.7,665.4 443.2,676.8 447,673 450.8,666.7 455.8,679.3 459.6,674.3 463.4,689.5 466.5,647.8 471,644 473.5,644 477.3,650.3 484.9,644 488.7,649 492.5,649 495,650.3 498.8,646.5 502.6,659.1 508.9,662.9 514,659.1 519,676.8 524.1,664.2 527.9,669.2 530.4,668 535.5,683.1 541.8,674.3 545.6,673 548.1,661.7 551.9,671.8 555.7,664.2 560.7,666.7 567.1,659.1 570.9,649 574.6,654.1 578.4,670.5 581,671.8 583.5,685.7 587.3,669.2 591.1,662.9 593.6,666.7 596.1,662.9 598.7,669.2 602.4,664.2 605,665.4 607.5,662.9 610,668 613.8,649 616.4,661.7 621.4,655.3 626.5,668 631.5,685.7 634,684.4 637.8,695.8 644.2,692 651.7,671.8 656.8,680.6 663.1,665.4 665.6,656.6 669.4,657.9 673.2,647.8 677,645.2 680.8,640.2 683.3,644 687.1,657.9 690.4,678.1 693.4,673 698.5,693.3 704.8,698.3 708.6,707.2 713.7,708.4 718.7,704.6 723.8,702.1 725.8,694.5 728.8,716 736.4,697 741.2,702.5 743.5,685.6 745.7,698 747.5,683.4 755,670 765,665 775,672 779.4,683.4 781.7,684.5 785,721.6 788.4,721.6 792.9,727.2 797.4,730.6 801.9,739.6 805.3,716 807.5,716 812,707 815.4,695.7 817.6,696.9 822.1,689 825.5,696.9 830,683.4 838,670 845,675 849.1,683.4 850.7,686.7 852.5,683.4 870,665 890,670 905,675 912,683.4 914.3,690 916.5,683.4 922,675 927.8,683.4 930,695.7 932.2,693.5 935.6,702.5 939,699.1 942.4,702.5 949.1,699.1 952.5,702.5 954.7,695.7 959.2,711.5 962.6,707 966,698 968.2,704.7 971.6,691.2 974.9,696.9 980.6,694.6 985.1,695.7 988.4,692.4 991.1,700.2 992.9,690.1 997.4,699.1 1001.9,702.5 1004.2,699.1 1007.5,702.5 1012,689 1016.5,701.3 1022.1,684.5 1024.4,684.5 1030,675 1038,672 1044.6,683.5 1047,690.4 1050.4,688.1 1051.6,683.5 1053.9,690.4 1057.4,703.2 1059.7,702 1063.2,714.8 1065.5,718.2 1067.8,718.2 1071.3,722.2 1074.8,720.6 1078.2,715.9 1080.6,719.4 1085.2,707.8 1087.5,711.3 1092.1,696.2 1094.5,697.4 1100.3,684.6 1110,670 1130,665 1145,675 1152.4,683.5 1153.6,689.3 1155.9,688.1 1158.2,699.7 1160.5,695.1 1166.3,699.7 1172.1,689.3 1175.6,688.1 1179,683.5 1185,675 1191.8,683.5 1194.1,688.1 1197.1,703.2 1202.2,683.5 1206,675 1211.5,696.2 1217.3,705.5 1223.1,703.2 1227.7,699.7 1232.4,685.8 1237.4,724 1239.3,717.1 1242.8,711.3 1248.6,697.4 1254.4,687 1256.7,683.5 1265,670 1280,668 1293.8,683.5 1297.2,698.5 1304.2,721.7 1306.5,721.7 1310,709 1313.5,705.5 1318.1,697.4 1326.2,683.5 1332,691.6 1337.8,683.5 1340,680" fill="none" stroke="#9ed27a" stroke-width="1.05" stroke-linejoin="round" opacity="1"/>
</svg>
<div class="abs" style="left:738px;top:285px;width:648px;height:398px;background:#5a5a5a;border-radius:3px 3px 0 0;overflow:hidden">
<div class="abs" style="left:0;top:0;width:648px;height:9px;background:linear-gradient(#808080,#747474)"></div>
<div class="abs" style="left:5px;top:1.5px;width:65px;color:#fff;font-size:12.5px;font-weight:bold;line-height:16px;white-space:nowrap;overflow:hidden;text-align:justify;text-align-last:justify">ニュース本文</div>
<svg class="abs" style="left:632px;top:4px" width="9" height="9" viewBox="0 0 9 9"><path d="M1 1L8 8M8 1L1 8" stroke="#fff" stroke-width="1.8"/></svg>
<div class="abs" style="left:5px;top:17px;width:639px;height:377px;border:1px solid #6c6c6c;background:#585858"></div>
<div class="abs" style="left:16px;top:28px;color:#fff;font-size:13.5px;font-weight:bold;line-height:18px;white-space:nowrap">2023/11/15 13:38:00</div>
<div class="abs" style="left:176.5px;top:28px;width:346px;color:#fff;font-size:13px;font-weight:bold;line-height:18px;white-space:nowrap;overflow:hidden;text-align:justify;text-align-last:justify">日足テクニカル･ユーロドル＝雲を上抜け、底堅い推移期待</div>
<div class="abs" style="left:30px;top:88.3px;width:598.5px;color:#fff;font-size:14px;line-height:18px;white-space:nowrap;overflow:hidden;text-align:justify;text-align-last:justify">大陽線引け。相場の上振れ前には1.0662ドルに位置していた一目均衡表・転換線を割り込むこと</div>
<div class="abs" style="left:16.6px;top:106.3px;width:607.1px;color:#fff;font-size:14px;line-height:18px;white-space:nowrap;overflow:hidden;text-align:justify;text-align-last:justify">なく急上昇へ転じ、8月31日以来の高値1.0887ドルまで上昇した。一目・雲の抵抗をこなしての上</div>
<div class="abs" style="left:16.6px;top:124.3px;width:607.1px;color:#fff;font-size:14px;line-height:18px;white-space:nowrap;overflow:hidden;text-align:justify;text-align-last:justify">伸。相場の強弱の分岐点200日移動平均線も上抜けた。買い優位に転じ、抵抗からサポートに転換</div>
<div class="abs" style="left:16.6px;top:142.3px;width:558.1px;color:#fff;font-size:14px;line-height:18px;white-space:nowrap;overflow:hidden;text-align:justify;text-align-last:justify">したと考えられる200日線や、雲の上限1.0757ドルを背景とした底堅い推移が期待できる。</div>
<div class="abs" style="left:17px;top:178.6px;width:89px;color:#fff;font-size:14px;line-height:18px;white-space:nowrap;overflow:hidden;text-align:justify;text-align-last:justify">レジスタンス1</div>
<div class="abs" style="left:135px;top:178.6px;width:119px;color:#fff;font-size:14px;line-height:18px;white-space:nowrap;overflow:hidden;text-align:justify;text-align-last:justify">1.0945（8/30高値）</div>
<div class="abs" style="left:17px;top:196.6px;width:57px;color:#fff;font-size:14px;line-height:18px;white-space:nowrap;overflow:hidden;text-align:justify;text-align-last:justify">前日終値</div>
<div class="abs" style="left:135px;top:196.6px;width:47px;color:#fff;font-size:14px;line-height:18px;white-space:nowrap;overflow:hidden;text-align:justify;text-align-last:justify">1.0879</div>
<div class="abs" style="left:17px;top:214.6px;width:61px;color:#fff;font-size:14px;line-height:18px;white-space:nowrap;overflow:hidden;text-align:justify;text-align-last:justify">サポート1</div>
<div class="abs" style="left:135px;top:214.6px;width:168px;color:#fff;font-size:14px;line-height:18px;white-space:nowrap;overflow:hidden;text-align:justify;text-align-last:justify">1.0804（200日移動平均線）</div>
<div class="abs" style="left:17px;top:249.3px;width:42px;color:#fff;font-size:14px;line-height:18px;white-space:nowrap;overflow:hidden;text-align:justify;text-align-last:justify">（関口）</div>
<div class="abs" style="left:12px;top:368px;width:50px;height:19px;border-radius:3px;background:linear-gradient(#3a3a3a,#050505);border:1px solid #000;color:#fff;font-size:12px;line-height:19px;text-align:center"><div class="abs" style="left:1px;top:1px;right:1px;bottom:1px;border:1px dotted #aaa"></div>old</div>
<div class="abs" style="left:587px;top:368px;width:50px;height:19px;border-radius:3px;background:linear-gradient(#3a3a3a,#050505);border:1px solid #000;color:#fff;font-size:12px;line-height:19px;text-align:center">new</div>
</div>
</body></html>
